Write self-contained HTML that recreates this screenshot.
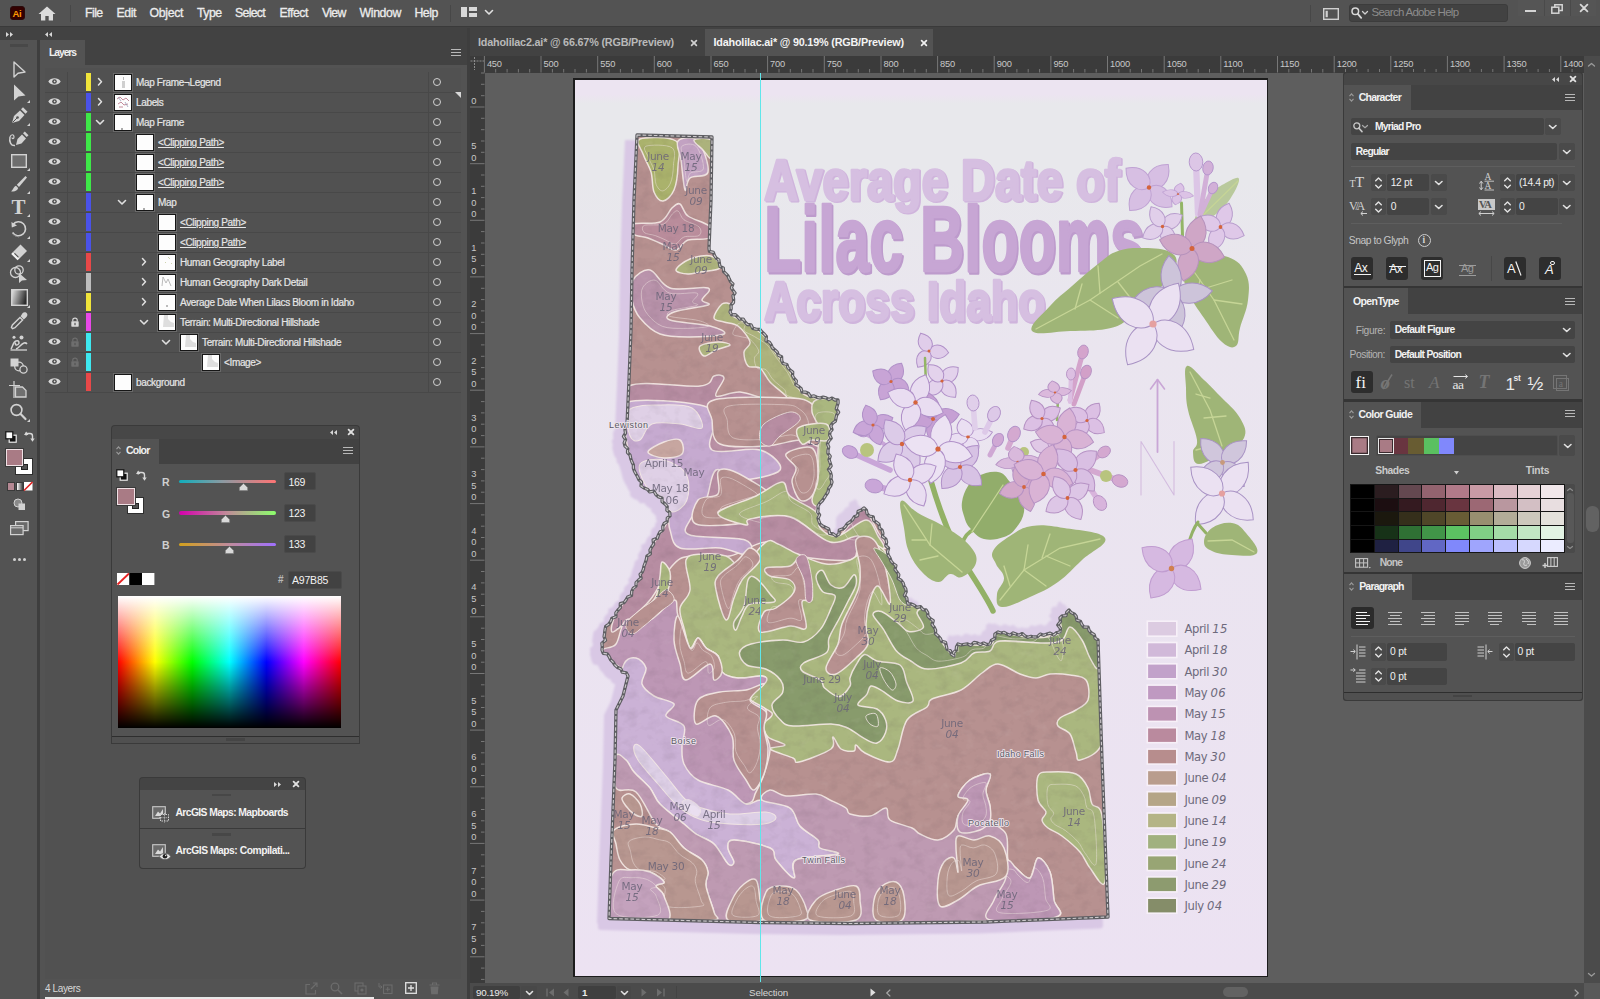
<!DOCTYPE html>
<html lang="en"><head><meta charset="utf-8"><title>Idaholilac.ai @ 90.19% (RGB/Preview) - Adobe Illustrator</title>
<style>
*{box-sizing:border-box;margin:0;padding:0}
html,body{width:1600px;height:999px;overflow:hidden;background:#535353;font-family:"Liberation Sans",sans-serif;color:#ddd;font-size:11px}
.a{position:absolute}
.t{position:absolute;white-space:nowrap;line-height:1;transform-origin:0 50%}
.fld{position:absolute;background:#424242;border-radius:2px}
.dk{position:absolute;background:#2b2b2b;border-radius:2px}
svg{position:absolute;overflow:visible}
.b{font-weight:bold}
</style></head>
<body>
<div class="a" style="left:0px;top:0px;width:1600px;height:26px;background:#535353;"></div>
<div class="a" style="left:0px;top:26px;width:1600px;height:14px;background:#424242;"></div>
<div class="a" style="left:0px;top:26px;width:1600px;height:1px;background:#3a3a3a;"></div>
<div class="a" style="left:10px;top:6px;width:15px;height:14px;background:#330000;border-radius:3px;border:1px solid #2a0a0a"></div>
<div class="t" style="left:12.5px;top:8.6px;font-size:9.5px;color:#ff9a00;font-weight:bold;letter-spacing:-0.3px;">Ai</div>
<svg style="left:38px;top:6px" width="18" height="15" viewBox="0 0 18 15"><path d="M9 0.5 L0.5 8 L3 8 L3 14.5 L7.3 14.5 L7.3 10 L10.7 10 L10.7 14.5 L15 14.5 L15 8 L17.5 8 Z" fill="#dcdcdc"/></svg>
<div class="a" style="left:70px;top:5px;width:1px;height:17px;background:#474747;"></div>
<div class="t" style="left:85px;top:6.8px;font-size:12.3px;color:#ececec;letter-spacing:-0.555px;-webkit-text-stroke:0.3px #ececec;">File</div>
<div class="t" style="left:116.6px;top:6.8px;font-size:12.3px;color:#ececec;letter-spacing:-0.449px;-webkit-text-stroke:0.3px #ececec;">Edit</div>
<div class="t" style="left:149.6px;top:6.8px;font-size:12.3px;color:#ececec;letter-spacing:-0.358px;-webkit-text-stroke:0.3px #ececec;">Object</div>
<div class="t" style="left:197px;top:6.8px;font-size:12.3px;color:#ececec;letter-spacing:-0.516px;-webkit-text-stroke:0.3px #ececec;">Type</div>
<div class="t" style="left:235px;top:6.8px;font-size:12.3px;color:#ececec;letter-spacing:-0.697px;-webkit-text-stroke:0.3px #ececec;">Select</div>
<div class="t" style="left:279.4px;top:6.8px;font-size:12.3px;color:#ececec;letter-spacing:-0.437px;-webkit-text-stroke:0.3px #ececec;">Effect</div>
<div class="t" style="left:322px;top:6.8px;font-size:12.3px;color:#ececec;letter-spacing:-0.709px;-webkit-text-stroke:0.3px #ececec;">View</div>
<div class="t" style="left:359.6px;top:6.8px;font-size:12.3px;color:#ececec;letter-spacing:-0.391px;-webkit-text-stroke:0.3px #ececec;">Window</div>
<div class="t" style="left:414.4px;top:6.8px;font-size:12.3px;color:#ececec;letter-spacing:-0.424px;-webkit-text-stroke:0.3px #ececec;">Help</div>
<div class="a" style="left:449.5px;top:5px;width:1px;height:17px;background:#474747;"></div>
<svg style="left:461px;top:7px" width="16" height="10" viewBox="0 0 16 10"><rect x="0" y="0" width="6" height="10" fill="#d8d8d8"/><rect x="8" y="0" width="8" height="4" fill="#d8d8d8"/><rect x="8" y="6" width="8" height="4" fill="#d8d8d8"/></svg>
<svg style="left:485.0px;top:10.25px" width="8" height="4.5" viewBox="0 0 8 4.5"><path d="M0.5 0.5 L4.0 4.0 L7.5 0.5" fill="none" stroke="#e0e0e0" stroke-width="1.6" stroke-linecap="round" stroke-linejoin="round"/></svg>
<div class="a" style="left:1310px;top:5px;width:1px;height:17px;background:#474747;"></div>
<svg style="left:1322.5px;top:8px" width="16" height="12" viewBox="0 0 16 12"><rect x="0.7" y="0.7" width="14.6" height="10.6" fill="none" stroke="#d0d0d0" stroke-width="1.4"/><rect x="2.6" y="2.8" width="2.2" height="6.4" fill="#d0d0d0"/></svg>
<div class="a" style="left:1348.5px;top:4px;width:159.5px;height:17.5px;background:#424242;border-radius:3px;border:1px solid #3c3c3c"></div>
<svg style="left:1351px;top:7px" width="11" height="12" viewBox="0 0 11 12"><circle cx="4.3" cy="4.3" r="3.3" fill="none" stroke="#d8d8d8" stroke-width="1.5"/><path d="M6.8 6.9 L10.2 10.8" stroke="#d8d8d8" stroke-width="1.8" stroke-linecap="round"/></svg>
<svg style="left:1362.0px;top:11.25px" width="6" height="3.5" viewBox="0 0 6 3.5"><path d="M0.5 0.5 L3.0 3.0 L5.5 0.5" fill="none" stroke="#d0d0d0" stroke-width="1.3" stroke-linecap="round" stroke-linejoin="round"/></svg>
<div class="t" style="left:1371.5px;top:7.2px;font-size:11.5px;color:#8c8c8c;letter-spacing:-0.723px;">Search Adobe Help</div>
<div class="a" style="left:1518px;top:0px;width:78px;height:16px;background:#585858;opacity:.5"></div>
<div class="a" style="left:1544px;top:0px;width:1px;height:16px;background:#4a4a4a;"></div>
<div class="a" style="left:1570px;top:0px;width:1px;height:16px;background:#4a4a4a;"></div>
<div class="a" style="left:1525px;top:9.5px;width:11px;height:2.4px;background:#d4d4d4;"></div>
<svg style="left:1551px;top:4px" width="12" height="10" viewBox="0 0 12 10"><rect x="0.8" y="3.2" width="7" height="6" fill="none" stroke="#d4d4d4" stroke-width="1.5"/><path d="M3.8 3 L3.8 0.8 L11.2 0.8 L11.2 6.6 L8.2 6.6" fill="none" stroke="#d4d4d4" stroke-width="1.5"/></svg>
<svg style="left:1579.5px;top:4.0px" width="8" height="8" viewBox="0 0 8 8"><path d="M0.6 0.6 L7.4 7.4 M7.4 0.6 L0.6 7.4" stroke="#d8d8d8" stroke-width="1.8" stroke-linecap="round"/></svg>
<svg style="left:5.5px;top:32.0px" width="7" height="5" viewBox="0 0 7 5"><path d="M0 0 L3 2.5 L0 5 Z M4 0 L7 2.5 L4 5 Z" fill="#d8d8d8"/></svg>
<svg style="left:45.0px;top:32.0px" width="7" height="5" viewBox="0 0 7 5"><path d="M3 0 L0 2.5 L3 5 Z M7 0 L4 2.5 L7 5 Z" fill="#d8d8d8"/></svg>
<div class="a" style="left:467px;top:28px;width:3px;height:971px;background:#3e3e3e;"></div>
<div class="a" style="left:470px;top:28px;width:1130px;height:28px;background:#424242;"></div>
<div class="a" style="left:705px;top:29px;width:228px;height:27px;background:#535353;"></div>
<div class="t" style="left:478px;top:36.6px;font-size:10.8px;color:#b9b9b9;font-weight:bold;letter-spacing:-0.19px;">Idaholilac2.ai* @ 66.67% (RGB/Preview)</div>
<svg style="left:691.0px;top:39.5px" width="6" height="6" viewBox="0 0 6 6"><path d="M0.6 0.6 L5.4 5.4 M5.4 0.6 L0.6 5.4" stroke="#cfcfcf" stroke-width="1.7" stroke-linecap="round"/></svg>
<div class="t" style="left:713.5px;top:36.6px;font-size:10.8px;color:#f4f4f4;font-weight:bold;letter-spacing:-0.184px;">Idaholilac.ai* @ 90.19% (RGB/Preview)</div>
<svg style="left:920.5px;top:39.5px" width="6" height="6" viewBox="0 0 6 6"><path d="M0.6 0.6 L5.4 5.4 M5.4 0.6 L0.6 5.4" stroke="#f0f0f0" stroke-width="1.7" stroke-linecap="round"/></svg>
<div class="a" style="left:470px;top:56px;width:1130px;height:943px;background:#5e5e5e;"></div>
<div class="a" style="left:573px;top:78px;width:695px;height:899px;background:#1c1c1c"></div>
<div class="a" id="ab" style="left:574.5px;top:79.5px;width:692px;height:896px;background:linear-gradient(180deg,#ece4f1 0%,#ece4f1 1.6%,#e8e8ec 2.6%,#e8e8ec 11%,#eae5ef 30%,#ece2f2 100%);overflow:hidden"><svg style="left:-574.5px;top:-79.5px" width="1600" height="999" viewBox="0 0 1600 999"><defs><clipPath id="nec"><rect x="845" y="470" width="260" height="220"/></clipPath><clipPath id="idc"><path d="M637.0 135.0L712.0 137.0L711.0 200.0L709.0 248.0L709.4 251.4L713.4 252.4L714.4 255.4L716.0 258.0L718.8 259.8L719.3 263.2L720.0 266.5L723.3 268.0L723.6 271.5L725.8 273.7L728.0 276.0L729.2 278.8L730.5 281.6L732.9 283.9L731.4 287.9L733.1 290.5L735.0 293.0L733.0 295.7L733.6 299.2L733.5 302.5L731.0 305.0L731.2 308.6L730.0 312.0L731.7 314.9L735.4 314.7L737.6 316.8L739.7 319.1L743.3 319.1L745.0 322.0L747.4 324.5L751.0 324.8L752.7 328.3L756.0 329.2L759.8 329.3L762.0 332.0L764.4 334.2L766.4 336.6L766.0 340.8L769.4 342.3L771.2 344.9L772.4 347.9L775.0 350.0L777.3 352.2L778.3 355.3L781.6 356.8L781.7 360.6L783.1 363.5L786.9 364.5L787.9 367.7L790.0 370.0L792.7 372.1L792.5 375.7L794.1 378.5L796.4 380.8L795.8 384.7L798.9 386.6L801.2 388.8L802.0 392.0L805.3 392.1L808.3 393.2L810.4 396.7L814.0 395.9L816.9 397.3L820.0 398.0L823.1 397.2L826.1 397.9L828.9 399.5L832.1 398.1L835.0 400.0L838.0 400.0L838.1 403.0L837.1 406.0L836.3 408.9L838.6 412.2L836.7 415.0L836.0 418.0L835.4 421.1L832.6 423.2L830.8 425.7L832.0 429.6L830.0 432.0L829.6 435.0L831.2 438.2L828.8 441.0L827.4 443.9L828.7 447.0L828.0 450.0L827.9 453.3L830.2 456.2L829.0 459.6L830.1 462.7L831.1 465.9L828.5 469.4L830.5 472.4L831.3 475.6L830.9 478.9L832.0 482.0L830.9 485.4L828.7 488.4L828.0 492.0L826.0 495.0L824.2 497.9L822.3 500.7L819.8 503.1L818.0 506.0L818.1 509.0L817.7 512.1L819.6 514.9L818.0 518.2L818.9 521.1L820.0 524.0L822.6 526.1L825.7 527.5L828.7 529.0L829.6 533.4L833.3 534.0L836.0 536.0L838.9 534.2L839.3 530.0L842.9 528.9L845.4 526.7L847.2 523.8L850.0 522.0L852.5 519.8L854.3 516.9L857.6 515.6L858.1 511.4L861.4 510.1L864.0 508.0L866.3 510.2L867.1 513.6L869.2 516.0L873.2 516.8L873.8 520.4L876.5 522.3L879.0 524.3L879.3 528.1L882.0 530.0L882.9 533.1L882.5 536.6L885.8 539.0L886.6 542.2L885.9 545.7L888.6 548.3L887.5 552.0L888.2 555.1L890.0 558.0L891.0 561.0L893.0 563.5L895.9 565.5L895.0 569.5L896.9 572.0L898.8 574.6L898.1 578.5L901.2 580.4L903.1 582.9L904.0 586.0L905.7 588.8L906.2 591.8L904.4 595.4L906.8 598.0L907.1 601.1L908.0 604.0L911.3 604.0L914.2 605.3L916.9 607.3L920.5 606.6L922.8 609.6L926.0 610.0L927.7 612.7L927.9 616.1L930.2 618.6L933.2 620.7L932.1 624.7L934.2 627.2L935.6 630.1L935.5 633.7L938.0 636.0L940.3 638.3L941.6 641.3L945.5 642.3L946.3 645.8L947.0 649.3L950.4 650.7L951.3 654.1L954.0 656.0L953.6 652.5L956.2 650.1L956.5 646.8L958.0 644.0L961.2 645.0L964.4 644.3L967.6 643.9L970.8 645.4L974.0 642.5L977.2 642.9L980.4 644.6L983.6 643.1L986.8 644.6L990.0 644.0L991.3 640.5L994.8 638.5L994.9 634.2L998.0 632.0L1000.9 633.0L1004.1 632.4L1006.9 634.0L1009.8 635.3L1013.2 632.9L1016.1 634.1L1019.0 635.2L1022.2 633.6L1025.0 635.9L1027.8 637.3L1031.0 636.3L1034.0 637.0L1037.3 636.9L1040.2 634.1L1043.8 635.3L1046.9 634.0L1050.1 633.2L1053.8 635.0L1056.7 632.6L1060.0 632.0L1060.5 628.5L1057.8 625.0L1060.5 621.5L1060.0 618.0L1062.1 615.8L1065.9 615.6L1066.8 612.1L1069.0 610.0L1071.0 612.5L1074.2 613.9L1076.2 616.4L1076.9 620.3L1080.4 621.3L1081.8 624.4L1083.7 627.0L1088.1 627.2L1089.2 630.7L1091.4 633.0L1094.2 634.7L1095.2 638.3L1098.0 640.0L1100.0 700.0L1102.0 760.0L1108.0 917.0L986.0 922.0L850.0 923.5L760.0 922.5L609.0 918.5L611.0 860.0L613.0 810.0L615.0 760.0L616.0 710.0L623.0 696.0L628.0 676.0L626.3 672.8L622.2 672.2L620.8 668.7L617.4 667.4L614.9 665.0L613.0 662.0L610.6 659.8L609.2 656.7L607.3 653.9L603.2 653.3L602.0 650.0L602.3 646.6L601.9 643.2L605.5 640.3L604.1 636.7L604.6 633.3L605.0 630.0L605.7 626.4L608.7 624.3L610.7 621.5L611.9 618.3L615.9 616.8L615.9 612.7L618.0 610.0L620.3 607.7L620.3 603.7L624.1 602.6L626.0 600.0L627.7 597.0L631.5 595.5L631.7 591.4L633.3 588.3L636.0 586.0L636.1 582.7L638.4 580.3L641.1 578.1L640.1 574.4L642.3 572.0L643.4 569.1L644.0 566.0L645.2 562.8L646.3 559.6L646.9 556.2L650.4 553.8L650.0 550.0L651.6 547.0L653.6 544.2L653.1 539.9L657.2 538.3L658.4 535.1L660.0 532.0L662.9 530.1L662.8 526.4L664.2 523.5L667.1 521.6L667.3 518.0L670.0 516.0L669.7 512.5L666.9 510.2L667.2 506.5L664.9 503.9L662.1 501.6L662.0 498.0L658.7 496.9L656.0 494.7L654.0 491.2L649.7 491.9L647.3 489.2L644.0 488.0L641.0 486.0L641.5 482.0L639.0 479.7L637.6 476.8L636.0 474.0L634.5 471.2L633.4 468.2L633.4 464.9L632.0 462.0L630.8 458.7L630.1 455.2L627.5 452.5L627.7 448.6L625.0 446.0L624.2 442.8L625.5 439.6L623.5 436.4L625.5 433.2L625.0 430.0L625.4 426.8L627.0 424.0L629.0 380.0L631.0 330.0L632.0 270.0L634.0 200.0Z"/></clipPath><filter id="sb" x="-5%" y="-5%" width="110%" height="110%"><feGaussianBlur stdDeviation="1.2"/></filter><filter id="hs" x="0" y="0" width="100%" height="100%" color-interpolation-filters="sRGB"><feTurbulence type="fractalNoise" baseFrequency="0.08 0.1" numOctaves="3" seed="11" result="n"/><feColorMatrix in="n" type="matrix" values="0 0 0 0 0.28 0 0 0 0 0.22 0 0 0 0 0.26 1.3 0 0 0 -0.6" result="d"/><feColorMatrix in="n" type="matrix" values="0 0 0 0 1 0 0 0 0 0.97 0 0 0 0 0.95 0 -1.2 0 0 0.5" result="l"/><feMerge><feMergeNode in="d"/><feMergeNode in="l"/></feMerge></filter></defs><g filter="url(#sb)"><path d="M637.0 135.0L712.0 137.0L711.0 200.0L709.0 248.0L709.4 251.4L713.4 252.4L714.4 255.4L716.0 258.0L718.8 259.8L719.3 263.2L720.0 266.5L723.3 268.0L723.6 271.5L725.8 273.7L728.0 276.0L729.2 278.8L730.5 281.6L732.9 283.9L731.4 287.9L733.1 290.5L735.0 293.0L733.0 295.7L733.6 299.2L733.5 302.5L731.0 305.0L731.2 308.6L730.0 312.0L731.7 314.9L735.4 314.7L737.6 316.8L739.7 319.1L743.3 319.1L745.0 322.0L747.4 324.5L751.0 324.8L752.7 328.3L756.0 329.2L759.8 329.3L762.0 332.0L764.4 334.2L766.4 336.6L766.0 340.8L769.4 342.3L771.2 344.9L772.4 347.9L775.0 350.0L777.3 352.2L778.3 355.3L781.6 356.8L781.7 360.6L783.1 363.5L786.9 364.5L787.9 367.7L790.0 370.0L792.7 372.1L792.5 375.7L794.1 378.5L796.4 380.8L795.8 384.7L798.9 386.6L801.2 388.8L802.0 392.0L805.3 392.1L808.3 393.2L810.4 396.7L814.0 395.9L816.9 397.3L820.0 398.0L823.1 397.2L826.1 397.9L828.9 399.5L832.1 398.1L835.0 400.0L838.0 400.0L838.1 403.0L837.1 406.0L836.3 408.9L838.6 412.2L836.7 415.0L836.0 418.0L835.4 421.1L832.6 423.2L830.8 425.7L832.0 429.6L830.0 432.0L829.6 435.0L831.2 438.2L828.8 441.0L827.4 443.9L828.7 447.0L828.0 450.0L827.9 453.3L830.2 456.2L829.0 459.6L830.1 462.7L831.1 465.9L828.5 469.4L830.5 472.4L831.3 475.6L830.9 478.9L832.0 482.0L830.9 485.4L828.7 488.4L828.0 492.0L826.0 495.0L824.2 497.9L822.3 500.7L819.8 503.1L818.0 506.0L818.1 509.0L817.7 512.1L819.6 514.9L818.0 518.2L818.9 521.1L820.0 524.0L822.6 526.1L825.7 527.5L828.7 529.0L829.6 533.4L833.3 534.0L836.0 536.0L838.9 534.2L839.3 530.0L842.9 528.9L845.4 526.7L847.2 523.8L850.0 522.0L852.5 519.8L854.3 516.9L857.6 515.6L858.1 511.4L861.4 510.1L864.0 508.0L866.3 510.2L867.1 513.6L869.2 516.0L873.2 516.8L873.8 520.4L876.5 522.3L879.0 524.3L879.3 528.1L882.0 530.0L882.9 533.1L882.5 536.6L885.8 539.0L886.6 542.2L885.9 545.7L888.6 548.3L887.5 552.0L888.2 555.1L890.0 558.0L891.0 561.0L893.0 563.5L895.9 565.5L895.0 569.5L896.9 572.0L898.8 574.6L898.1 578.5L901.2 580.4L903.1 582.9L904.0 586.0L905.7 588.8L906.2 591.8L904.4 595.4L906.8 598.0L907.1 601.1L908.0 604.0L911.3 604.0L914.2 605.3L916.9 607.3L920.5 606.6L922.8 609.6L926.0 610.0L927.7 612.7L927.9 616.1L930.2 618.6L933.2 620.7L932.1 624.7L934.2 627.2L935.6 630.1L935.5 633.7L938.0 636.0L940.3 638.3L941.6 641.3L945.5 642.3L946.3 645.8L947.0 649.3L950.4 650.7L951.3 654.1L954.0 656.0L953.6 652.5L956.2 650.1L956.5 646.8L958.0 644.0L961.2 645.0L964.4 644.3L967.6 643.9L970.8 645.4L974.0 642.5L977.2 642.9L980.4 644.6L983.6 643.1L986.8 644.6L990.0 644.0L991.3 640.5L994.8 638.5L994.9 634.2L998.0 632.0L1000.9 633.0L1004.1 632.4L1006.9 634.0L1009.8 635.3L1013.2 632.9L1016.1 634.1L1019.0 635.2L1022.2 633.6L1025.0 635.9L1027.8 637.3L1031.0 636.3L1034.0 637.0L1037.3 636.9L1040.2 634.1L1043.8 635.3L1046.9 634.0L1050.1 633.2L1053.8 635.0L1056.7 632.6L1060.0 632.0L1060.5 628.5L1057.8 625.0L1060.5 621.5L1060.0 618.0L1062.1 615.8L1065.9 615.6L1066.8 612.1L1069.0 610.0L1071.0 612.5L1074.2 613.9L1076.2 616.4L1076.9 620.3L1080.4 621.3L1081.8 624.4L1083.7 627.0L1088.1 627.2L1089.2 630.7L1091.4 633.0L1094.2 634.7L1095.2 638.3L1098.0 640.0L1100.0 700.0L1102.0 760.0L1108.0 917.0L986.0 922.0L850.0 923.5L760.0 922.5L609.0 918.5L611.0 860.0L613.0 810.0L615.0 760.0L616.0 710.0L623.0 696.0L628.0 676.0L626.3 672.8L622.2 672.2L620.8 668.7L617.4 667.4L614.9 665.0L613.0 662.0L610.6 659.8L609.2 656.7L607.3 653.9L603.2 653.3L602.0 650.0L602.3 646.6L601.9 643.2L605.5 640.3L604.1 636.7L604.6 633.3L605.0 630.0L605.7 626.4L608.7 624.3L610.7 621.5L611.9 618.3L615.9 616.8L615.9 612.7L618.0 610.0L620.3 607.7L620.3 603.7L624.1 602.6L626.0 600.0L627.7 597.0L631.5 595.5L631.7 591.4L633.3 588.3L636.0 586.0L636.1 582.7L638.4 580.3L641.1 578.1L640.1 574.4L642.3 572.0L643.4 569.1L644.0 566.0L645.2 562.8L646.3 559.6L646.9 556.2L650.4 553.8L650.0 550.0L651.6 547.0L653.6 544.2L653.1 539.9L657.2 538.3L658.4 535.1L660.0 532.0L662.9 530.1L662.8 526.4L664.2 523.5L667.1 521.6L667.3 518.0L670.0 516.0L669.7 512.5L666.9 510.2L667.2 506.5L664.9 503.9L662.1 501.6L662.0 498.0L658.7 496.9L656.0 494.7L654.0 491.2L649.7 491.9L647.3 489.2L644.0 488.0L641.0 486.0L641.5 482.0L639.0 479.7L637.6 476.8L636.0 474.0L634.5 471.2L633.4 468.2L633.4 464.9L632.0 462.0L630.8 458.7L630.1 455.2L627.5 452.5L627.7 448.6L625.0 446.0L624.2 442.8L625.5 439.6L623.5 436.4L625.5 433.2L625.0 430.0L625.4 426.8L627.0 424.0L629.0 380.0L631.0 330.0L632.0 270.0L634.0 200.0Z" fill="#d9c8e5" stroke="#d9c8e5" stroke-width="6" stroke-linejoin="round" transform="translate(-8 8.5)"/><path d="M637.0 135.0L712.0 137.0L711.0 200.0L709.0 248.0L709.4 251.4L713.4 252.4L714.4 255.4L716.0 258.0L718.8 259.8L719.3 263.2L720.0 266.5L723.3 268.0L723.6 271.5L725.8 273.7L728.0 276.0L729.2 278.8L730.5 281.6L732.9 283.9L731.4 287.9L733.1 290.5L735.0 293.0L733.0 295.7L733.6 299.2L733.5 302.5L731.0 305.0L731.2 308.6L730.0 312.0L731.7 314.9L735.4 314.7L737.6 316.8L739.7 319.1L743.3 319.1L745.0 322.0L747.4 324.5L751.0 324.8L752.7 328.3L756.0 329.2L759.8 329.3L762.0 332.0L764.4 334.2L766.4 336.6L766.0 340.8L769.4 342.3L771.2 344.9L772.4 347.9L775.0 350.0L777.3 352.2L778.3 355.3L781.6 356.8L781.7 360.6L783.1 363.5L786.9 364.5L787.9 367.7L790.0 370.0L792.7 372.1L792.5 375.7L794.1 378.5L796.4 380.8L795.8 384.7L798.9 386.6L801.2 388.8L802.0 392.0L805.3 392.1L808.3 393.2L810.4 396.7L814.0 395.9L816.9 397.3L820.0 398.0L823.1 397.2L826.1 397.9L828.9 399.5L832.1 398.1L835.0 400.0L838.0 400.0L838.1 403.0L837.1 406.0L836.3 408.9L838.6 412.2L836.7 415.0L836.0 418.0L835.4 421.1L832.6 423.2L830.8 425.7L832.0 429.6L830.0 432.0L829.6 435.0L831.2 438.2L828.8 441.0L827.4 443.9L828.7 447.0L828.0 450.0L827.9 453.3L830.2 456.2L829.0 459.6L830.1 462.7L831.1 465.9L828.5 469.4L830.5 472.4L831.3 475.6L830.9 478.9L832.0 482.0L830.9 485.4L828.7 488.4L828.0 492.0L826.0 495.0L824.2 497.9L822.3 500.7L819.8 503.1L818.0 506.0L818.1 509.0L817.7 512.1L819.6 514.9L818.0 518.2L818.9 521.1L820.0 524.0L822.6 526.1L825.7 527.5L828.7 529.0L829.6 533.4L833.3 534.0L836.0 536.0L838.9 534.2L839.3 530.0L842.9 528.9L845.4 526.7L847.2 523.8L850.0 522.0L852.5 519.8L854.3 516.9L857.6 515.6L858.1 511.4L861.4 510.1L864.0 508.0L866.3 510.2L867.1 513.6L869.2 516.0L873.2 516.8L873.8 520.4L876.5 522.3L879.0 524.3L879.3 528.1L882.0 530.0L882.9 533.1L882.5 536.6L885.8 539.0L886.6 542.2L885.9 545.7L888.6 548.3L887.5 552.0L888.2 555.1L890.0 558.0L891.0 561.0L893.0 563.5L895.9 565.5L895.0 569.5L896.9 572.0L898.8 574.6L898.1 578.5L901.2 580.4L903.1 582.9L904.0 586.0L905.7 588.8L906.2 591.8L904.4 595.4L906.8 598.0L907.1 601.1L908.0 604.0L911.3 604.0L914.2 605.3L916.9 607.3L920.5 606.6L922.8 609.6L926.0 610.0L927.7 612.7L927.9 616.1L930.2 618.6L933.2 620.7L932.1 624.7L934.2 627.2L935.6 630.1L935.5 633.7L938.0 636.0L940.3 638.3L941.6 641.3L945.5 642.3L946.3 645.8L947.0 649.3L950.4 650.7L951.3 654.1L954.0 656.0L953.6 652.5L956.2 650.1L956.5 646.8L958.0 644.0L961.2 645.0L964.4 644.3L967.6 643.9L970.8 645.4L974.0 642.5L977.2 642.9L980.4 644.6L983.6 643.1L986.8 644.6L990.0 644.0L991.3 640.5L994.8 638.5L994.9 634.2L998.0 632.0L1000.9 633.0L1004.1 632.4L1006.9 634.0L1009.8 635.3L1013.2 632.9L1016.1 634.1L1019.0 635.2L1022.2 633.6L1025.0 635.9L1027.8 637.3L1031.0 636.3L1034.0 637.0L1037.3 636.9L1040.2 634.1L1043.8 635.3L1046.9 634.0L1050.1 633.2L1053.8 635.0L1056.7 632.6L1060.0 632.0L1060.5 628.5L1057.8 625.0L1060.5 621.5L1060.0 618.0L1062.1 615.8L1065.9 615.6L1066.8 612.1L1069.0 610.0L1071.0 612.5L1074.2 613.9L1076.2 616.4L1076.9 620.3L1080.4 621.3L1081.8 624.4L1083.7 627.0L1088.1 627.2L1089.2 630.7L1091.4 633.0L1094.2 634.7L1095.2 638.3L1098.0 640.0L1100.0 700.0L1102.0 760.0L1108.0 917.0L986.0 922.0L850.0 923.5L760.0 922.5L609.0 918.5L611.0 860.0L613.0 810.0L615.0 760.0L616.0 710.0L623.0 696.0L628.0 676.0L626.3 672.8L622.2 672.2L620.8 668.7L617.4 667.4L614.9 665.0L613.0 662.0L610.6 659.8L609.2 656.7L607.3 653.9L603.2 653.3L602.0 650.0L602.3 646.6L601.9 643.2L605.5 640.3L604.1 636.7L604.6 633.3L605.0 630.0L605.7 626.4L608.7 624.3L610.7 621.5L611.9 618.3L615.9 616.8L615.9 612.7L618.0 610.0L620.3 607.7L620.3 603.7L624.1 602.6L626.0 600.0L627.7 597.0L631.5 595.5L631.7 591.4L633.3 588.3L636.0 586.0L636.1 582.7L638.4 580.3L641.1 578.1L640.1 574.4L642.3 572.0L643.4 569.1L644.0 566.0L645.2 562.8L646.3 559.6L646.9 556.2L650.4 553.8L650.0 550.0L651.6 547.0L653.6 544.2L653.1 539.9L657.2 538.3L658.4 535.1L660.0 532.0L662.9 530.1L662.8 526.4L664.2 523.5L667.1 521.6L667.3 518.0L670.0 516.0L669.7 512.5L666.9 510.2L667.2 506.5L664.9 503.9L662.1 501.6L662.0 498.0L658.7 496.9L656.0 494.7L654.0 491.2L649.7 491.9L647.3 489.2L644.0 488.0L641.0 486.0L641.5 482.0L639.0 479.7L637.6 476.8L636.0 474.0L634.5 471.2L633.4 468.2L633.4 464.9L632.0 462.0L630.8 458.7L630.1 455.2L627.5 452.5L627.7 448.6L625.0 446.0L624.2 442.8L625.5 439.6L623.5 436.4L625.5 433.2L625.0 430.0L625.4 426.8L627.0 424.0L629.0 380.0L631.0 330.0L632.0 270.0L634.0 200.0Z" fill="#d9c8e5" transform="translate(-12 5)"/><path d="M637.0 135.0L712.0 137.0L711.0 200.0L709.0 248.0L709.4 251.4L713.4 252.4L714.4 255.4L716.0 258.0L718.8 259.8L719.3 263.2L720.0 266.5L723.3 268.0L723.6 271.5L725.8 273.7L728.0 276.0L729.2 278.8L730.5 281.6L732.9 283.9L731.4 287.9L733.1 290.5L735.0 293.0L733.0 295.7L733.6 299.2L733.5 302.5L731.0 305.0L731.2 308.6L730.0 312.0L731.7 314.9L735.4 314.7L737.6 316.8L739.7 319.1L743.3 319.1L745.0 322.0L747.4 324.5L751.0 324.8L752.7 328.3L756.0 329.2L759.8 329.3L762.0 332.0L764.4 334.2L766.4 336.6L766.0 340.8L769.4 342.3L771.2 344.9L772.4 347.9L775.0 350.0L777.3 352.2L778.3 355.3L781.6 356.8L781.7 360.6L783.1 363.5L786.9 364.5L787.9 367.7L790.0 370.0L792.7 372.1L792.5 375.7L794.1 378.5L796.4 380.8L795.8 384.7L798.9 386.6L801.2 388.8L802.0 392.0L805.3 392.1L808.3 393.2L810.4 396.7L814.0 395.9L816.9 397.3L820.0 398.0L823.1 397.2L826.1 397.9L828.9 399.5L832.1 398.1L835.0 400.0L838.0 400.0L838.1 403.0L837.1 406.0L836.3 408.9L838.6 412.2L836.7 415.0L836.0 418.0L835.4 421.1L832.6 423.2L830.8 425.7L832.0 429.6L830.0 432.0L829.6 435.0L831.2 438.2L828.8 441.0L827.4 443.9L828.7 447.0L828.0 450.0L827.9 453.3L830.2 456.2L829.0 459.6L830.1 462.7L831.1 465.9L828.5 469.4L830.5 472.4L831.3 475.6L830.9 478.9L832.0 482.0L830.9 485.4L828.7 488.4L828.0 492.0L826.0 495.0L824.2 497.9L822.3 500.7L819.8 503.1L818.0 506.0L818.1 509.0L817.7 512.1L819.6 514.9L818.0 518.2L818.9 521.1L820.0 524.0L822.6 526.1L825.7 527.5L828.7 529.0L829.6 533.4L833.3 534.0L836.0 536.0L838.9 534.2L839.3 530.0L842.9 528.9L845.4 526.7L847.2 523.8L850.0 522.0L852.5 519.8L854.3 516.9L857.6 515.6L858.1 511.4L861.4 510.1L864.0 508.0L866.3 510.2L867.1 513.6L869.2 516.0L873.2 516.8L873.8 520.4L876.5 522.3L879.0 524.3L879.3 528.1L882.0 530.0L882.9 533.1L882.5 536.6L885.8 539.0L886.6 542.2L885.9 545.7L888.6 548.3L887.5 552.0L888.2 555.1L890.0 558.0L891.0 561.0L893.0 563.5L895.9 565.5L895.0 569.5L896.9 572.0L898.8 574.6L898.1 578.5L901.2 580.4L903.1 582.9L904.0 586.0L905.7 588.8L906.2 591.8L904.4 595.4L906.8 598.0L907.1 601.1L908.0 604.0L911.3 604.0L914.2 605.3L916.9 607.3L920.5 606.6L922.8 609.6L926.0 610.0L927.7 612.7L927.9 616.1L930.2 618.6L933.2 620.7L932.1 624.7L934.2 627.2L935.6 630.1L935.5 633.7L938.0 636.0L940.3 638.3L941.6 641.3L945.5 642.3L946.3 645.8L947.0 649.3L950.4 650.7L951.3 654.1L954.0 656.0L953.6 652.5L956.2 650.1L956.5 646.8L958.0 644.0L961.2 645.0L964.4 644.3L967.6 643.9L970.8 645.4L974.0 642.5L977.2 642.9L980.4 644.6L983.6 643.1L986.8 644.6L990.0 644.0L991.3 640.5L994.8 638.5L994.9 634.2L998.0 632.0L1000.9 633.0L1004.1 632.4L1006.9 634.0L1009.8 635.3L1013.2 632.9L1016.1 634.1L1019.0 635.2L1022.2 633.6L1025.0 635.9L1027.8 637.3L1031.0 636.3L1034.0 637.0L1037.3 636.9L1040.2 634.1L1043.8 635.3L1046.9 634.0L1050.1 633.2L1053.8 635.0L1056.7 632.6L1060.0 632.0L1060.5 628.5L1057.8 625.0L1060.5 621.5L1060.0 618.0L1062.1 615.8L1065.9 615.6L1066.8 612.1L1069.0 610.0L1071.0 612.5L1074.2 613.9L1076.2 616.4L1076.9 620.3L1080.4 621.3L1081.8 624.4L1083.7 627.0L1088.1 627.2L1089.2 630.7L1091.4 633.0L1094.2 634.7L1095.2 638.3L1098.0 640.0L1100.0 700.0L1102.0 760.0L1108.0 917.0L986.0 922.0L850.0 923.5L760.0 922.5L609.0 918.5L611.0 860.0L613.0 810.0L615.0 760.0L616.0 710.0L623.0 696.0L628.0 676.0L626.3 672.8L622.2 672.2L620.8 668.7L617.4 667.4L614.9 665.0L613.0 662.0L610.6 659.8L609.2 656.7L607.3 653.9L603.2 653.3L602.0 650.0L602.3 646.6L601.9 643.2L605.5 640.3L604.1 636.7L604.6 633.3L605.0 630.0L605.7 626.4L608.7 624.3L610.7 621.5L611.9 618.3L615.9 616.8L615.9 612.7L618.0 610.0L620.3 607.7L620.3 603.7L624.1 602.6L626.0 600.0L627.7 597.0L631.5 595.5L631.7 591.4L633.3 588.3L636.0 586.0L636.1 582.7L638.4 580.3L641.1 578.1L640.1 574.4L642.3 572.0L643.4 569.1L644.0 566.0L645.2 562.8L646.3 559.6L646.9 556.2L650.4 553.8L650.0 550.0L651.6 547.0L653.6 544.2L653.1 539.9L657.2 538.3L658.4 535.1L660.0 532.0L662.9 530.1L662.8 526.4L664.2 523.5L667.1 521.6L667.3 518.0L670.0 516.0L669.7 512.5L666.9 510.2L667.2 506.5L664.9 503.9L662.1 501.6L662.0 498.0L658.7 496.9L656.0 494.7L654.0 491.2L649.7 491.9L647.3 489.2L644.0 488.0L641.0 486.0L641.5 482.0L639.0 479.7L637.6 476.8L636.0 474.0L634.5 471.2L633.4 468.2L633.4 464.9L632.0 462.0L630.8 458.7L630.1 455.2L627.5 452.5L627.7 448.6L625.0 446.0L624.2 442.8L625.5 439.6L623.5 436.4L625.5 433.2L625.0 430.0L625.4 426.8L627.0 424.0L629.0 380.0L631.0 330.0L632.0 270.0L634.0 200.0Z" fill="#dccde7" transform="translate(-9 -9)" clip-path="url(#nec)"/></g><path d="M637.0 135.0L712.0 137.0L711.0 200.0L709.0 248.0L709.4 251.4L713.4 252.4L714.4 255.4L716.0 258.0L718.8 259.8L719.3 263.2L720.0 266.5L723.3 268.0L723.6 271.5L725.8 273.7L728.0 276.0L729.2 278.8L730.5 281.6L732.9 283.9L731.4 287.9L733.1 290.5L735.0 293.0L733.0 295.7L733.6 299.2L733.5 302.5L731.0 305.0L731.2 308.6L730.0 312.0L731.7 314.9L735.4 314.7L737.6 316.8L739.7 319.1L743.3 319.1L745.0 322.0L747.4 324.5L751.0 324.8L752.7 328.3L756.0 329.2L759.8 329.3L762.0 332.0L764.4 334.2L766.4 336.6L766.0 340.8L769.4 342.3L771.2 344.9L772.4 347.9L775.0 350.0L777.3 352.2L778.3 355.3L781.6 356.8L781.7 360.6L783.1 363.5L786.9 364.5L787.9 367.7L790.0 370.0L792.7 372.1L792.5 375.7L794.1 378.5L796.4 380.8L795.8 384.7L798.9 386.6L801.2 388.8L802.0 392.0L805.3 392.1L808.3 393.2L810.4 396.7L814.0 395.9L816.9 397.3L820.0 398.0L823.1 397.2L826.1 397.9L828.9 399.5L832.1 398.1L835.0 400.0L838.0 400.0L838.1 403.0L837.1 406.0L836.3 408.9L838.6 412.2L836.7 415.0L836.0 418.0L835.4 421.1L832.6 423.2L830.8 425.7L832.0 429.6L830.0 432.0L829.6 435.0L831.2 438.2L828.8 441.0L827.4 443.9L828.7 447.0L828.0 450.0L827.9 453.3L830.2 456.2L829.0 459.6L830.1 462.7L831.1 465.9L828.5 469.4L830.5 472.4L831.3 475.6L830.9 478.9L832.0 482.0L830.9 485.4L828.7 488.4L828.0 492.0L826.0 495.0L824.2 497.9L822.3 500.7L819.8 503.1L818.0 506.0L818.1 509.0L817.7 512.1L819.6 514.9L818.0 518.2L818.9 521.1L820.0 524.0L822.6 526.1L825.7 527.5L828.7 529.0L829.6 533.4L833.3 534.0L836.0 536.0L838.9 534.2L839.3 530.0L842.9 528.9L845.4 526.7L847.2 523.8L850.0 522.0L852.5 519.8L854.3 516.9L857.6 515.6L858.1 511.4L861.4 510.1L864.0 508.0L866.3 510.2L867.1 513.6L869.2 516.0L873.2 516.8L873.8 520.4L876.5 522.3L879.0 524.3L879.3 528.1L882.0 530.0L882.9 533.1L882.5 536.6L885.8 539.0L886.6 542.2L885.9 545.7L888.6 548.3L887.5 552.0L888.2 555.1L890.0 558.0L891.0 561.0L893.0 563.5L895.9 565.5L895.0 569.5L896.9 572.0L898.8 574.6L898.1 578.5L901.2 580.4L903.1 582.9L904.0 586.0L905.7 588.8L906.2 591.8L904.4 595.4L906.8 598.0L907.1 601.1L908.0 604.0L911.3 604.0L914.2 605.3L916.9 607.3L920.5 606.6L922.8 609.6L926.0 610.0L927.7 612.7L927.9 616.1L930.2 618.6L933.2 620.7L932.1 624.7L934.2 627.2L935.6 630.1L935.5 633.7L938.0 636.0L940.3 638.3L941.6 641.3L945.5 642.3L946.3 645.8L947.0 649.3L950.4 650.7L951.3 654.1L954.0 656.0L953.6 652.5L956.2 650.1L956.5 646.8L958.0 644.0L961.2 645.0L964.4 644.3L967.6 643.9L970.8 645.4L974.0 642.5L977.2 642.9L980.4 644.6L983.6 643.1L986.8 644.6L990.0 644.0L991.3 640.5L994.8 638.5L994.9 634.2L998.0 632.0L1000.9 633.0L1004.1 632.4L1006.9 634.0L1009.8 635.3L1013.2 632.9L1016.1 634.1L1019.0 635.2L1022.2 633.6L1025.0 635.9L1027.8 637.3L1031.0 636.3L1034.0 637.0L1037.3 636.9L1040.2 634.1L1043.8 635.3L1046.9 634.0L1050.1 633.2L1053.8 635.0L1056.7 632.6L1060.0 632.0L1060.5 628.5L1057.8 625.0L1060.5 621.5L1060.0 618.0L1062.1 615.8L1065.9 615.6L1066.8 612.1L1069.0 610.0L1071.0 612.5L1074.2 613.9L1076.2 616.4L1076.9 620.3L1080.4 621.3L1081.8 624.4L1083.7 627.0L1088.1 627.2L1089.2 630.7L1091.4 633.0L1094.2 634.7L1095.2 638.3L1098.0 640.0L1100.0 700.0L1102.0 760.0L1108.0 917.0L986.0 922.0L850.0 923.5L760.0 922.5L609.0 918.5L611.0 860.0L613.0 810.0L615.0 760.0L616.0 710.0L623.0 696.0L628.0 676.0L626.3 672.8L622.2 672.2L620.8 668.7L617.4 667.4L614.9 665.0L613.0 662.0L610.6 659.8L609.2 656.7L607.3 653.9L603.2 653.3L602.0 650.0L602.3 646.6L601.9 643.2L605.5 640.3L604.1 636.7L604.6 633.3L605.0 630.0L605.7 626.4L608.7 624.3L610.7 621.5L611.9 618.3L615.9 616.8L615.9 612.7L618.0 610.0L620.3 607.7L620.3 603.7L624.1 602.6L626.0 600.0L627.7 597.0L631.5 595.5L631.7 591.4L633.3 588.3L636.0 586.0L636.1 582.7L638.4 580.3L641.1 578.1L640.1 574.4L642.3 572.0L643.4 569.1L644.0 566.0L645.2 562.8L646.3 559.6L646.9 556.2L650.4 553.8L650.0 550.0L651.6 547.0L653.6 544.2L653.1 539.9L657.2 538.3L658.4 535.1L660.0 532.0L662.9 530.1L662.8 526.4L664.2 523.5L667.1 521.6L667.3 518.0L670.0 516.0L669.7 512.5L666.9 510.2L667.2 506.5L664.9 503.9L662.1 501.6L662.0 498.0L658.7 496.9L656.0 494.7L654.0 491.2L649.7 491.9L647.3 489.2L644.0 488.0L641.0 486.0L641.5 482.0L639.0 479.7L637.6 476.8L636.0 474.0L634.5 471.2L633.4 468.2L633.4 464.9L632.0 462.0L630.8 458.7L630.1 455.2L627.5 452.5L627.7 448.6L625.0 446.0L624.2 442.8L625.5 439.6L623.5 436.4L625.5 433.2L625.0 430.0L625.4 426.8L627.0 424.0L629.0 380.0L631.0 330.0L632.0 270.0L634.0 200.0Z" fill="#b79190"/><g clip-path="url(#idc)"><path d="M640.0 139.0C645.6 136.8 669.5 136.4 676.0 141.0C682.5 145.6 678.3 157.7 678.0 166.0C677.7 174.3 676.5 184.1 674.0 190.0C671.5 195.9 666.4 200.7 663.0 201.0C659.6 201.3 656.0 196.9 654.0 192.0C652.0 187.1 652.9 178.5 651.0 172.0C649.1 165.5 644.9 159.6 643.0 154.0C641.1 148.4 634.4 141.2 640.0 139.0Z" fill="#aab26c" stroke="#f3e8e4" stroke-width="1.49" stroke-opacity="0.92"/><path d="M646.0 146.2C650.1 144.7 667.3 144.4 672.0 147.7C676.6 151.0 673.7 159.7 673.4 165.7C673.2 171.7 672.4 178.7 670.5 183.0C668.7 187.3 665.1 190.6 662.6 190.9C660.2 191.1 657.6 188.0 656.1 184.4C654.7 180.9 655.3 174.7 654.0 170.0C652.6 165.4 649.6 161.1 648.2 157.0C646.9 153.0 642.0 147.8 646.0 146.2Z" fill="none" stroke="#f3e8e4" stroke-width="0.9" stroke-opacity="0.5"/><path d="M678.0 141.0C680.9 137.8 692.9 135.7 698.0 141.0C703.1 146.3 709.4 165.7 708.0 172.0C706.6 178.3 693.9 174.9 690.0 178.0C686.1 181.1 686.5 193.1 685.0 190.0C683.5 186.9 682.2 168.3 681.0 160.0C679.8 151.7 675.1 144.2 678.0 141.0Z" fill="#c2a2c2" stroke="#f3e8e4" stroke-width="1.49" stroke-opacity="0.92"/><path d="M681.8 146.4C683.9 144.1 692.5 142.6 696.2 146.4C699.9 150.2 704.4 164.2 703.4 168.7C702.4 173.2 693.3 170.8 690.4 173.0C687.6 175.2 687.9 183.9 686.8 181.7C685.7 179.5 684.8 166.1 684.0 160.1C683.1 154.1 679.7 148.7 681.8 146.4Z" fill="none" stroke="#f3e8e4" stroke-width="0.9" stroke-opacity="0.5"/><path d="M694.0 140.0C695.4 138.3 708.1 136.9 711.0 140.0C713.9 143.1 712.4 156.3 711.0 158.0C709.6 159.7 705.9 153.1 703.0 150.0C700.1 146.9 692.6 141.7 694.0 140.0Z" fill="#acb27c" stroke="#f3e8e4" stroke-width="1.49" stroke-opacity="0.92"/><path d="M633.0 224.0C637.6 222.0 653.4 224.7 660.0 222.0C666.6 219.3 668.6 211.1 672.0 208.0C675.4 204.9 677.3 202.6 680.0 204.0C682.7 205.4 683.1 212.3 688.0 216.0C692.9 219.7 705.4 222.3 709.0 226.0C712.6 229.7 712.6 235.6 709.0 238.0C705.4 240.4 693.6 238.0 688.0 240.0C682.4 242.0 680.4 249.3 676.0 250.0C671.6 250.7 666.8 246.0 662.0 244.0C657.2 242.0 652.9 239.7 648.0 238.0C643.1 236.3 635.5 236.4 633.0 234.0C630.5 231.6 628.4 226.0 633.0 224.0Z" fill="#b98c9b" stroke="#f3e8e4" stroke-width="1.49" stroke-opacity="0.92"/><path d="M644.3 225.4C647.6 224.0 659.0 225.9 663.7 224.0C668.5 222.0 669.9 216.1 672.4 213.9C674.8 211.7 676.2 210.1 678.1 211.0C680.1 212.0 680.4 217.0 683.9 219.7C687.5 222.4 696.5 224.2 699.0 226.9C701.6 229.6 701.6 233.8 699.0 235.5C696.5 237.2 687.9 235.5 683.9 237.0C679.9 238.4 678.4 243.7 675.3 244.2C672.1 244.6 668.6 241.3 665.2 239.8C661.8 238.4 658.7 236.7 655.1 235.5C651.6 234.3 646.1 234.3 644.3 232.6C642.5 230.9 641.0 226.9 644.3 225.4Z" fill="none" stroke="#f3e8e4" stroke-width="0.9" stroke-opacity="0.5"/><path d="M676.0 270.0C676.3 267.4 684.0 261.4 690.0 259.0C696.0 256.6 705.9 254.5 711.0 256.0C716.1 257.5 721.9 265.3 720.0 268.0C718.1 270.7 705.4 271.0 700.0 272.0C694.6 273.0 692.1 274.3 688.0 274.0C683.9 273.7 675.7 272.6 676.0 270.0Z" fill="#acb27c" stroke="#f3e8e4" stroke-width="1.49" stroke-opacity="0.92"/><path d="M633.0 280.0C636.1 274.9 643.7 268.6 650.0 270.0C656.3 271.4 660.1 284.9 670.0 288.0C679.9 291.1 702.6 286.0 708.0 288.0C713.4 290.0 702.0 297.1 702.0 300.0C702.0 302.9 712.8 303.0 708.0 305.0C703.2 307.0 680.5 309.4 674.0 312.0C667.5 314.6 663.9 317.6 670.0 320.0C676.1 322.4 700.8 323.6 710.0 326.0C719.2 328.4 727.4 332.1 724.0 334.0C720.6 335.9 700.9 337.0 690.0 337.0C679.1 337.0 668.5 337.2 660.0 334.0C651.5 330.8 644.8 323.8 640.0 318.0C635.2 312.2 633.2 306.5 632.0 300.0C630.8 293.5 629.9 285.1 633.0 280.0Z" fill="#b993ab" stroke="#f3e8e4" stroke-width="1.49" stroke-opacity="0.92"/><path d="M642.8 287.4C645.0 283.7 650.5 279.2 655.1 280.2C659.6 281.2 662.4 290.9 669.5 293.1C676.6 295.3 692.9 291.7 696.8 293.1C700.7 294.6 692.5 299.7 692.5 301.8C692.5 303.9 700.2 303.9 696.8 305.4C693.4 306.8 677.0 308.6 672.3 310.4C667.7 312.2 665.1 314.5 669.5 316.2C673.9 317.9 691.6 318.8 698.3 320.5C704.9 322.2 710.8 324.9 708.3 326.3C705.9 327.6 691.7 328.4 683.9 328.4C676.0 328.4 668.4 328.6 662.3 326.3C656.1 323.9 651.3 318.9 647.9 314.7C644.4 310.6 643.0 306.4 642.1 301.8C641.2 297.1 640.6 291.0 642.8 287.4Z" fill="none" stroke="#f3e8e4" stroke-width="0.9" stroke-opacity="0.5"/><path d="M714.0 318.0C713.7 314.9 719.1 306.2 722.0 304.0C724.9 301.8 729.6 303.3 731.0 305.0C732.4 306.7 727.8 311.1 730.0 314.0C732.2 316.9 738.6 318.6 744.0 322.0C749.4 325.4 756.7 328.9 762.0 334.0C767.3 339.1 770.2 345.5 775.0 352.0C779.8 358.5 785.4 365.0 790.0 372.0C794.6 379.0 796.9 388.4 802.0 393.0C807.1 397.6 813.9 397.6 820.0 399.0C826.1 400.4 835.3 397.8 838.0 401.0C840.7 404.2 837.4 412.7 836.0 418.0C834.6 423.3 831.2 427.2 830.0 432.0C828.8 436.8 830.7 446.3 829.0 446.0C827.3 445.7 822.9 435.8 820.0 430.0C817.1 424.2 817.1 416.4 812.0 412.0C806.9 407.6 794.4 406.7 790.0 404.0C785.6 401.3 789.4 399.7 786.0 396.0C782.6 392.3 774.4 386.8 770.0 382.0C765.6 377.2 763.7 370.7 760.0 368.0C756.3 365.3 750.7 368.7 748.0 366.0C745.3 363.3 743.7 356.1 744.0 352.0C744.3 347.9 751.0 346.4 750.0 342.0C749.0 337.6 742.4 329.4 738.0 326.0C733.6 322.6 728.1 323.4 724.0 322.0C719.9 320.6 714.3 321.1 714.0 318.0Z" fill="#acb27c" stroke="#f3e8e4" stroke-width="1.49" stroke-opacity="0.92"/><path d="M732.8 333.6C732.5 331.4 736.4 325.2 738.5 323.6C740.6 322.0 744.0 323.1 745.0 324.3C746.0 325.5 742.7 328.7 744.3 330.8C745.9 332.9 750.4 334.1 754.4 336.5C758.3 339.0 763.5 341.5 767.3 345.2C771.1 348.8 773.3 353.5 776.7 358.1C780.1 362.8 784.2 367.5 787.5 372.5C790.8 377.5 792.5 384.3 796.1 387.6C799.8 391.0 804.7 391.0 809.1 392.0C813.5 392.9 820.1 391.1 822.0 393.4C824.0 395.7 821.6 401.9 820.6 405.6C819.6 409.4 817.1 412.3 816.3 415.7C815.4 419.2 816.8 426.1 815.6 425.8C814.3 425.6 811.2 418.5 809.1 414.3C807.0 410.1 807.0 404.5 803.3 401.3C799.7 398.1 790.7 397.5 787.5 395.6C784.3 393.6 787.1 392.5 784.6 389.8C782.2 387.1 776.3 383.2 773.1 379.7C769.9 376.3 768.6 371.6 765.9 369.6C763.2 367.7 759.2 370.2 757.2 368.2C755.3 366.3 754.1 361.1 754.4 358.1C754.6 355.2 759.4 354.1 758.7 350.9C757.9 347.7 753.2 341.9 750.0 339.4C746.9 337.0 742.9 337.5 740.0 336.5C737.0 335.6 733.0 335.9 732.8 333.6Z" fill="none" stroke="#f3e8e4" stroke-width="0.9" stroke-opacity="0.5"/><path d="M700.0 346.0C702.4 343.6 712.9 342.2 718.0 342.0C723.1 341.8 730.3 343.6 730.0 345.0C729.7 346.4 720.4 348.1 716.0 350.0C711.6 351.9 706.7 356.7 704.0 356.0C701.3 355.3 697.6 348.4 700.0 346.0Z" fill="#acb27c" stroke="#f3e8e4" stroke-width="1.49" stroke-opacity="0.92"/><path d="M629.0 386.0C641.4 379.5 685.5 387.7 700.0 386.0C714.5 384.3 709.9 377.4 714.0 376.0C718.1 374.6 723.7 374.6 724.0 378.0C724.3 381.4 713.3 393.6 716.0 396.0C718.7 398.4 730.8 391.3 740.0 392.0C749.2 392.7 761.5 399.0 770.0 400.0C778.5 401.0 782.9 397.3 790.0 398.0C797.1 398.7 806.2 400.3 812.0 404.0C817.8 407.7 821.6 408.8 824.0 420.0C826.4 431.2 826.3 458.1 826.0 470.0C825.7 481.9 823.7 482.9 822.0 490.0C820.3 497.1 816.3 505.5 816.0 512.0C815.7 518.5 816.6 523.6 820.0 528.0C823.4 532.4 830.9 538.7 836.0 538.0C841.1 537.3 845.2 528.8 850.0 524.0C854.8 519.2 859.2 508.6 864.0 510.0C868.8 511.4 874.3 525.5 878.0 532.0C881.7 538.5 889.1 545.6 886.0 548.0C882.9 550.4 866.1 544.0 860.0 546.0C853.9 548.0 860.2 558.3 850.0 560.0C839.8 561.7 814.3 559.1 800.0 556.0C785.7 552.9 777.9 542.0 766.0 542.0C754.1 542.0 742.9 553.6 730.0 556.0C717.1 558.4 699.9 554.3 690.0 556.0C680.1 557.7 678.8 558.5 672.0 566.0C665.2 573.5 657.8 590.5 650.0 600.0C642.2 609.5 632.5 616.6 626.0 622.0C619.5 627.4 613.7 633.4 612.0 632.0C610.3 630.6 611.9 621.8 616.0 614.0C620.1 606.2 630.2 596.9 636.0 586.0C641.8 575.1 644.2 561.9 650.0 550.0C655.8 538.1 668.0 524.8 670.0 516.0C672.0 507.2 666.4 502.8 662.0 498.0C657.6 493.2 649.1 494.1 644.0 488.0C638.9 481.9 635.2 469.1 632.0 462.0C628.8 454.9 625.9 452.5 625.0 446.0C624.1 439.5 626.3 434.2 627.0 424.0C627.7 413.8 616.6 392.5 629.0 386.0Z" fill="#b78da2" stroke="#f3e8e4" stroke-width="1.49" stroke-opacity="0.92"/><path d="M628.0 402.0C640.8 397.8 685.2 401.9 700.0 405.0C714.8 408.1 713.0 412.4 715.0 420.0C717.0 427.6 704.4 444.9 712.0 450.0C719.6 455.1 748.4 446.6 760.0 450.0C771.6 453.4 783.4 464.9 780.0 470.0C776.6 475.1 750.9 480.0 740.0 480.0C729.1 480.0 721.8 466.6 716.0 470.0C710.2 473.4 710.4 491.5 706.0 500.0C701.6 508.5 692.7 514.0 690.0 520.0C687.3 526.0 680.6 531.6 690.0 535.0C699.4 538.4 735.1 536.6 745.0 540.0C754.9 543.4 752.2 553.6 748.0 555.0C743.8 556.4 731.6 549.2 720.0 548.0C708.4 546.8 688.5 551.1 680.0 548.0C671.5 544.9 672.0 535.4 670.0 530.0C668.0 524.6 669.4 521.4 668.0 516.0C666.6 510.6 666.1 502.8 662.0 498.0C657.9 493.2 649.1 494.1 644.0 488.0C638.9 481.9 635.2 471.9 632.0 462.0C628.8 452.1 625.7 440.2 625.0 430.0C624.3 419.8 615.2 406.2 628.0 402.0Z" fill="#c6aad0" stroke="#f3e8e4" stroke-width="1.49" stroke-opacity="0.92"/><path d="M629.0 410.0C634.1 404.7 649.3 405.3 660.0 405.0C670.7 404.7 684.9 404.1 692.0 408.0C699.1 411.9 704.0 425.3 702.0 428.0C700.0 430.7 688.5 424.7 680.0 424.0C671.5 423.3 658.8 421.3 652.0 424.0C645.2 426.7 643.7 438.0 640.0 440.0C636.3 442.0 631.9 441.1 630.0 436.0C628.1 430.9 623.9 415.3 629.0 410.0Z" fill="#dfd0e6" stroke="#f3e8e4" stroke-width="1.03" stroke-opacity="0.92"/><path d="M640.0 464.0C643.1 459.6 656.2 458.3 664.0 460.0C671.8 461.7 682.1 467.2 686.0 474.0C689.9 480.8 689.4 493.5 687.0 500.0C684.6 506.5 676.6 512.7 672.0 512.0C667.4 511.3 664.4 500.4 660.0 496.0C655.6 491.6 649.4 491.4 646.0 486.0C642.6 480.6 636.9 468.4 640.0 464.0Z" fill="#dfd0e6" stroke="#f3e8e4" stroke-width="1.03" stroke-opacity="0.92"/><path d="M648.0 452.0C648.0 449.3 658.6 444.0 664.0 442.0C669.4 440.0 676.9 438.0 680.0 440.0C683.1 442.0 684.7 450.9 682.0 454.0C679.3 457.1 669.8 458.3 664.0 458.0C658.2 457.7 648.0 454.7 648.0 452.0Z" fill="#c7a6a0" stroke="#f3e8e4" stroke-width="1.49" stroke-opacity="0.92"/><path d="M714.0 400.0C727.3 396.3 773.3 397.3 790.0 398.0C806.7 398.7 806.2 400.3 812.0 404.0C817.8 407.7 822.3 412.9 824.0 420.0C825.7 427.1 826.1 442.6 822.0 446.0C817.9 449.4 809.5 440.0 800.0 440.0C790.5 440.0 779.6 445.3 766.0 446.0C752.4 446.7 729.2 448.4 720.0 444.0C710.8 439.6 713.0 427.5 712.0 420.0C711.0 412.5 700.7 403.7 714.0 400.0Z" fill="#b79190" stroke="#f3e8e4" stroke-width="1.49" stroke-opacity="0.92"/><path d="M728.8 406.1C738.3 403.4 771.5 404.2 783.5 404.7C795.5 405.2 795.1 406.3 799.3 409.0C803.5 411.7 806.7 415.4 808.0 420.5C809.2 425.7 809.4 436.8 806.5 439.2C803.6 441.7 797.5 434.9 790.7 434.9C783.8 434.9 776.0 438.8 766.2 439.2C756.4 439.7 739.7 441.0 733.1 437.8C726.5 434.6 728.0 425.9 727.3 420.5C726.6 415.1 719.2 408.8 728.8 406.1Z" fill="none" stroke="#f3e8e4" stroke-width="0.9" stroke-opacity="0.5"/><path d="M764.0 424.0C769.1 419.2 783.9 412.7 790.0 412.0C796.1 411.3 801.7 415.9 800.0 420.0C798.3 424.1 785.1 431.6 780.0 436.0C774.9 440.4 773.4 445.3 770.0 446.0C766.6 446.7 761.0 443.7 760.0 440.0C759.0 436.3 758.9 428.8 764.0 424.0Z" fill="#b78da2" stroke="#f3e8e4" stroke-width="0.92" stroke-opacity="0.92"/><path d="M718.0 472.0C720.0 467.9 724.6 468.6 730.0 470.0C735.4 471.4 743.2 475.9 750.0 480.0C756.8 484.1 769.0 490.9 770.0 494.0C771.0 497.1 764.8 494.9 756.0 498.0C747.2 501.1 719.7 507.9 718.0 512.0C716.3 516.1 749.7 520.0 746.0 522.0C742.3 524.0 704.2 527.7 696.0 524.0C687.8 520.3 694.3 505.1 698.0 500.0C701.7 494.9 714.6 498.8 718.0 494.0C721.4 489.2 716.0 476.1 718.0 472.0Z" fill="#b79190" stroke="#f3e8e4" stroke-width="1.49" stroke-opacity="0.92"/><path d="M720.6 479.3C722.1 476.4 725.4 476.9 729.3 477.9C733.2 478.9 738.8 482.2 743.7 485.1C748.6 488.0 757.3 493.0 758.1 495.2C758.8 497.4 754.4 495.8 748.0 498.0C741.6 500.3 721.9 505.2 720.6 508.1C719.4 511.1 743.5 513.9 740.8 515.3C738.1 516.8 710.7 519.5 704.8 516.8C698.9 514.1 703.5 503.2 706.2 499.5C708.9 495.8 718.2 498.6 720.6 495.2C723.1 491.7 719.2 482.3 720.6 479.3Z" fill="none" stroke="#f3e8e4" stroke-width="0.9" stroke-opacity="0.5"/><path d="M786.0 454.0C788.7 450.6 806.6 444.6 812.0 448.0C817.4 451.4 818.0 465.8 818.0 474.0C818.0 482.2 815.1 491.6 812.0 496.0C808.9 500.4 803.4 502.4 800.0 500.0C796.6 497.6 792.7 487.4 792.0 482.0C791.3 476.6 797.0 472.8 796.0 468.0C795.0 463.2 783.3 457.4 786.0 454.0Z" fill="#b79190" stroke="#f3e8e4" stroke-width="1.49" stroke-opacity="0.92"/><path d="M791.1 459.2C793.0 456.7 805.9 452.4 809.8 454.9C813.7 457.3 814.1 467.7 814.1 473.6C814.1 479.5 812.0 486.3 809.8 489.4C807.6 492.6 803.6 494.0 801.2 492.3C798.7 490.6 795.9 483.3 795.4 479.4C794.9 475.4 799.0 472.7 798.3 469.3C797.6 465.8 789.1 461.6 791.1 459.2Z" fill="none" stroke="#f3e8e4" stroke-width="0.9" stroke-opacity="0.5"/><path d="M718.0 513.0C719.7 508.1 745.1 501.3 756.0 496.0C766.9 490.7 776.2 482.0 782.0 482.0C787.8 482.0 784.2 490.9 790.0 496.0C795.8 501.1 810.9 506.6 816.0 512.0C821.1 517.4 816.3 523.9 820.0 528.0C823.7 532.1 830.2 537.4 838.0 536.0C845.8 534.6 859.2 520.0 866.0 520.0C872.8 520.0 874.9 531.2 878.0 536.0C881.1 540.8 885.4 546.0 884.0 548.0C882.6 550.0 874.4 550.0 870.0 548.0C865.6 546.0 864.8 537.0 858.0 536.0C851.2 535.0 841.6 545.2 830.0 542.0C818.4 538.8 803.6 520.9 790.0 517.0C776.4 513.1 757.5 517.6 750.0 519.0C742.5 520.4 751.4 526.0 746.0 525.0C740.6 524.0 716.3 517.9 718.0 513.0Z" fill="#aab77f" stroke="#f3e8e4" stroke-width="1.49" stroke-opacity="0.92"/><path d="M739.4 513.7C740.7 510.1 759.0 505.2 766.8 501.4C774.6 497.6 781.3 491.4 785.5 491.4C789.7 491.4 787.1 497.8 791.3 501.4C795.4 505.1 806.3 509.0 810.0 513.0C813.7 516.9 810.2 521.5 812.9 524.5C815.6 527.4 820.2 531.2 825.8 530.2C831.5 529.3 841.1 518.7 846.0 518.7C850.9 518.7 852.4 526.8 854.6 530.2C856.8 533.7 859.9 537.4 858.9 538.9C858.0 540.3 852.1 540.3 848.9 538.9C845.7 537.4 845.1 531.0 840.2 530.2C835.3 529.5 828.4 536.9 820.1 534.6C811.7 532.2 801.1 519.4 791.3 516.6C781.5 513.7 767.9 517.0 762.5 518.0C757.1 519.0 763.5 523.0 759.6 522.3C755.7 521.6 738.2 517.2 739.4 513.7Z" fill="none" stroke="#f3e8e4" stroke-width="0.9" stroke-opacity="0.5"/><path d="M816.0 400.0C820.4 398.1 834.6 397.9 838.0 401.0C841.4 404.1 837.4 412.7 836.0 418.0C834.6 423.3 831.4 426.6 830.0 432.0C828.6 437.4 827.7 441.5 828.0 450.0C828.3 458.5 832.3 474.4 832.0 482.0C831.7 489.6 828.4 490.9 826.0 495.0C823.6 499.1 820.4 505.1 818.0 506.0C815.6 506.9 812.0 504.4 812.0 500.0C812.0 495.6 817.0 488.5 818.0 480.0C819.0 471.5 817.7 458.5 818.0 450.0C818.3 441.5 821.0 436.5 820.0 430.0C819.0 423.5 812.7 417.1 812.0 412.0C811.3 406.9 811.6 401.9 816.0 400.0Z" fill="#aab77f" stroke="#f3e8e4" stroke-width="1.49" stroke-opacity="0.92"/><path d="M818.2 412.8C821.4 411.5 831.6 411.3 834.1 413.5C836.5 415.7 833.6 422.0 832.6 425.8C831.7 429.6 829.3 431.9 828.3 435.8C827.3 439.8 826.6 442.7 826.9 448.8C827.1 454.9 830.0 466.3 829.8 471.8C829.5 477.3 827.2 478.3 825.4 481.2C823.7 484.1 821.4 488.5 819.7 489.1C818.0 489.7 815.4 488.0 815.4 484.8C815.4 481.6 818.9 476.5 819.7 470.4C820.4 464.3 819.4 454.9 819.7 448.8C819.9 442.7 821.9 439.1 821.1 434.4C820.4 429.7 815.8 425.1 815.4 421.4C814.9 417.8 815.1 414.1 818.2 412.8Z" fill="none" stroke="#f3e8e4" stroke-width="0.9" stroke-opacity="0.5"/><path d="M798.0 428.0C802.1 424.6 820.9 422.0 826.0 424.0C831.1 426.0 830.4 437.3 828.0 440.0C825.6 442.7 816.4 439.3 812.0 440.0C807.6 440.7 804.4 446.0 802.0 444.0C799.6 442.0 793.9 431.4 798.0 428.0Z" fill="#aab77f" stroke="#f3e8e4" stroke-width="1.49" stroke-opacity="0.92"/><path d="M686.0 560.0C688.0 553.9 695.2 554.7 702.0 554.0C708.8 553.3 719.2 554.0 726.0 556.0C732.8 558.0 735.2 568.4 742.0 566.0C748.8 563.6 759.9 545.7 766.0 542.0C772.1 538.3 772.6 542.0 778.0 544.0C783.4 546.0 789.8 550.6 798.0 554.0C806.2 557.4 817.2 563.0 826.0 564.0C834.8 565.0 841.8 563.2 850.0 560.0C858.2 556.8 867.2 545.3 874.0 545.0C880.8 544.7 884.9 551.0 890.0 558.0C895.1 565.0 900.9 578.2 904.0 586.0C907.1 593.8 904.3 599.9 908.0 604.0C911.7 608.1 920.9 604.6 926.0 610.0C931.1 615.4 933.2 628.2 938.0 636.0C942.8 643.8 950.6 654.6 954.0 656.0C957.4 657.4 951.9 646.0 958.0 644.0C964.1 642.0 983.2 646.0 990.0 644.0C996.8 642.0 990.5 633.2 998.0 632.0C1005.5 630.8 1023.5 637.0 1034.0 637.0C1044.5 637.0 1055.6 635.2 1060.0 632.0C1064.4 628.8 1058.5 621.7 1060.0 618.0C1061.5 614.3 1062.5 606.3 1069.0 610.0C1075.5 613.7 1092.7 624.7 1098.0 640.0C1103.3 655.3 1099.5 682.1 1100.0 700.0C1100.5 717.9 1104.4 734.8 1101.0 745.0C1097.6 755.2 1084.2 758.8 1080.0 760.0C1075.8 761.2 1077.7 756.4 1076.0 752.0C1074.3 747.6 1073.1 738.4 1070.0 734.0C1066.9 729.6 1059.7 728.7 1058.0 726.0C1056.3 723.3 1056.9 720.7 1060.0 718.0C1063.1 715.3 1071.2 713.1 1076.0 710.0C1080.8 706.9 1086.3 705.1 1088.0 700.0C1089.7 694.9 1089.1 684.2 1086.0 680.0C1082.9 675.8 1076.1 676.0 1070.0 675.0C1063.9 674.0 1055.8 673.5 1050.0 674.0C1044.2 674.5 1041.1 678.0 1036.0 678.0C1030.9 678.0 1026.5 676.4 1020.0 674.0C1013.5 671.6 1004.5 664.2 998.0 664.0C991.5 663.8 988.3 668.6 982.0 673.0C975.7 677.4 969.5 685.6 961.0 690.0C952.5 694.4 937.8 696.1 932.0 699.0C926.2 701.9 931.2 703.4 927.0 707.0C922.8 710.6 911.9 712.9 907.0 720.0C902.1 727.1 900.9 741.9 898.0 749.0C895.1 756.1 895.6 761.3 890.0 762.0C884.4 762.7 870.8 755.9 865.0 753.0C859.2 750.1 857.9 745.3 856.0 745.0C854.1 744.7 856.5 750.3 854.0 751.0C851.5 751.7 844.6 751.4 841.0 749.0C837.4 746.6 834.7 737.0 833.0 737.0C831.3 737.0 836.8 744.8 831.0 749.0C825.2 753.2 805.5 760.5 799.0 762.0C792.5 763.5 797.9 760.2 793.0 758.0C788.1 755.8 771.4 751.2 770.0 749.0C768.6 746.8 785.3 747.0 785.0 745.0C784.7 743.0 771.6 740.6 768.0 737.0C764.4 733.4 763.3 728.1 764.0 724.0C764.7 719.9 774.5 717.2 772.0 713.0C769.5 708.8 750.7 703.9 749.0 699.0C747.3 694.1 759.1 687.2 762.0 684.0C764.9 680.8 766.0 681.4 766.0 680.0C766.0 678.6 766.8 676.3 762.0 676.0C757.2 675.7 744.8 678.7 738.0 678.0C731.2 677.3 725.4 675.7 722.0 672.0C718.6 668.3 720.7 660.1 718.0 656.0C715.3 651.9 709.4 651.1 706.0 648.0C702.6 644.9 700.7 638.0 698.0 638.0C695.3 638.0 692.4 649.7 690.0 648.0C687.6 646.3 685.7 634.8 684.0 628.0C682.3 621.2 679.0 614.5 680.0 608.0C681.0 601.5 689.0 598.2 690.0 590.0C691.0 581.8 684.0 566.1 686.0 560.0Z" fill="#aab77f" stroke="#f3e8e4" stroke-width="1.49" stroke-opacity="0.92"/><path d="M718.0 576.0C721.7 570.9 732.6 564.8 738.0 560.0C743.4 555.2 746.3 548.0 750.0 548.0C753.7 548.0 761.4 554.6 760.0 560.0C758.6 565.4 746.4 573.5 742.0 580.0C737.6 586.5 736.7 591.2 734.0 598.0C731.3 604.8 729.1 621.4 726.0 620.0C722.9 618.6 717.4 597.5 716.0 590.0C714.6 582.5 714.3 581.1 718.0 576.0Z" fill="#b79190" stroke="#f3e8e4" stroke-width="1.49" stroke-opacity="0.92"/><path d="M722.6 577.0C725.3 573.3 733.1 568.9 737.0 565.5C740.9 562.0 742.9 556.8 745.6 556.8C748.3 556.8 753.8 561.5 752.8 565.5C751.8 569.4 743.0 575.2 739.8 579.9C736.7 584.5 736.0 587.9 734.1 592.8C732.1 597.7 730.5 609.6 728.3 608.7C726.1 607.7 722.1 592.4 721.1 587.1C720.1 581.7 719.9 580.7 722.6 577.0Z" fill="none" stroke="#f3e8e4" stroke-width="0.9" stroke-opacity="0.5"/><path d="M766.0 568.0C769.4 566.3 783.9 568.0 790.0 566.0C796.1 564.0 798.6 553.6 802.0 556.0C805.4 558.4 808.3 572.5 810.0 580.0C811.7 587.5 813.4 596.3 812.0 600.0C810.6 603.7 803.0 597.2 802.0 602.0C801.0 606.8 808.0 623.9 806.0 628.0C804.0 632.1 797.8 625.3 790.0 626.0C782.2 626.7 764.4 634.4 760.0 632.0C755.6 629.6 761.3 616.1 764.0 612.0C766.7 607.9 770.9 611.4 776.0 608.0C781.1 604.6 791.6 596.8 794.0 592.0C796.4 587.2 794.1 582.7 790.0 580.0C785.9 577.3 774.1 578.0 770.0 576.0C765.9 574.0 762.6 569.7 766.0 568.0Z" fill="#b79190" stroke="#f3e8e4" stroke-width="1.49" stroke-opacity="0.92"/><path d="M772.6 576.4C775.1 575.2 785.5 576.5 789.9 575.0C794.3 573.5 796.1 566.1 798.6 567.8C801.0 569.5 803.1 579.7 804.3 585.1C805.5 590.5 806.7 596.8 805.8 599.5C804.8 602.2 799.3 597.5 798.6 600.9C797.8 604.3 802.9 616.7 801.4 619.6C800.0 622.6 795.6 617.7 789.9 618.2C784.3 618.7 771.5 624.2 768.3 622.5C765.1 620.8 769.2 611.0 771.2 608.1C773.2 605.2 776.2 607.7 779.8 605.2C783.5 602.8 791.1 597.1 792.8 593.7C794.5 590.3 792.9 587.0 789.9 585.1C787.0 583.1 778.5 583.7 775.5 582.2C772.6 580.7 770.2 577.7 772.6 576.4Z" fill="none" stroke="#f3e8e4" stroke-width="0.9" stroke-opacity="0.5"/><path d="M796.0 560.0C796.3 555.9 803.3 552.6 806.0 556.0C808.7 559.4 811.0 572.5 812.0 580.0C813.0 587.5 813.0 596.6 812.0 600.0C811.0 603.4 807.4 603.4 806.0 600.0C804.6 596.6 805.7 586.8 804.0 580.0C802.3 573.2 795.7 564.1 796.0 560.0Z" fill="#b78da2" stroke="#f3e8e4" stroke-width="0.92" stroke-opacity="0.92"/><path d="M856.0 540.0C858.4 535.2 868.9 534.9 874.0 540.0C879.1 545.1 883.3 559.1 886.0 570.0C888.7 580.9 891.4 601.3 890.0 604.0C888.6 606.7 881.4 586.7 878.0 586.0C874.6 585.3 872.0 593.5 870.0 600.0C868.0 606.5 866.3 616.5 866.0 624.0C865.7 631.5 869.7 638.2 868.0 644.0C866.3 649.8 861.4 652.9 856.0 658.0C850.6 663.1 841.1 672.3 836.0 674.0C830.9 675.7 825.7 673.1 826.0 668.0C826.3 662.9 835.3 651.5 838.0 644.0C840.7 636.5 838.6 633.2 842.0 624.0C845.4 614.8 854.9 599.5 858.0 590.0C861.1 580.5 860.3 576.5 860.0 568.0C859.7 559.5 853.6 544.8 856.0 540.0Z" fill="#b79190" stroke="#f3e8e4" stroke-width="1.49" stroke-opacity="0.92"/><path d="M857.2 558.6C858.9 555.2 866.5 554.9 870.1 558.6C873.8 562.3 876.8 572.4 878.8 580.2C880.7 588.0 882.6 602.7 881.7 604.7C880.7 606.7 875.5 592.2 873.0 591.7C870.6 591.2 868.7 597.2 867.3 601.8C865.8 606.5 864.6 613.7 864.4 619.1C864.1 624.5 867.0 629.3 865.8 633.5C864.6 637.7 861.1 639.9 857.2 643.6C853.3 647.2 846.4 653.9 842.8 655.1C839.1 656.3 835.3 654.4 835.6 650.8C835.8 647.1 842.3 638.9 844.2 633.5C846.2 628.1 844.6 625.7 847.1 619.1C849.5 612.5 856.4 601.5 858.6 594.6C860.8 587.8 860.3 584.9 860.1 578.8C859.8 572.7 855.5 562.0 857.2 558.6Z" fill="none" stroke="#f3e8e4" stroke-width="0.9" stroke-opacity="0.5"/><path d="M748.0 580.0C750.0 575.2 752.3 575.6 756.0 578.0C759.7 580.4 766.9 589.9 770.0 594.0C773.1 598.1 777.4 600.3 774.0 602.0C770.6 603.7 755.4 601.6 750.0 604.0C744.6 606.4 744.4 611.6 742.0 616.0C739.6 620.4 737.4 629.0 736.0 630.0C734.6 631.0 732.6 626.1 734.0 622.0C735.4 617.9 741.6 613.1 744.0 606.0C746.4 598.9 746.0 584.8 748.0 580.0Z" fill="#94a672" stroke="#f3e8e4" stroke-width="1.49" stroke-opacity="0.92"/><path d="M739.5 652.5C740.2 648.9 743.7 646.1 751.0 644.0C758.3 641.9 773.7 640.3 782.6 640.0C791.5 639.7 797.2 643.8 803.6 642.0C810.0 640.2 815.7 635.1 820.4 629.4C825.1 623.7 828.5 614.1 831.0 608.4C833.5 602.7 836.4 598.6 835.0 595.7C833.6 592.8 825.7 594.7 822.5 591.5C819.3 588.3 816.0 580.6 816.0 577.0C816.0 573.4 820.0 569.1 822.5 570.5C825.0 571.9 827.4 582.1 831.0 585.0C834.6 587.9 839.6 589.1 843.5 587.3C847.4 585.5 851.9 575.1 854.0 574.7C856.1 574.3 857.1 580.4 856.0 585.0C854.9 589.6 850.6 596.2 847.7 602.0C844.8 607.8 842.2 612.9 839.0 619.0C835.8 625.1 831.1 632.3 829.0 638.0C826.9 643.7 831.0 648.2 826.7 652.5C822.4 656.8 807.7 659.8 803.6 663.0C799.5 666.2 799.6 668.5 802.5 671.4C805.4 674.3 816.6 677.2 820.4 680.0C824.2 682.8 821.4 685.2 824.6 688.0C827.8 690.8 834.7 697.0 839.0 696.7C843.3 696.4 848.1 689.2 850.0 686.0C851.9 682.8 849.0 681.3 850.0 677.7C851.0 674.1 853.5 668.9 856.0 665.0C858.5 661.1 861.0 655.3 864.6 654.6C868.2 653.9 871.0 659.2 877.0 661.0C883.0 662.8 895.0 661.4 900.0 665.0C905.0 668.6 904.4 675.9 906.6 682.0C908.8 688.1 914.5 697.8 913.0 701.0C911.5 704.2 903.4 702.8 898.0 701.0C892.6 699.2 886.0 692.9 881.4 690.4C876.8 687.9 873.5 685.3 871.0 686.0C868.5 686.7 868.9 691.4 866.7 694.6C864.5 697.8 856.2 702.6 858.0 705.0C859.8 707.4 872.3 706.5 877.0 709.0C881.7 711.5 884.1 716.0 885.6 720.0C887.1 724.0 887.1 728.5 885.6 732.4C884.1 736.3 880.6 741.9 877.0 743.0C873.4 744.1 869.6 741.2 864.6 738.7C859.6 736.2 853.4 730.5 847.7 728.0C842.0 725.5 840.3 724.3 831.0 724.0C821.7 723.7 801.6 726.7 793.0 726.0C784.4 725.3 784.1 723.6 780.5 720.0C776.9 716.4 771.6 709.7 772.0 705.0C772.4 700.3 781.2 696.8 782.6 692.5C784.0 688.2 783.4 684.0 780.5 680.0C777.6 676.0 771.4 671.5 765.7 669.0C760.0 666.5 751.3 667.8 746.8 665.0C742.3 662.2 738.8 656.1 739.5 652.5Z" fill="#889b6c" stroke="#f3e8e4" stroke-width="1.49" stroke-opacity="0.92"/><path d="M873.0 614.7C872.6 611.7 877.1 610.1 881.4 611.5C885.6 612.9 893.4 619.6 898.0 623.0C902.6 626.4 904.4 630.8 908.7 631.5C913.0 632.2 922.0 630.5 923.4 627.3C924.8 624.1 916.6 615.5 917.0 612.6C917.4 609.7 922.4 606.0 926.0 610.0C929.6 614.0 933.2 628.2 938.0 636.0C942.8 643.8 950.6 654.5 954.0 656.0C957.4 657.5 951.9 646.9 958.0 645.0C964.1 643.1 983.2 647.0 990.0 645.0C996.8 643.0 990.5 634.2 998.0 633.0C1005.5 631.8 1023.5 638.0 1034.0 638.0C1044.5 638.0 1055.6 636.4 1060.0 633.0C1064.4 629.6 1058.5 621.9 1060.0 618.0C1061.5 614.1 1062.5 606.3 1069.0 610.0C1075.5 613.7 1093.1 630.1 1098.0 640.0C1102.9 649.9 1099.4 664.9 1098.0 668.0C1096.6 671.1 1092.7 662.8 1090.0 658.0C1087.3 653.2 1085.4 645.3 1082.0 640.0C1078.6 634.7 1073.4 627.0 1070.0 627.0C1066.6 627.0 1066.4 637.3 1062.0 640.0C1057.6 642.7 1054.5 642.8 1044.0 643.0C1033.5 643.2 1009.2 639.6 1000.0 641.0C990.8 642.4 994.4 649.0 990.0 651.0C985.6 653.0 978.9 651.0 974.0 653.0C969.1 655.0 968.9 660.3 961.0 663.0C953.1 665.7 936.1 669.3 927.6 669.0C919.1 668.7 916.2 664.2 910.8 661.0C905.4 657.8 900.6 655.8 896.0 650.4C891.4 645.0 887.4 635.5 883.5 629.4C879.6 623.3 873.4 617.7 873.0 614.7Z" fill="#889b6c" stroke="#f3e8e4" stroke-width="1.49" stroke-opacity="0.92"/><path d="M899.5 622.1C899.3 619.9 902.5 618.8 905.6 619.8C908.6 620.8 914.2 625.6 917.5 628.1C920.9 630.5 922.1 633.7 925.2 634.2C928.3 634.7 934.8 633.5 935.8 631.2C936.8 628.9 930.9 622.7 931.2 620.6C931.5 618.5 935.1 615.8 937.7 618.7C940.3 621.6 942.9 631.8 946.3 637.4C949.8 643.1 955.4 650.7 957.9 651.8C960.3 652.9 956.3 645.3 960.7 643.9C965.1 642.6 978.9 645.4 983.8 643.9C988.7 642.4 984.2 636.1 989.5 635.3C994.9 634.4 1007.9 638.9 1015.5 638.9C1023.0 638.9 1031.0 637.7 1034.2 635.3C1037.4 632.8 1033.1 627.3 1034.2 624.5C1035.3 621.7 1036.0 616.0 1040.7 618.7C1045.3 621.4 1058.0 633.2 1061.5 640.3C1065.1 647.4 1062.5 658.3 1061.5 660.5C1060.6 662.7 1057.7 656.7 1055.8 653.3C1053.8 649.8 1052.5 644.1 1050.0 640.3C1047.6 636.5 1043.8 631.0 1041.4 631.0C1038.9 631.0 1038.8 638.4 1035.6 640.3C1032.4 642.3 1030.2 642.3 1022.7 642.5C1015.1 642.6 997.6 640.1 991.0 641.0C984.4 642.0 987.0 646.8 983.8 648.2C980.6 649.7 975.8 648.2 972.3 649.7C968.7 651.1 968.6 654.9 962.9 656.9C957.2 658.8 945.0 661.4 938.8 661.2C932.7 660.9 930.6 657.7 926.8 655.4C922.9 653.2 919.4 651.7 916.1 647.8C912.8 643.9 909.9 637.0 907.1 632.7C904.3 628.3 899.8 624.3 899.5 622.1Z" fill="none" stroke="#f3e8e4" stroke-width="0.9" stroke-opacity="0.5"/><path d="M874.0 548.0C875.4 547.3 884.9 551.5 890.0 558.0C895.1 564.5 900.9 578.2 904.0 586.0C907.1 593.8 908.7 601.6 908.0 604.0C907.3 606.4 902.7 604.1 900.0 600.0C897.3 595.9 895.1 586.5 892.0 580.0C888.9 573.5 885.1 567.4 882.0 562.0C878.9 556.6 872.6 548.7 874.0 548.0Z" fill="#889b6c" stroke="#f3e8e4" stroke-width="0.92" stroke-opacity="0.92"/><path d="M880.0 668.0C881.0 666.6 887.3 669.3 890.0 672.0C892.7 674.7 895.7 680.9 896.0 684.0C896.3 687.1 894.0 690.7 892.0 690.0C890.0 689.3 886.0 683.7 884.0 680.0C882.0 676.3 879.0 669.4 880.0 668.0Z" fill="#7d9166" stroke="#f3e8e4" stroke-width="0.92" stroke-opacity="0.92"/><path d="M866.0 716.0C867.0 714.3 874.0 712.3 876.0 714.0C878.0 715.7 879.0 724.3 878.0 726.0C877.0 727.7 872.0 725.7 870.0 724.0C868.0 722.3 865.0 717.7 866.0 716.0Z" fill="#7d9166" stroke="#f3e8e4" stroke-width="0.92" stroke-opacity="0.92"/><path d="M662.0 562.0C663.7 561.3 669.0 567.2 670.0 572.0C671.0 576.8 670.0 584.2 668.0 590.0C666.0 595.8 662.1 601.4 658.0 606.0C653.9 610.6 646.5 616.0 644.0 617.0C641.5 618.0 641.0 615.6 643.0 612.0C645.0 608.4 653.1 602.1 656.0 596.0C658.9 589.9 659.0 581.8 660.0 576.0C661.0 570.2 660.3 562.7 662.0 562.0Z" fill="#aab77f" stroke="#f3e8e4" stroke-width="1.49" stroke-opacity="0.92"/><path d="M603.0 650.0C603.5 646.9 612.1 649.1 616.0 644.0C619.9 638.9 620.2 624.1 626.0 620.0C631.8 615.9 641.8 623.4 650.0 620.0C658.2 616.6 669.2 600.7 674.0 600.0C678.8 599.3 675.3 607.8 678.0 616.0C680.7 624.2 686.6 644.3 690.0 648.0C693.4 651.7 695.3 638.0 698.0 638.0C700.7 638.0 702.6 644.9 706.0 648.0C709.4 651.1 715.3 651.9 718.0 656.0C720.7 660.1 718.6 668.3 722.0 672.0C725.4 675.7 731.2 677.3 738.0 678.0C744.8 678.7 757.2 675.3 762.0 676.0C766.8 676.7 768.0 678.3 766.0 682.0C764.0 685.7 750.0 693.2 750.0 698.0C750.0 702.8 763.6 704.9 766.0 710.0C768.4 715.1 763.3 721.4 764.0 728.0C764.7 734.6 770.0 741.2 770.0 749.0C770.0 756.8 766.4 766.7 764.0 774.0C761.6 781.3 759.1 786.9 756.0 792.0C752.9 797.1 755.5 802.6 746.0 804.0C736.5 805.4 714.6 804.1 700.0 800.0C685.4 795.9 670.2 790.2 660.0 780.0C649.8 769.8 646.1 753.6 640.0 740.0C633.9 726.4 626.0 710.9 624.0 700.0C622.0 689.1 629.9 682.5 628.0 676.0C626.1 669.5 617.2 666.4 613.0 662.0C608.8 657.6 602.5 653.1 603.0 650.0Z" fill="#bd97b5" stroke="#f3e8e4" stroke-width="1.49" stroke-opacity="0.92"/><path d="M678.0 616.0C680.7 617.4 686.6 644.3 690.0 648.0C693.4 651.7 695.3 638.0 698.0 638.0C700.7 638.0 702.6 644.9 706.0 648.0C709.4 651.1 715.3 651.9 718.0 656.0C720.7 660.1 722.7 667.9 722.0 672.0C721.3 676.1 716.0 681.4 714.0 680.0C712.0 678.6 714.8 664.0 710.0 664.0C705.2 664.0 691.1 680.0 686.0 680.0C680.9 680.0 682.0 670.8 680.0 664.0C678.0 657.2 674.3 648.2 674.0 640.0C673.7 631.8 675.3 614.6 678.0 616.0Z" fill="#b79190" stroke="#f3e8e4" stroke-width="1.49" stroke-opacity="0.92"/><path d="M682.6 627.0C684.6 628.0 688.8 647.4 691.3 650.1C693.7 652.8 695.1 642.9 697.0 642.9C699.0 642.9 700.3 647.9 702.8 650.1C705.2 652.3 709.5 652.9 711.4 655.8C713.4 658.8 714.8 664.4 714.3 667.3C713.8 670.3 710.0 674.1 708.6 673.1C707.1 672.1 709.1 661.6 705.7 661.6C702.2 661.6 692.1 673.1 688.4 673.1C684.7 673.1 685.5 666.5 684.1 661.6C682.6 656.7 680.0 650.2 679.8 644.3C679.5 638.4 680.7 626.0 682.6 627.0Z" fill="none" stroke="#f3e8e4" stroke-width="0.9" stroke-opacity="0.5"/><path d="M698.0 700.0C702.1 694.6 711.8 693.7 720.0 692.0C728.2 690.3 738.5 691.4 746.0 690.0C753.5 688.6 763.3 682.3 764.0 684.0C764.7 685.7 749.7 695.2 750.0 700.0C750.3 704.8 763.6 707.2 766.0 712.0C768.4 716.8 763.7 721.5 764.0 728.0C764.3 734.5 768.0 742.2 768.0 750.0C768.0 757.8 766.4 767.2 764.0 774.0C761.6 780.8 757.1 789.0 754.0 790.0C750.9 791.0 749.4 785.1 746.0 780.0C742.6 774.9 736.4 767.5 734.0 760.0C731.6 752.5 735.1 743.5 732.0 736.0C728.9 728.5 722.1 718.0 716.0 716.0C709.9 714.0 699.1 726.7 696.0 724.0C692.9 721.3 693.9 705.4 698.0 700.0Z" fill="#b79190" stroke="#f3e8e4" stroke-width="1.49" stroke-opacity="0.92"/><path d="M709.9 708.0C712.8 704.1 719.9 703.5 725.7 702.3C731.6 701.1 739.1 701.8 744.5 700.8C749.8 699.9 756.9 695.3 757.4 696.5C757.9 697.8 747.1 704.6 747.3 708.0C747.6 711.5 757.1 713.3 758.9 716.7C760.6 720.1 757.2 723.6 757.4 728.2C757.7 732.9 760.3 738.4 760.3 744.0C760.3 749.7 759.1 756.4 757.4 761.3C755.7 766.2 752.4 772.1 750.2 772.8C748.0 773.6 746.9 769.3 744.5 765.6C742.0 762.0 737.5 756.6 735.8 751.2C734.1 745.9 736.6 739.4 734.4 734.0C732.2 728.6 727.3 721.0 722.9 719.6C718.4 718.1 710.7 727.3 708.5 725.3C706.2 723.4 707.0 712.0 709.9 708.0Z" fill="none" stroke="#f3e8e4" stroke-width="0.9" stroke-opacity="0.5"/><path d="M626.0 624.0C627.4 619.9 635.2 614.1 640.0 610.0C644.8 605.9 649.6 603.4 654.0 600.0C658.4 596.6 662.6 590.0 666.0 590.0C669.4 590.0 675.0 596.3 674.0 600.0C673.0 603.7 665.1 607.6 660.0 612.0C654.9 616.4 648.8 622.3 644.0 626.0C639.2 629.7 635.1 634.3 632.0 634.0C628.9 633.7 624.6 628.1 626.0 624.0Z" fill="#b79190" stroke="#f3e8e4" stroke-width="0.92" stroke-opacity="0.92"/><path d="M616.0 700.0C617.4 684.4 620.6 671.1 624.0 664.0C627.4 656.9 632.3 657.3 636.0 658.0C639.7 658.7 645.0 663.6 646.0 668.0C647.0 672.4 640.6 679.2 642.0 684.0C643.4 688.8 648.6 692.6 654.0 696.0C659.4 699.4 672.0 700.6 674.0 704.0C676.0 707.4 664.3 712.3 666.0 716.0C667.7 719.7 681.3 720.9 684.0 726.0C686.7 731.1 682.0 739.5 682.0 746.0C682.0 752.5 681.3 758.2 684.0 764.0C686.7 769.8 690.5 775.6 698.0 780.0C705.5 784.4 719.8 785.9 728.0 790.0C736.2 794.1 740.2 802.3 746.0 804.0C751.8 805.7 754.5 799.3 762.0 800.0C769.5 800.7 783.5 803.6 790.0 808.0C796.5 812.4 795.2 820.6 800.0 826.0C804.8 831.4 814.6 836.3 818.0 840.0C821.4 843.7 816.6 845.6 820.0 848.0C823.4 850.4 842.1 852.0 838.0 854.0C833.9 856.0 803.5 855.9 796.0 860.0C788.5 864.1 797.4 878.0 794.0 878.0C790.6 878.0 780.1 865.1 776.0 860.0C771.9 854.9 777.1 851.4 770.0 848.0C762.9 844.6 741.1 840.0 734.0 840.0C726.9 840.0 728.0 844.3 728.0 848.0C728.0 851.7 734.0 859.3 734.0 862.0C734.0 864.7 731.4 867.1 728.0 864.0C724.6 860.9 719.4 849.1 714.0 844.0C708.6 838.9 701.1 837.4 696.0 834.0C690.9 830.6 690.1 829.1 684.0 824.0C677.9 818.9 665.8 810.1 660.0 804.0C654.2 797.9 654.4 793.4 650.0 788.0C645.6 782.6 638.1 776.8 634.0 772.0C629.9 767.2 629.1 762.7 626.0 760.0C622.9 757.3 617.7 766.2 616.0 756.0C614.3 745.8 614.6 715.6 616.0 700.0Z" fill="#cbb2d6" stroke="#f3e8e4" stroke-width="1.49" stroke-opacity="0.92"/><path d="M634.0 746.0C634.7 744.0 636.6 742.9 642.0 748.0C647.4 753.1 658.5 767.2 666.0 776.0C673.5 784.8 679.9 794.6 686.0 800.0C692.1 805.4 694.5 805.6 702.0 808.0C709.5 810.4 719.1 813.3 730.0 814.0C740.9 814.7 758.2 811.3 766.0 812.0C773.8 812.7 776.3 816.0 776.0 818.0C775.7 820.0 771.8 823.0 764.0 824.0C756.2 825.0 740.5 824.7 730.0 824.0C719.5 823.3 710.5 822.7 702.0 820.0C693.5 817.3 687.5 814.1 680.0 808.0C672.5 801.9 665.1 792.2 658.0 784.0C650.9 775.8 642.1 766.5 638.0 760.0C633.9 753.5 633.3 748.0 634.0 746.0Z" fill="#ddcfe6" stroke="#f3e8e4" stroke-width="1.03" stroke-opacity="0.92"/><path d="M682.0 802.0C682.3 800.0 686.9 799.0 690.0 800.0C693.1 801.0 698.6 805.3 700.0 808.0C701.4 810.7 700.0 815.3 698.0 816.0C696.0 816.7 690.7 814.4 688.0 812.0C685.3 809.6 681.7 804.0 682.0 802.0Z" fill="#eadff0" stroke="#f3e8e4" stroke-width="0.69" stroke-opacity="0.92"/><path d="M616.0 756.0C617.7 751.2 622.9 757.3 626.0 760.0C629.1 762.7 629.9 767.2 634.0 772.0C638.1 776.8 645.6 782.6 650.0 788.0C654.4 793.4 654.2 797.9 660.0 804.0C665.8 810.1 677.9 818.9 684.0 824.0C690.1 829.1 690.9 830.6 696.0 834.0C701.1 837.4 708.6 838.9 714.0 844.0C719.4 849.1 724.6 860.9 728.0 864.0C731.4 867.1 734.0 864.7 734.0 862.0C734.0 859.3 728.0 851.7 728.0 848.0C728.0 844.3 726.9 840.0 734.0 840.0C741.1 840.0 762.9 844.6 770.0 848.0C777.1 851.4 771.9 854.9 776.0 860.0C780.1 865.1 790.6 878.0 794.0 878.0C797.4 878.0 788.5 864.1 796.0 860.0C803.5 855.9 833.9 856.0 838.0 854.0C842.1 852.0 823.4 850.4 820.0 848.0C816.6 845.6 821.4 843.7 818.0 840.0C814.6 836.3 804.8 831.4 800.0 826.0C795.2 820.6 796.5 812.4 790.0 808.0C783.5 803.6 765.4 803.1 762.0 800.0C758.6 796.9 765.9 790.7 770.0 790.0C774.1 789.3 778.2 795.3 786.0 796.0C793.8 796.7 808.5 793.3 816.0 794.0C823.5 794.7 824.9 797.6 830.0 800.0C835.1 802.4 842.6 805.6 846.0 808.0C849.4 810.4 845.9 812.6 850.0 814.0C854.1 815.4 863.9 817.0 870.0 816.0C876.1 815.0 882.6 807.3 886.0 808.0C889.4 808.7 885.6 816.6 890.0 820.0C894.4 823.4 906.9 825.6 912.0 828.0C917.1 830.4 915.6 832.0 920.0 834.0C924.4 836.0 932.2 840.7 938.0 840.0C943.8 839.3 950.6 834.1 954.0 830.0C957.4 825.9 955.3 821.4 958.0 816.0C960.7 810.6 970.0 801.4 970.0 798.0C970.0 794.6 958.0 799.1 958.0 796.0C958.0 792.9 964.6 783.7 970.0 780.0C975.4 776.3 987.3 772.3 990.0 774.0C992.7 775.7 986.0 784.6 986.0 790.0C986.0 795.4 989.3 800.9 990.0 806.0C990.7 811.1 987.3 815.2 990.0 820.0C992.7 824.8 1002.9 827.2 1006.0 834.0C1009.1 840.8 1006.3 854.2 1008.0 860.0C1009.7 865.8 1012.3 864.9 1016.0 868.0C1019.7 871.1 1026.3 879.7 1030.0 878.0C1033.7 876.3 1034.6 859.0 1038.0 858.0C1041.4 857.0 1047.3 864.9 1050.0 872.0C1052.7 879.1 1053.0 892.4 1054.0 900.0C1055.0 907.6 1067.6 913.4 1056.0 917.0C1044.4 920.6 1021.0 920.1 986.0 921.0C951.0 921.9 888.4 922.5 850.0 922.5C811.6 922.5 783.1 921.4 760.0 921.0C736.9 920.6 721.8 921.5 714.0 920.0C706.2 918.5 715.4 917.8 714.0 912.0C712.6 906.2 707.0 892.8 706.0 886.0C705.0 879.2 708.7 876.4 708.0 872.0C707.3 867.6 706.1 864.1 702.0 860.0C697.9 855.9 689.4 852.8 684.0 848.0C678.6 843.2 674.8 836.1 670.0 832.0C665.2 827.9 661.8 830.8 656.0 824.0C650.2 817.2 642.8 798.1 636.0 792.0C629.2 785.9 619.4 794.1 616.0 788.0C612.6 781.9 614.3 760.8 616.0 756.0Z" fill="#be9ab2" stroke="#f3e8e4" stroke-width="1.49" stroke-opacity="0.92"/><path d="M958.0 796.0C958.3 792.6 964.6 783.7 970.0 780.0C975.4 776.3 987.3 772.3 990.0 774.0C992.7 775.7 986.0 784.6 986.0 790.0C986.0 795.4 989.3 800.9 990.0 806.0C990.7 811.1 991.7 815.9 990.0 820.0C988.3 824.1 985.1 828.0 980.0 830.0C974.9 832.0 963.7 834.4 960.0 832.0C956.3 829.6 956.6 821.4 958.0 816.0C959.4 810.6 968.0 803.4 968.0 800.0C968.0 796.6 957.7 799.4 958.0 796.0Z" fill="#bd97b5" stroke="#f3e8e4" stroke-width="1.49" stroke-opacity="0.92"/><path d="M962.8 798.6C963.0 796.2 967.5 789.8 971.4 787.1C975.3 784.4 983.9 781.6 985.8 782.8C987.8 784.0 982.9 790.4 982.9 794.3C982.9 798.2 985.3 802.2 985.8 805.8C986.3 809.5 987.0 813.0 985.8 815.9C984.6 818.8 982.3 821.6 978.6 823.1C974.9 824.6 966.9 826.3 964.2 824.5C961.5 822.8 961.8 816.9 962.8 813.0C963.8 809.1 970.0 804.0 970.0 801.5C970.0 799.1 962.5 801.1 962.8 798.6Z" fill="none" stroke="#f3e8e4" stroke-width="0.9" stroke-opacity="0.5"/><path d="M990.0 862.0C990.3 859.3 1003.6 859.0 1008.0 860.0C1012.4 861.0 1012.3 864.9 1016.0 868.0C1019.7 871.1 1026.3 879.7 1030.0 878.0C1033.7 876.3 1034.6 859.0 1038.0 858.0C1041.4 857.0 1047.3 864.9 1050.0 872.0C1052.7 879.1 1053.0 892.4 1054.0 900.0C1055.0 907.6 1066.9 913.6 1056.0 917.0C1045.1 920.4 1000.5 922.9 990.0 920.0C979.5 917.1 991.3 907.5 994.0 900.0C996.7 892.5 1006.7 882.5 1006.0 876.0C1005.3 869.5 989.7 864.7 990.0 862.0Z" fill="#bd97b5" stroke="#f3e8e4" stroke-width="1.49" stroke-opacity="0.92"/><path d="M999.5 870.8C999.7 868.9 1009.2 868.7 1012.4 869.4C1015.6 870.1 1015.5 873.0 1018.2 875.2C1020.9 877.4 1025.6 883.6 1028.3 882.4C1031.0 881.1 1031.6 868.7 1034.0 868.0C1036.5 867.2 1040.7 872.9 1042.7 878.0C1044.6 883.2 1044.8 892.7 1045.5 898.2C1046.3 903.7 1054.8 908.0 1047.0 910.4C1039.1 912.9 1007.0 914.7 999.5 912.6C991.9 910.5 1000.4 903.6 1002.3 898.2C1004.3 892.8 1011.5 885.6 1011.0 880.9C1010.5 876.3 999.2 872.8 999.5 870.8Z" fill="none" stroke="#f3e8e4" stroke-width="0.9" stroke-opacity="0.5"/><path d="M614.0 830.0C617.4 826.6 628.9 824.3 636.0 824.0C643.1 823.7 650.2 826.6 656.0 828.0C661.8 829.4 665.2 828.6 670.0 832.0C674.8 835.4 678.6 843.2 684.0 848.0C689.4 852.8 697.9 855.9 702.0 860.0C706.1 864.1 707.3 867.6 708.0 872.0C708.7 876.4 705.0 879.2 706.0 886.0C707.0 892.8 712.6 906.2 714.0 912.0C715.4 917.8 722.2 918.6 714.0 920.0C705.8 921.4 674.5 924.1 666.0 920.0C657.5 915.9 665.7 901.8 664.0 896.0C662.3 890.2 656.0 888.4 656.0 886.0C656.0 883.6 665.0 884.4 664.0 882.0C663.0 879.6 655.8 874.0 650.0 872.0C644.2 870.0 635.1 872.0 630.0 870.0C624.9 868.0 622.4 864.4 620.0 860.0C617.6 855.6 617.0 849.1 616.0 844.0C615.0 838.9 610.6 833.4 614.0 830.0Z" fill="#b89790" stroke="#f3e8e4" stroke-width="1.49" stroke-opacity="0.92"/><path d="M629.1 841.3C631.5 838.8 639.8 837.2 644.9 837.0C650.1 836.7 655.2 838.9 659.3 839.8C663.5 840.8 666.0 840.3 669.4 842.7C672.8 845.2 675.6 850.8 679.5 854.2C683.4 857.7 689.5 859.9 692.4 862.9C695.4 865.8 696.3 868.3 696.8 871.5C697.3 874.7 694.6 876.7 695.3 881.6C696.1 886.5 700.1 896.2 701.1 900.3C702.1 904.5 707.0 905.1 701.1 906.1C695.2 907.1 672.6 909.0 666.5 906.1C660.4 903.1 666.3 893.0 665.1 888.8C663.9 884.6 659.3 883.3 659.3 881.6C659.3 879.9 665.8 880.4 665.1 878.7C664.4 877.0 659.2 873.0 655.0 871.5C650.8 870.0 644.3 871.5 640.6 870.1C636.9 868.6 635.1 866.1 633.4 862.9C631.7 859.7 631.3 855.0 630.5 851.4C629.8 847.7 626.6 843.7 629.1 841.3Z" fill="none" stroke="#f3e8e4" stroke-width="0.9" stroke-opacity="0.5"/><path d="M622.0 798.0C622.7 796.0 626.9 793.0 630.0 794.0C633.1 795.0 638.0 800.3 640.0 804.0C642.0 807.7 643.0 814.3 642.0 816.0C641.0 817.7 636.7 815.7 634.0 814.0C631.3 812.3 628.0 808.7 626.0 806.0C624.0 803.3 621.3 800.0 622.0 798.0Z" fill="#b89790" stroke="#f3e8e4" stroke-width="1.49" stroke-opacity="0.92"/><path d="M612.0 875.0C615.7 866.5 623.5 870.5 630.0 870.0C636.5 869.5 644.2 870.0 650.0 872.0C655.8 874.0 663.0 879.6 664.0 882.0C665.0 884.4 656.0 883.6 656.0 886.0C656.0 888.4 662.3 889.9 664.0 896.0C665.7 902.1 675.5 917.9 666.0 922.0C656.5 926.1 617.2 928.0 608.0 920.0C598.8 912.0 608.3 883.5 612.0 875.0Z" fill="#c4a2bd" stroke="#f3e8e4" stroke-width="1.49" stroke-opacity="0.92"/><path d="M618.9 881.3C621.5 875.2 627.2 878.1 631.8 877.7C636.5 877.4 642.0 877.7 646.2 879.2C650.4 880.6 655.6 884.7 656.3 886.4C657.0 888.1 650.5 887.5 650.5 889.3C650.5 891.0 655.1 892.1 656.3 896.5C657.5 900.9 664.6 912.2 657.7 915.2C650.9 918.1 622.6 919.5 616.0 913.7C609.4 908.0 616.2 887.5 618.9 881.3Z" fill="none" stroke="#f3e8e4" stroke-width="0.9" stroke-opacity="0.5"/><path d="M728.0 920.0C722.9 916.6 729.3 906.1 732.0 900.0C734.7 893.9 739.9 887.4 744.0 884.0C748.1 880.6 753.3 877.3 756.0 880.0C758.7 882.7 759.0 893.2 760.0 900.0C761.0 906.8 767.4 916.6 762.0 920.0C756.6 923.4 733.1 923.4 728.0 920.0Z" fill="#b89790" stroke="#f3e8e4" stroke-width="1.49" stroke-opacity="0.92"/><path d="M733.2 915.5C729.5 913.0 734.1 905.5 736.1 901.1C738.0 896.7 741.8 892.0 744.7 889.5C747.6 887.1 751.4 884.7 753.3 886.7C755.3 888.6 755.5 896.2 756.2 901.1C756.9 906.0 761.6 913.0 757.7 915.5C753.7 917.9 736.8 917.9 733.2 915.5Z" fill="none" stroke="#f3e8e4" stroke-width="0.9" stroke-opacity="0.5"/><path d="M764.0 920.0C757.5 915.2 763.3 897.8 766.0 892.0C768.7 886.2 774.9 886.3 780.0 886.0C785.1 885.7 791.6 886.3 796.0 890.0C800.4 893.7 804.6 902.9 806.0 908.0C807.4 913.1 811.1 918.0 804.0 920.0C796.9 922.0 770.5 924.8 764.0 920.0Z" fill="#b89790" stroke="#f3e8e4" stroke-width="1.49" stroke-opacity="0.92"/><path d="M769.6 915.8C764.9 912.4 769.1 899.8 771.0 895.7C773.0 891.5 777.4 891.6 781.1 891.3C784.8 891.1 789.4 891.5 792.6 894.2C795.8 896.9 798.8 903.5 799.8 907.2C800.8 910.9 803.5 914.3 798.4 915.8C793.2 917.3 774.2 919.2 769.6 915.8Z" fill="none" stroke="#f3e8e4" stroke-width="0.9" stroke-opacity="0.5"/><path d="M810.0 920.0C803.2 916.6 811.6 905.1 816.0 900.0C820.4 894.9 829.2 892.4 836.0 890.0C842.8 887.6 851.9 884.3 856.0 886.0C860.1 887.7 860.0 894.2 860.0 900.0C860.0 905.8 864.5 916.6 856.0 920.0C847.5 923.4 816.8 923.4 810.0 920.0Z" fill="#b89790" stroke="#f3e8e4" stroke-width="1.49" stroke-opacity="0.92"/><path d="M817.7 916.0C812.8 913.5 818.9 905.3 822.0 901.6C825.2 897.9 831.5 896.1 836.4 894.4C841.3 892.7 847.9 890.3 850.8 891.5C853.8 892.7 853.7 897.4 853.7 901.6C853.7 905.7 857.0 913.5 850.8 916.0C844.7 918.4 822.6 918.4 817.7 916.0Z" fill="none" stroke="#f3e8e4" stroke-width="0.9" stroke-opacity="0.5"/><path d="M876.0 920.0C871.2 916.6 873.0 905.8 874.0 900.0C875.0 894.2 878.3 889.1 882.0 886.0C885.7 882.9 892.3 880.3 896.0 882.0C899.7 883.7 903.0 889.5 904.0 896.0C905.0 902.5 906.8 915.9 902.0 920.0C897.2 924.1 880.8 923.4 876.0 920.0Z" fill="#b89790" stroke="#f3e8e4" stroke-width="1.49" stroke-opacity="0.92"/><path d="M879.7 915.3C876.3 912.8 877.6 905.0 878.3 900.9C879.0 896.7 881.4 893.0 884.1 890.8C886.8 888.6 891.5 886.7 894.1 887.9C896.8 889.1 899.2 893.3 899.9 898.0C900.6 902.6 901.9 912.3 898.5 915.3C895.0 918.2 883.2 917.7 879.7 915.3Z" fill="none" stroke="#f3e8e4" stroke-width="0.9" stroke-opacity="0.5"/><path d="M958.0 836.0C961.1 834.6 968.6 840.0 974.0 840.0C979.4 840.0 984.9 834.6 990.0 836.0C995.1 837.4 1001.3 841.2 1004.0 848.0C1006.7 854.8 1010.4 869.5 1006.0 876.0C1001.6 882.5 986.2 881.9 978.0 886.0C969.8 890.1 964.5 896.6 958.0 900.0C951.5 903.4 943.4 909.4 940.0 906.0C936.6 902.6 937.3 887.5 938.0 880.0C938.7 872.5 941.3 865.7 944.0 862.0C946.7 858.3 951.6 856.3 954.0 858.0C956.4 859.7 957.7 873.7 958.0 872.0C958.3 870.3 956.0 854.1 956.0 848.0C956.0 841.9 954.9 837.4 958.0 836.0Z" fill="#b89790" stroke="#f3e8e4" stroke-width="1.49" stroke-opacity="0.92"/><path d="M961.7 845.0C963.9 844.0 969.3 847.9 973.2 847.9C977.1 847.9 981.0 844.0 984.7 845.0C988.4 846.0 992.8 848.7 994.8 853.6C996.7 858.5 999.4 869.1 996.2 873.8C993.0 878.4 981.9 878.0 976.1 881.0C970.2 883.9 966.3 888.6 961.7 891.1C957.0 893.5 951.1 897.8 948.7 895.4C946.2 892.9 946.8 882.0 947.3 876.7C947.7 871.3 949.6 866.4 951.6 863.7C953.5 861.0 957.1 859.6 958.8 860.8C960.5 862.0 961.4 872.1 961.7 870.9C961.9 869.7 960.2 858.0 960.2 853.6C960.2 849.2 959.4 846.0 961.7 845.0Z" fill="none" stroke="#f3e8e4" stroke-width="0.9" stroke-opacity="0.5"/><path d="M1038.0 776.0C1040.0 771.2 1043.5 772.3 1050.0 772.0C1056.5 771.7 1069.5 771.3 1076.0 774.0C1082.5 776.7 1085.3 782.9 1088.0 788.0C1090.7 793.1 1089.6 799.2 1092.0 804.0C1094.4 808.8 1099.8 802.7 1102.0 816.0C1104.2 829.3 1107.0 873.2 1105.0 882.0C1103.0 890.8 1094.2 873.1 1090.0 868.0C1085.8 862.9 1084.8 857.4 1080.0 852.0C1075.2 846.6 1067.4 840.1 1062.0 836.0C1056.6 831.9 1051.4 830.7 1048.0 828.0C1044.6 825.3 1042.3 822.7 1042.0 820.0C1041.7 817.3 1046.7 815.4 1046.0 812.0C1045.3 808.6 1039.4 806.1 1038.0 800.0C1036.6 793.9 1036.0 780.8 1038.0 776.0Z" fill="#aab77f" stroke="#f3e8e4" stroke-width="1.49" stroke-opacity="0.92"/><path d="M1047.9 787.2C1049.4 783.8 1051.9 784.6 1056.5 784.3C1061.2 784.1 1070.6 783.8 1075.3 785.8C1079.9 787.7 1081.9 792.2 1083.9 795.9C1085.9 799.5 1085.1 804.0 1086.8 807.4C1088.5 810.8 1092.4 806.5 1094.0 816.0C1095.6 825.6 1097.6 857.2 1096.1 863.5C1094.7 869.9 1088.4 857.1 1085.3 853.5C1082.3 849.8 1081.6 845.9 1078.1 841.9C1074.7 838.0 1069.1 833.4 1065.2 830.4C1061.3 827.5 1057.5 826.6 1055.1 824.7C1052.7 822.7 1051.0 820.9 1050.8 818.9C1050.5 816.9 1054.2 815.6 1053.7 813.1C1053.2 810.7 1048.9 808.9 1047.9 804.5C1046.9 800.1 1046.4 790.7 1047.9 787.2Z" fill="none" stroke="#f3e8e4" stroke-width="0.9" stroke-opacity="0.5"/><rect x="595" y="130" width="520" height="800" filter="url(#hs)" opacity="0.16"/></g><path d="M637.0 135.0L712.0 137.0L711.0 200.0L709.0 248.0L709.4 251.4L713.4 252.4L714.4 255.4L716.0 258.0L718.8 259.8L719.3 263.2L720.0 266.5L723.3 268.0L723.6 271.5L725.8 273.7L728.0 276.0L729.2 278.8L730.5 281.6L732.9 283.9L731.4 287.9L733.1 290.5L735.0 293.0L733.0 295.7L733.6 299.2L733.5 302.5L731.0 305.0L731.2 308.6L730.0 312.0L731.7 314.9L735.4 314.7L737.6 316.8L739.7 319.1L743.3 319.1L745.0 322.0L747.4 324.5L751.0 324.8L752.7 328.3L756.0 329.2L759.8 329.3L762.0 332.0L764.4 334.2L766.4 336.6L766.0 340.8L769.4 342.3L771.2 344.9L772.4 347.9L775.0 350.0L777.3 352.2L778.3 355.3L781.6 356.8L781.7 360.6L783.1 363.5L786.9 364.5L787.9 367.7L790.0 370.0L792.7 372.1L792.5 375.7L794.1 378.5L796.4 380.8L795.8 384.7L798.9 386.6L801.2 388.8L802.0 392.0L805.3 392.1L808.3 393.2L810.4 396.7L814.0 395.9L816.9 397.3L820.0 398.0L823.1 397.2L826.1 397.9L828.9 399.5L832.1 398.1L835.0 400.0L838.0 400.0L838.1 403.0L837.1 406.0L836.3 408.9L838.6 412.2L836.7 415.0L836.0 418.0L835.4 421.1L832.6 423.2L830.8 425.7L832.0 429.6L830.0 432.0L829.6 435.0L831.2 438.2L828.8 441.0L827.4 443.9L828.7 447.0L828.0 450.0L827.9 453.3L830.2 456.2L829.0 459.6L830.1 462.7L831.1 465.9L828.5 469.4L830.5 472.4L831.3 475.6L830.9 478.9L832.0 482.0L830.9 485.4L828.7 488.4L828.0 492.0L826.0 495.0L824.2 497.9L822.3 500.7L819.8 503.1L818.0 506.0L818.1 509.0L817.7 512.1L819.6 514.9L818.0 518.2L818.9 521.1L820.0 524.0L822.6 526.1L825.7 527.5L828.7 529.0L829.6 533.4L833.3 534.0L836.0 536.0L838.9 534.2L839.3 530.0L842.9 528.9L845.4 526.7L847.2 523.8L850.0 522.0L852.5 519.8L854.3 516.9L857.6 515.6L858.1 511.4L861.4 510.1L864.0 508.0L866.3 510.2L867.1 513.6L869.2 516.0L873.2 516.8L873.8 520.4L876.5 522.3L879.0 524.3L879.3 528.1L882.0 530.0L882.9 533.1L882.5 536.6L885.8 539.0L886.6 542.2L885.9 545.7L888.6 548.3L887.5 552.0L888.2 555.1L890.0 558.0L891.0 561.0L893.0 563.5L895.9 565.5L895.0 569.5L896.9 572.0L898.8 574.6L898.1 578.5L901.2 580.4L903.1 582.9L904.0 586.0L905.7 588.8L906.2 591.8L904.4 595.4L906.8 598.0L907.1 601.1L908.0 604.0L911.3 604.0L914.2 605.3L916.9 607.3L920.5 606.6L922.8 609.6L926.0 610.0L927.7 612.7L927.9 616.1L930.2 618.6L933.2 620.7L932.1 624.7L934.2 627.2L935.6 630.1L935.5 633.7L938.0 636.0L940.3 638.3L941.6 641.3L945.5 642.3L946.3 645.8L947.0 649.3L950.4 650.7L951.3 654.1L954.0 656.0L953.6 652.5L956.2 650.1L956.5 646.8L958.0 644.0L961.2 645.0L964.4 644.3L967.6 643.9L970.8 645.4L974.0 642.5L977.2 642.9L980.4 644.6L983.6 643.1L986.8 644.6L990.0 644.0L991.3 640.5L994.8 638.5L994.9 634.2L998.0 632.0L1000.9 633.0L1004.1 632.4L1006.9 634.0L1009.8 635.3L1013.2 632.9L1016.1 634.1L1019.0 635.2L1022.2 633.6L1025.0 635.9L1027.8 637.3L1031.0 636.3L1034.0 637.0L1037.3 636.9L1040.2 634.1L1043.8 635.3L1046.9 634.0L1050.1 633.2L1053.8 635.0L1056.7 632.6L1060.0 632.0L1060.5 628.5L1057.8 625.0L1060.5 621.5L1060.0 618.0L1062.1 615.8L1065.9 615.6L1066.8 612.1L1069.0 610.0L1071.0 612.5L1074.2 613.9L1076.2 616.4L1076.9 620.3L1080.4 621.3L1081.8 624.4L1083.7 627.0L1088.1 627.2L1089.2 630.7L1091.4 633.0L1094.2 634.7L1095.2 638.3L1098.0 640.0L1100.0 700.0L1102.0 760.0L1108.0 917.0L986.0 922.0L850.0 923.5L760.0 922.5L609.0 918.5L611.0 860.0L613.0 810.0L615.0 760.0L616.0 710.0L623.0 696.0L628.0 676.0L626.3 672.8L622.2 672.2L620.8 668.7L617.4 667.4L614.9 665.0L613.0 662.0L610.6 659.8L609.2 656.7L607.3 653.9L603.2 653.3L602.0 650.0L602.3 646.6L601.9 643.2L605.5 640.3L604.1 636.7L604.6 633.3L605.0 630.0L605.7 626.4L608.7 624.3L610.7 621.5L611.9 618.3L615.9 616.8L615.9 612.7L618.0 610.0L620.3 607.7L620.3 603.7L624.1 602.6L626.0 600.0L627.7 597.0L631.5 595.5L631.7 591.4L633.3 588.3L636.0 586.0L636.1 582.7L638.4 580.3L641.1 578.1L640.1 574.4L642.3 572.0L643.4 569.1L644.0 566.0L645.2 562.8L646.3 559.6L646.9 556.2L650.4 553.8L650.0 550.0L651.6 547.0L653.6 544.2L653.1 539.9L657.2 538.3L658.4 535.1L660.0 532.0L662.9 530.1L662.8 526.4L664.2 523.5L667.1 521.6L667.3 518.0L670.0 516.0L669.7 512.5L666.9 510.2L667.2 506.5L664.9 503.9L662.1 501.6L662.0 498.0L658.7 496.9L656.0 494.7L654.0 491.2L649.7 491.9L647.3 489.2L644.0 488.0L641.0 486.0L641.5 482.0L639.0 479.7L637.6 476.8L636.0 474.0L634.5 471.2L633.4 468.2L633.4 464.9L632.0 462.0L630.8 458.7L630.1 455.2L627.5 452.5L627.7 448.6L625.0 446.0L624.2 442.8L625.5 439.6L623.5 436.4L625.5 433.2L625.0 430.0L625.4 426.8L627.0 424.0L629.0 380.0L631.0 330.0L632.0 270.0L634.0 200.0Z" fill="none" stroke="#5e5e62" stroke-width="3.3" stroke-linejoin="round"/><path d="M637.0 135.0L712.0 137.0L711.0 200.0L709.0 248.0L709.4 251.4L713.4 252.4L714.4 255.4L716.0 258.0L718.8 259.8L719.3 263.2L720.0 266.5L723.3 268.0L723.6 271.5L725.8 273.7L728.0 276.0L729.2 278.8L730.5 281.6L732.9 283.9L731.4 287.9L733.1 290.5L735.0 293.0L733.0 295.7L733.6 299.2L733.5 302.5L731.0 305.0L731.2 308.6L730.0 312.0L731.7 314.9L735.4 314.7L737.6 316.8L739.7 319.1L743.3 319.1L745.0 322.0L747.4 324.5L751.0 324.8L752.7 328.3L756.0 329.2L759.8 329.3L762.0 332.0L764.4 334.2L766.4 336.6L766.0 340.8L769.4 342.3L771.2 344.9L772.4 347.9L775.0 350.0L777.3 352.2L778.3 355.3L781.6 356.8L781.7 360.6L783.1 363.5L786.9 364.5L787.9 367.7L790.0 370.0L792.7 372.1L792.5 375.7L794.1 378.5L796.4 380.8L795.8 384.7L798.9 386.6L801.2 388.8L802.0 392.0L805.3 392.1L808.3 393.2L810.4 396.7L814.0 395.9L816.9 397.3L820.0 398.0L823.1 397.2L826.1 397.9L828.9 399.5L832.1 398.1L835.0 400.0L838.0 400.0L838.1 403.0L837.1 406.0L836.3 408.9L838.6 412.2L836.7 415.0L836.0 418.0L835.4 421.1L832.6 423.2L830.8 425.7L832.0 429.6L830.0 432.0L829.6 435.0L831.2 438.2L828.8 441.0L827.4 443.9L828.7 447.0L828.0 450.0L827.9 453.3L830.2 456.2L829.0 459.6L830.1 462.7L831.1 465.9L828.5 469.4L830.5 472.4L831.3 475.6L830.9 478.9L832.0 482.0L830.9 485.4L828.7 488.4L828.0 492.0L826.0 495.0L824.2 497.9L822.3 500.7L819.8 503.1L818.0 506.0L818.1 509.0L817.7 512.1L819.6 514.9L818.0 518.2L818.9 521.1L820.0 524.0L822.6 526.1L825.7 527.5L828.7 529.0L829.6 533.4L833.3 534.0L836.0 536.0L838.9 534.2L839.3 530.0L842.9 528.9L845.4 526.7L847.2 523.8L850.0 522.0L852.5 519.8L854.3 516.9L857.6 515.6L858.1 511.4L861.4 510.1L864.0 508.0L866.3 510.2L867.1 513.6L869.2 516.0L873.2 516.8L873.8 520.4L876.5 522.3L879.0 524.3L879.3 528.1L882.0 530.0L882.9 533.1L882.5 536.6L885.8 539.0L886.6 542.2L885.9 545.7L888.6 548.3L887.5 552.0L888.2 555.1L890.0 558.0L891.0 561.0L893.0 563.5L895.9 565.5L895.0 569.5L896.9 572.0L898.8 574.6L898.1 578.5L901.2 580.4L903.1 582.9L904.0 586.0L905.7 588.8L906.2 591.8L904.4 595.4L906.8 598.0L907.1 601.1L908.0 604.0L911.3 604.0L914.2 605.3L916.9 607.3L920.5 606.6L922.8 609.6L926.0 610.0L927.7 612.7L927.9 616.1L930.2 618.6L933.2 620.7L932.1 624.7L934.2 627.2L935.6 630.1L935.5 633.7L938.0 636.0L940.3 638.3L941.6 641.3L945.5 642.3L946.3 645.8L947.0 649.3L950.4 650.7L951.3 654.1L954.0 656.0L953.6 652.5L956.2 650.1L956.5 646.8L958.0 644.0L961.2 645.0L964.4 644.3L967.6 643.9L970.8 645.4L974.0 642.5L977.2 642.9L980.4 644.6L983.6 643.1L986.8 644.6L990.0 644.0L991.3 640.5L994.8 638.5L994.9 634.2L998.0 632.0L1000.9 633.0L1004.1 632.4L1006.9 634.0L1009.8 635.3L1013.2 632.9L1016.1 634.1L1019.0 635.2L1022.2 633.6L1025.0 635.9L1027.8 637.3L1031.0 636.3L1034.0 637.0L1037.3 636.9L1040.2 634.1L1043.8 635.3L1046.9 634.0L1050.1 633.2L1053.8 635.0L1056.7 632.6L1060.0 632.0L1060.5 628.5L1057.8 625.0L1060.5 621.5L1060.0 618.0L1062.1 615.8L1065.9 615.6L1066.8 612.1L1069.0 610.0L1071.0 612.5L1074.2 613.9L1076.2 616.4L1076.9 620.3L1080.4 621.3L1081.8 624.4L1083.7 627.0L1088.1 627.2L1089.2 630.7L1091.4 633.0L1094.2 634.7L1095.2 638.3L1098.0 640.0L1100.0 700.0L1102.0 760.0L1108.0 917.0L986.0 922.0L850.0 923.5L760.0 922.5L609.0 918.5L611.0 860.0L613.0 810.0L615.0 760.0L616.0 710.0L623.0 696.0L628.0 676.0L626.3 672.8L622.2 672.2L620.8 668.7L617.4 667.4L614.9 665.0L613.0 662.0L610.6 659.8L609.2 656.7L607.3 653.9L603.2 653.3L602.0 650.0L602.3 646.6L601.9 643.2L605.5 640.3L604.1 636.7L604.6 633.3L605.0 630.0L605.7 626.4L608.7 624.3L610.7 621.5L611.9 618.3L615.9 616.8L615.9 612.7L618.0 610.0L620.3 607.7L620.3 603.7L624.1 602.6L626.0 600.0L627.7 597.0L631.5 595.5L631.7 591.4L633.3 588.3L636.0 586.0L636.1 582.7L638.4 580.3L641.1 578.1L640.1 574.4L642.3 572.0L643.4 569.1L644.0 566.0L645.2 562.8L646.3 559.6L646.9 556.2L650.4 553.8L650.0 550.0L651.6 547.0L653.6 544.2L653.1 539.9L657.2 538.3L658.4 535.1L660.0 532.0L662.9 530.1L662.8 526.4L664.2 523.5L667.1 521.6L667.3 518.0L670.0 516.0L669.7 512.5L666.9 510.2L667.2 506.5L664.9 503.9L662.1 501.6L662.0 498.0L658.7 496.9L656.0 494.7L654.0 491.2L649.7 491.9L647.3 489.2L644.0 488.0L641.0 486.0L641.5 482.0L639.0 479.7L637.6 476.8L636.0 474.0L634.5 471.2L633.4 468.2L633.4 464.9L632.0 462.0L630.8 458.7L630.1 455.2L627.5 452.5L627.7 448.6L625.0 446.0L624.2 442.8L625.5 439.6L623.5 436.4L625.5 433.2L625.0 430.0L625.4 426.8L627.0 424.0L629.0 380.0L631.0 330.0L632.0 270.0L634.0 200.0Z" fill="none" stroke="#cdc9cc" stroke-width="1.1" stroke-dasharray="3.6 2" stroke-linejoin="round"/><g style="font-family:'DejaVu Sans','Liberation Sans',sans-serif" font-size="10.5" fill="#6a6478" text-anchor="middle" letter-spacing="-0.3" opacity="0.85"><text x="658" y="159.5">June</text><text x="658" y="171" font-style="italic">14</text><text x="691" y="159.5">May</text><text x="691" y="171" font-style="italic">15</text><text x="696" y="193.5">June</text><text x="696" y="205" font-style="italic">09</text><text x="676" y="231.5">May 18</text><text x="673" y="249.5">May</text><text x="673" y="261" font-style="italic">15</text><text x="701" y="262.5">June</text><text x="701" y="274" font-style="italic">09</text><text x="666" y="299.5">May</text><text x="666" y="311" font-style="italic">15</text><text x="712" y="340.5">June</text><text x="712" y="352" font-style="italic">19</text><text x="814" y="433.5">June</text><text x="814" y="445" font-style="italic">19</text><text x="664" y="466.5">April 15</text><text x="694" y="475.5">May</text><text x="670" y="491.5">May 18</text><text x="672" y="503.5">06</text><text x="710" y="559.5">June</text><text x="710" y="571" font-style="italic">19</text><text x="662" y="585.5">June</text><text x="662" y="597" font-style="italic">14</text><text x="755" y="603.5">June</text><text x="755" y="615" font-style="italic">24</text><text x="628" y="625.5">June</text><text x="628" y="637" font-style="italic">04</text><text x="868" y="633.5">May</text><text x="868" y="645" font-style="italic">30</text><text x="900" y="610.5">June</text><text x="900" y="622" font-style="italic">29</text><text x="822" y="682.5">June 29</text><text x="872" y="667.5">July</text><text x="872" y="679" font-style="italic">04</text><text x="843" y="700.5">July</text><text x="843" y="712" font-style="italic">04</text><text x="1060" y="643.5">June</text><text x="1060" y="655" font-style="italic">24</text><text x="952" y="726.5">June</text><text x="952" y="738" font-style="italic">04</text><text x="1074" y="814.5">June</text><text x="1074" y="826" font-style="italic">14</text><text x="973" y="865.5">May</text><text x="973" y="877" font-style="italic">30</text><text x="1007" y="897.5">May</text><text x="1007" y="909" font-style="italic">15</text><text x="680" y="809.5">May</text><text x="680" y="821" font-style="italic">06</text><text x="714" y="817.5">April</text><text x="714" y="829" font-style="italic">15</text><text x="624" y="817.5">May</text><text x="624" y="829" font-style="italic">15</text><text x="652" y="823.5">May</text><text x="652" y="835" font-style="italic">18</text><text x="666" y="869.5">May 30</text><text x="632" y="889.5">May</text><text x="632" y="901" font-style="italic">15</text><text x="783" y="893.5">May</text><text x="783" y="905" font-style="italic">18</text><text x="845" y="897.5">June</text><text x="845" y="909" font-style="italic">04</text><text x="890" y="893.5">May</text><text x="890" y="905" font-style="italic">18</text></g><g style="font-family:'Liberation Sans',sans-serif" font-size="9" fill="#5a5864" stroke="#efe6ee" stroke-width="1.6" paint-order="stroke" letter-spacing="0.1"><text x="609" y="428" textLength="39" lengthAdjust="spacing">Lewiston</text><text x="671" y="744" textLength="25" lengthAdjust="spacing">Boise</text><text x="997" y="757" textLength="47" lengthAdjust="spacing">Idaho Falls</text><text x="968" y="826" textLength="41" lengthAdjust="spacing">Pocatello</text><text x="802" y="863" textLength="43" lengthAdjust="spacing">Twin Falls</text></g><g style="font-family:'Liberation Sans','DejaVu Sans',sans-serif;font-weight:bold"><text x="765.5" y="201.0" font-size="58" fill="#cfb4dc" stroke="#cfb4dc" stroke-width="3" stroke-linejoin="round" textLength="356" lengthAdjust="spacingAndGlyphs">Average Date of</text><text x="764" y="199.5" font-size="58" fill="#d6bfe1" stroke="#d6bfe1" stroke-width="2.6" stroke-linejoin="round" textLength="356" lengthAdjust="spacingAndGlyphs">Average Date of</text><text x="765.5" y="272.5" font-size="92" fill="#bd9bcc" stroke="#bd9bcc" stroke-width="3" stroke-linejoin="round" textLength="380" lengthAdjust="spacingAndGlyphs">Lilac Blooms</text><text x="764" y="271" font-size="92" fill="#c7a6d4" stroke="#c7a6d4" stroke-width="2.6" stroke-linejoin="round" textLength="380" lengthAdjust="spacingAndGlyphs">Lilac Blooms</text><text x="765.5" y="321.5" font-size="56" fill="#cfb4dc" stroke="#cfb4dc" stroke-width="3" stroke-linejoin="round" textLength="281" lengthAdjust="spacingAndGlyphs">Across Idaho</text><text x="764" y="320" font-size="56" fill="#d6bfe1" stroke="#d6bfe1" stroke-width="2.6" stroke-linejoin="round" textLength="281" lengthAdjust="spacingAndGlyphs">Across Idaho</text></g><path d="M1239.0 179.0C1238.2 175.4 1229.8 181.0 1224.0 184.0C1218.2 187.0 1214.8 189.2 1210.0 194.0C1205.2 198.8 1203.0 202.4 1200.0 208.0C1197.0 213.6 1193.0 220.0 1195.0 222.0C1197.0 224.0 1203.4 222.0 1210.0 218.0C1216.6 214.0 1222.2 209.8 1228.0 202.0C1233.8 194.2 1239.8 182.6 1239.0 179.0Z" fill="#b9c99c"/><path d="M1198.0 220.0L1238.0 181.0" fill="none" stroke="#c6d596" stroke-width="1.3" stroke-linecap="round"/><path d="M1032.0 331.0C1028.0 326.0 1042.0 315.0 1050.0 306.0C1058.0 297.0 1062.4 294.4 1072.0 286.0C1081.6 277.6 1088.8 271.0 1098.0 264.0C1107.2 257.0 1108.8 254.2 1118.0 251.0C1127.2 247.8 1133.6 247.8 1144.0 248.0C1154.4 248.2 1163.6 248.4 1170.0 252.0C1176.4 255.6 1177.6 259.2 1176.0 266.0C1174.4 272.8 1168.8 278.0 1162.0 286.0C1155.2 294.0 1149.2 299.0 1142.0 306.0C1134.8 313.0 1133.2 316.4 1126.0 321.0C1118.8 325.6 1117.2 327.0 1106.0 329.0C1094.8 331.0 1084.8 330.6 1070.0 331.0C1055.2 331.4 1036.0 336.0 1032.0 331.0Z" fill="#9fb577"/><path d="M1036.0 329.0L1090.0 300.0L1140.0 266.0L1162.0 254.0" fill="none" stroke="#c6d596" stroke-width="1.3" stroke-linecap="round"/><path d="M1075.0 309.0L1082.0 284.0" fill="none" stroke="#c6d596" stroke-width="1.3" stroke-linecap="round"/><path d="M1100.0 293.0L1098.0 266.0" fill="none" stroke="#c6d596" stroke-width="1.3" stroke-linecap="round"/><path d="M1090.0 300.0L1118.0 318.0" fill="none" stroke="#c6d596" stroke-width="1.3" stroke-linecap="round"/><path d="M1118.0 282.0L1132.0 300.0" fill="none" stroke="#c6d596" stroke-width="1.3" stroke-linecap="round"/><path d="M1184.0 262.0C1186.6 258.0 1187.2 257.0 1196.0 256.0C1204.8 255.0 1218.0 253.4 1228.0 257.0C1238.0 260.6 1242.0 265.4 1246.0 274.0C1250.0 282.6 1249.2 289.2 1248.0 300.0C1246.8 310.8 1242.4 318.8 1240.0 328.0C1237.6 337.2 1239.6 343.2 1236.0 346.0C1232.4 348.8 1228.4 347.6 1222.0 342.0C1215.6 336.4 1210.4 327.2 1204.0 318.0C1197.6 308.8 1194.2 304.4 1190.0 296.0C1185.8 287.6 1184.2 282.8 1183.0 276.0C1181.8 269.2 1181.4 266.0 1184.0 262.0Z" fill="#9fb577"/><path d="M1190.0 266.0L1214.0 300.0L1234.0 340.0" fill="none" stroke="#c6d596" stroke-width="1.3" stroke-linecap="round"/><path d="M1206.0 288.0L1232.0 280.0" fill="none" stroke="#c6d596" stroke-width="1.3" stroke-linecap="round"/><path d="M1214.0 300.0L1242.0 304.0" fill="none" stroke="#c6d596" stroke-width="1.3" stroke-linecap="round"/><path d="M1200.0 280.0L1196.0 300.0" fill="none" stroke="#c6d596" stroke-width="1.3" stroke-linecap="round"/><path d="M1181.5 203L1182.5 236" stroke="#93b566" stroke-width="3" stroke-linecap="round"/><path d="M1198 214L1196 162" stroke="#dcc6e6" stroke-width="6.3" stroke-linecap="round"/><ellipse cx="1196" cy="162" rx="6.8" ry="9.0" fill="#dcc6e6" stroke="#b394cc" stroke-width="0.9" transform="rotate(-2 1196 162)"/><path d="M1200 214L1208 168" stroke="#d2b0d8" stroke-width="4.9" stroke-linecap="round"/><ellipse cx="1208" cy="168" rx="5.2" ry="7.0" fill="#d2b0d8" stroke="#b394cc" stroke-width="0.9" transform="rotate(10 1208 168)"/><path d="M1200 216L1213 188" stroke="#d2b0d8" stroke-width="4.2" stroke-linecap="round"/><ellipse cx="1213" cy="188" rx="4.5" ry="6.0" fill="#d2b0d8" stroke="#b394cc" stroke-width="0.9" transform="rotate(25 1213 188)"/><g transform="translate(1149.0 187.5) scale(1 1.0)" fill="#d7bfe3" stroke="#bfa2d3" stroke-width="1.0"><path transform="rotate(40)" d="M0 0C11.0 -3.6 14.1 -18.6 0 -30.0C-14.1 -18.6 -11.0 -3.6 0 0Z"/><path transform="rotate(130)" d="M0 0C11.0 -3.6 14.1 -18.6 0 -30.0C-14.1 -18.6 -11.0 -3.6 0 0Z"/><path transform="rotate(220)" d="M0 0C11.0 -3.6 14.1 -18.6 0 -30.0C-14.1 -18.6 -11.0 -3.6 0 0Z"/><path transform="rotate(310)" d="M0 0C11.0 -3.6 14.1 -18.6 0 -30.0C-14.1 -18.6 -11.0 -3.6 0 0Z"/><circle r="2.2" fill="#d4643c" stroke="none"/></g><g transform="translate(1178.0 194.0) scale(1 0.7)" fill="#dcc3e6" stroke="#bfa2d3" stroke-width="1.0"><path transform="rotate(10)" d="M0 0C5.6 -1.9 7.1 -9.7 0 -15.6C-7.1 -9.7 -5.6 -1.9 0 0Z"/><path transform="rotate(100)" d="M0 0C5.6 -1.9 7.1 -9.7 0 -15.6C-7.1 -9.7 -5.6 -1.9 0 0Z"/><path transform="rotate(190)" d="M0 0C5.6 -1.9 7.1 -9.7 0 -15.6C-7.1 -9.7 -5.6 -1.9 0 0Z"/><path transform="rotate(280)" d="M0 0C5.6 -1.9 7.1 -9.7 0 -15.6C-7.1 -9.7 -5.6 -1.9 0 0Z"/><circle r="1.2" fill="#d4643c" stroke="none"/></g><g transform="translate(1162.5 226.5) scale(1 1.0)" fill="#e1cfea" stroke="#b79ccc" stroke-width="1.0"><path transform="rotate(60)" d="M0 0C8.1 -2.7 10.4 -14.1 0 -22.8C-10.4 -14.1 -8.1 -2.7 0 0Z"/><path transform="rotate(150)" d="M0 0C8.1 -2.7 10.4 -14.1 0 -22.8C-10.4 -14.1 -8.1 -2.7 0 0Z"/><path transform="rotate(240)" d="M0 0C8.1 -2.7 10.4 -14.1 0 -22.8C-10.4 -14.1 -8.1 -2.7 0 0Z"/><path transform="rotate(330)" d="M0 0C8.1 -2.7 10.4 -14.1 0 -22.8C-10.4 -14.1 -8.1 -2.7 0 0Z"/><circle r="1.7" fill="#d4643c" stroke="none"/></g><g transform="translate(1220.5 227.0) scale(1 1.0)" fill="#dfc8e8" stroke="#b79ccc" stroke-width="1.0"><path transform="rotate(20)" d="M0 0C9.0 -3.0 11.5 -15.6 0 -25.2C-11.5 -15.6 -9.0 -3.0 0 0Z"/><path transform="rotate(110)" d="M0 0C9.0 -3.0 11.5 -15.6 0 -25.2C-11.5 -15.6 -9.0 -3.0 0 0Z"/><path transform="rotate(200)" d="M0 0C9.0 -3.0 11.5 -15.6 0 -25.2C-11.5 -15.6 -9.0 -3.0 0 0Z"/><path transform="rotate(290)" d="M0 0C9.0 -3.0 11.5 -15.6 0 -25.2C-11.5 -15.6 -9.0 -3.0 0 0Z"/><circle r="1.9" fill="#d4643c" stroke="none"/></g><g transform="translate(1192.0 248.5) scale(1 1.0)" fill="#cfa6c6" stroke="#b692bc" stroke-width="1.0"><path transform="rotate(15)" d="M0 0C11.6 -4.0 14.8 -20.8 0 -33.6C-14.8 -20.8 -11.6 -4.0 0 0Z"/><path transform="rotate(105)" d="M0 0C11.6 -4.0 14.8 -20.8 0 -33.6C-14.8 -20.8 -11.6 -4.0 0 0Z"/><path transform="rotate(195)" d="M0 0C11.6 -4.0 14.8 -20.8 0 -33.6C-14.8 -20.8 -11.6 -4.0 0 0Z"/><path transform="rotate(285)" d="M0 0C11.6 -4.0 14.8 -20.8 0 -33.6C-14.8 -20.8 -11.6 -4.0 0 0Z"/><circle r="2.5" fill="#d4643c" stroke="none"/></g><g transform="translate(1173.0 295.0) scale(1 1.0)" fill="#cdc4da" stroke="#a892c4" stroke-width="1.0"><path transform="rotate(-6)" d="M0 0C11.8 -4.8 15.0 -24.6 0 -39.6C-15.0 -24.6 -11.8 -4.8 0 0Z"/><path transform="rotate(84)" d="M0 0C11.8 -4.8 15.0 -24.6 0 -39.6C-15.0 -24.6 -11.8 -4.8 0 0Z"/><path transform="rotate(174)" d="M0 0C11.8 -4.8 15.0 -24.6 0 -39.6C-15.0 -24.6 -11.8 -4.8 0 0Z"/><path transform="rotate(264)" d="M0 0C11.8 -4.8 15.0 -24.6 0 -39.6C-15.0 -24.6 -11.8 -4.8 0 0Z"/><circle r="3.0" fill="#c79a7c" stroke="none"/></g><g transform="translate(1153.0 324.0) scale(1 1.0)" fill="#ebe1f2" stroke="#a892c4" stroke-width="1.0"><path transform="rotate(32)" d="M0 0C15.7 -5.8 20.0 -29.8 0 -48.0C-20.0 -29.8 -15.7 -5.8 0 0Z"/><path transform="rotate(122)" d="M0 0C15.7 -5.8 20.0 -29.8 0 -48.0C-20.0 -29.8 -15.7 -5.8 0 0Z"/><path transform="rotate(212)" d="M0 0C15.7 -5.8 20.0 -29.8 0 -48.0C-20.0 -29.8 -15.7 -5.8 0 0Z"/><path transform="rotate(302)" d="M0 0C15.7 -5.8 20.0 -29.8 0 -48.0C-20.0 -29.8 -15.7 -5.8 0 0Z"/><circle r="3.6" fill="#e5a0a0" stroke="none"/></g><path d="M931 481C938 505 952 545 970 572C980 588 988 600 993 611" fill="none" stroke="#93b166" stroke-width="5.5" stroke-linecap="round"/><path d="M962 545C964 536 968 532 975 529" fill="none" stroke="#93b166" stroke-width="4" stroke-linecap="round"/><path d="M901.0 501.0C898.2 504.0 902.4 517.8 904.0 528.0C905.6 538.2 905.4 543.2 909.0 552.0C912.6 560.8 916.2 566.0 922.0 572.0C927.8 578.0 932.4 581.6 938.0 582.0C943.6 582.4 945.2 575.0 950.0 574.0C954.8 573.0 956.8 579.2 962.0 577.0C967.2 574.8 974.4 569.2 976.0 563.0C977.6 556.8 975.8 553.0 970.0 546.0C964.2 539.0 957.4 534.6 947.0 528.0C936.6 521.4 927.2 518.4 918.0 513.0C908.8 507.6 903.8 498.0 901.0 501.0Z" fill="#9fb577"/><path d="M904.0 505.0L930.0 545.0L962.0 572.0" fill="none" stroke="#c6d596" stroke-width="1.3" stroke-linecap="round"/><path d="M912.0 540.0L926.0 540.0" fill="none" stroke="#c6d596" stroke-width="1.3" stroke-linecap="round"/><path d="M920.0 560.0L938.0 556.0" fill="none" stroke="#c6d596" stroke-width="1.3" stroke-linecap="round"/><path d="M930.0 545.0L932.0 524.0" fill="none" stroke="#c6d596" stroke-width="1.3" stroke-linecap="round"/><path d="M962.0 502.0C962.8 496.0 964.8 491.2 968.0 486.0C971.2 480.8 972.0 478.8 978.0 476.0C984.0 473.2 991.6 470.8 998.0 472.0C1004.4 473.2 1005.6 476.8 1010.0 482.0C1014.4 487.2 1017.2 492.0 1020.0 498.0C1022.8 504.0 1024.8 506.0 1024.0 512.0C1023.2 518.0 1020.0 523.0 1016.0 528.0C1012.0 533.0 1010.4 534.8 1004.0 537.0C997.6 539.2 990.8 540.8 984.0 539.0C977.2 537.2 974.0 532.6 970.0 528.0C966.0 523.4 965.6 521.2 964.0 516.0C962.4 510.8 961.2 508.0 962.0 502.0Z" fill="#92ad6b"/><path d="M972.0 532.0L988.0 508.0L1003.0 485.0" fill="none" stroke="#c6d596" stroke-width="1.3" stroke-linecap="round"/><path d="M993.0 551.0C995.8 545.4 1002.2 541.0 1010.0 536.0C1017.8 531.0 1021.2 527.6 1032.0 526.0C1042.8 524.4 1049.4 525.6 1064.0 528.0C1078.6 530.4 1101.4 531.6 1105.0 538.0C1108.6 544.4 1091.4 551.2 1082.0 560.0C1072.6 568.8 1068.4 574.6 1058.0 582.0C1047.6 589.4 1041.2 592.0 1030.0 597.0C1018.8 602.0 1008.6 607.6 1002.0 607.0C995.4 606.4 996.6 599.8 997.0 594.0C997.4 588.2 1004.2 584.0 1004.0 578.0C1003.8 572.0 998.2 569.4 996.0 564.0C993.8 558.6 990.2 556.6 993.0 551.0Z" fill="#9fb577"/><path d="M1000.0 600.0L1024.0 570.0L1060.0 548.0L1100.0 539.0" fill="none" stroke="#c6d596" stroke-width="1.3" stroke-linecap="round"/><path d="M1024.0 570.0L1028.0 545.0" fill="none" stroke="#c6d596" stroke-width="1.3" stroke-linecap="round"/><path d="M1042.0 558.0L1050.0 534.0" fill="none" stroke="#c6d596" stroke-width="1.3" stroke-linecap="round"/><path d="M1024.0 570.0L1046.0 586.0" fill="none" stroke="#c6d596" stroke-width="1.3" stroke-linecap="round"/><path d="M1046.0 556.0L1070.0 566.0" fill="none" stroke="#c6d596" stroke-width="1.3" stroke-linecap="round"/><path d="M1010.0 586.0L1004.0 566.0" fill="none" stroke="#c6d596" stroke-width="1.3" stroke-linecap="round"/><path d="M890 470L850 452" stroke="#c9a6d8" stroke-width="5.6" stroke-linecap="round"/><ellipse cx="850" cy="452" rx="6.0" ry="8.0" fill="#c9a6d8" stroke="#b090c8" stroke-width="0.9" transform="rotate(-66 850 452)"/><path d="M884 444L862 432" stroke="#c9a6d8" stroke-width="4.2" stroke-linecap="round"/><ellipse cx="862" cy="432" rx="4.5" ry="6.0" fill="#c9a6d8" stroke="#b090c8" stroke-width="0.9" transform="rotate(-61 862 432)"/><path d="M900 492L874 486" stroke="#c9a6d8" stroke-width="6.3" stroke-linecap="round"/><ellipse cx="874" cy="486" rx="6.8" ry="9.0" fill="#c9a6d8" stroke="#b090c8" stroke-width="0.9" transform="rotate(-77 874 486)"/><g transform="translate(873.0 425.0) scale(1 1.0)" fill="#c9a6d8" stroke="#b090c8" stroke-width="1.0"><path transform="rotate(70)" d="M0 0C8.4 -2.5 10.7 -13.1 0 -21.1C-10.7 -13.1 -8.4 -2.5 0 0Z"/><path transform="rotate(160)" d="M0 0C8.4 -2.5 10.7 -13.1 0 -21.1C-10.7 -13.1 -8.4 -2.5 0 0Z"/><path transform="rotate(250)" d="M0 0C8.4 -2.5 10.7 -13.1 0 -21.1C-10.7 -13.1 -8.4 -2.5 0 0Z"/><path transform="rotate(340)" d="M0 0C8.4 -2.5 10.7 -13.1 0 -21.1C-10.7 -13.1 -8.4 -2.5 0 0Z"/><circle r="1.6" fill="#d4643c" stroke="none"/></g><g transform="translate(891.0 381.5) scale(1 1.0)" fill="#c8a4d6" stroke="#b090c8" stroke-width="1.0"><path transform="rotate(30)" d="M0 0C8.7 -2.5 11.1 -13.1 0 -21.1C-11.1 -13.1 -8.7 -2.5 0 0Z"/><path transform="rotate(120)" d="M0 0C8.7 -2.5 11.1 -13.1 0 -21.1C-11.1 -13.1 -8.7 -2.5 0 0Z"/><path transform="rotate(210)" d="M0 0C8.7 -2.5 11.1 -13.1 0 -21.1C-11.1 -13.1 -8.7 -2.5 0 0Z"/><path transform="rotate(300)" d="M0 0C8.7 -2.5 11.1 -13.1 0 -21.1C-11.1 -13.1 -8.7 -2.5 0 0Z"/><circle r="1.6" fill="#d4643c" stroke="none"/></g><circle cx="867" cy="450" r="7" fill="#b8c47e"/><circle cx="1024" cy="452" r="5" fill="#b8c47e"/><g transform="translate(929.0 351.0) scale(1 1.0)" fill="#e0cdea" stroke="#b090c8" stroke-width="1.0"><path transform="rotate(95)" d="M0 0C7.8 -2.4 10.0 -12.2 0 -19.7C-10.0 -12.2 -7.8 -2.4 0 0Z"/><path transform="rotate(215)" d="M0 0C7.8 -2.4 10.0 -12.2 0 -19.7C-10.0 -12.2 -7.8 -2.4 0 0Z"/><path transform="rotate(335)" d="M0 0C7.8 -2.4 10.0 -12.2 0 -19.7C-10.0 -12.2 -7.8 -2.4 0 0Z"/><circle r="1.5" fill="#d4643c" stroke="none"/></g><path d="M925 358L926 386" stroke="#93b566" stroke-width="2.5" stroke-linecap="round"/><g transform="translate(942.0 381.0) scale(1 1.0)" fill="#e3d2ec" stroke="#b090c8" stroke-width="1.0"><path transform="rotate(50)" d="M0 0C8.1 -2.5 10.4 -13.1 0 -21.1C-10.4 -13.1 -8.1 -2.5 0 0Z"/><path transform="rotate(140)" d="M0 0C8.1 -2.5 10.4 -13.1 0 -21.1C-10.4 -13.1 -8.1 -2.5 0 0Z"/><path transform="rotate(230)" d="M0 0C8.1 -2.5 10.4 -13.1 0 -21.1C-10.4 -13.1 -8.1 -2.5 0 0Z"/><path transform="rotate(320)" d="M0 0C8.1 -2.5 10.4 -13.1 0 -21.1C-10.4 -13.1 -8.1 -2.5 0 0Z"/><circle r="1.6" fill="#d4643c" stroke="none"/></g><g transform="translate(933.0 419.0) scale(1 1.0)" fill="#c6a0d4" stroke="#b090c8" stroke-width="1.0"><path transform="rotate(80)" d="M0 0C9.8 -3.2 12.5 -16.5 0 -26.7C-12.5 -16.5 -9.8 -3.2 0 0Z"/><path transform="rotate(170)" d="M0 0C9.8 -3.2 12.5 -16.5 0 -26.7C-12.5 -16.5 -9.8 -3.2 0 0Z"/><path transform="rotate(260)" d="M0 0C9.8 -3.2 12.5 -16.5 0 -26.7C-12.5 -16.5 -9.8 -3.2 0 0Z"/><path transform="rotate(350)" d="M0 0C9.8 -3.2 12.5 -16.5 0 -26.7C-12.5 -16.5 -9.8 -3.2 0 0Z"/><circle r="2.0" fill="#d4643c" stroke="none"/></g><g transform="translate(915.5 402.5) scale(1 1.0)" fill="#e9ddf1" stroke="#b090c8" stroke-width="1.0"><path transform="rotate(20)" d="M0 0C10.8 -3.5 13.8 -18.3 0 -29.5C-13.8 -18.3 -10.8 -3.5 0 0Z"/><path transform="rotate(110)" d="M0 0C10.8 -3.5 13.8 -18.3 0 -29.5C-13.8 -18.3 -10.8 -3.5 0 0Z"/><path transform="rotate(200)" d="M0 0C10.8 -3.5 13.8 -18.3 0 -29.5C-13.8 -18.3 -10.8 -3.5 0 0Z"/><path transform="rotate(290)" d="M0 0C10.8 -3.5 13.8 -18.3 0 -29.5C-13.8 -18.3 -10.8 -3.5 0 0Z"/><circle r="2.2" fill="#d4643c" stroke="none"/></g><g transform="translate(902.0 444.0) scale(1 1.0)" fill="#dccbe8" stroke="#b090c8" stroke-width="1.0"><path transform="rotate(55)" d="M0 0C10.8 -3.5 13.8 -18.3 0 -29.5C-13.8 -18.3 -10.8 -3.5 0 0Z"/><path transform="rotate(145)" d="M0 0C10.8 -3.5 13.8 -18.3 0 -29.5C-13.8 -18.3 -10.8 -3.5 0 0Z"/><path transform="rotate(235)" d="M0 0C10.8 -3.5 13.8 -18.3 0 -29.5C-13.8 -18.3 -10.8 -3.5 0 0Z"/><path transform="rotate(325)" d="M0 0C10.8 -3.5 13.8 -18.3 0 -29.5C-13.8 -18.3 -10.8 -3.5 0 0Z"/><circle r="2.2" fill="#d4643c" stroke="none"/></g><g transform="translate(968.0 437.0) scale(1 0.75)" fill="#eadff2" stroke="#b090c8" stroke-width="1.0"><path transform="rotate(75)" d="M0 0C9.2 -3.0 11.8 -15.7 0 -25.3C-11.8 -15.7 -9.2 -3.0 0 0Z"/><path transform="rotate(165)" d="M0 0C9.2 -3.0 11.8 -15.7 0 -25.3C-11.8 -15.7 -9.2 -3.0 0 0Z"/><path transform="rotate(255)" d="M0 0C9.2 -3.0 11.8 -15.7 0 -25.3C-11.8 -15.7 -9.2 -3.0 0 0Z"/><path transform="rotate(345)" d="M0 0C9.2 -3.0 11.8 -15.7 0 -25.3C-11.8 -15.7 -9.2 -3.0 0 0Z"/><circle r="1.9" fill="#d4643c" stroke="none"/></g><g transform="translate(960.0 467.0) scale(1 1.0)" fill="#d7c2e4" stroke="#b090c8" stroke-width="1.0"><path transform="rotate(40)" d="M0 0C10.3 -3.4 13.1 -17.4 0 -28.1C-13.1 -17.4 -10.3 -3.4 0 0Z"/><path transform="rotate(130)" d="M0 0C10.3 -3.4 13.1 -17.4 0 -28.1C-13.1 -17.4 -10.3 -3.4 0 0Z"/><path transform="rotate(220)" d="M0 0C10.3 -3.4 13.1 -17.4 0 -28.1C-13.1 -17.4 -10.3 -3.4 0 0Z"/><path transform="rotate(310)" d="M0 0C10.3 -3.4 13.1 -17.4 0 -28.1C-13.1 -17.4 -10.3 -3.4 0 0Z"/><circle r="2.1" fill="#d4643c" stroke="none"/></g><g transform="translate(938.0 449.0) scale(1 1.0)" fill="#ece2f3" stroke="#b090c8" stroke-width="1.0"><path transform="rotate(12)" d="M0 0C12.1 -4.2 15.5 -21.8 0 -35.1C-15.5 -21.8 -12.1 -4.2 0 0Z"/><path transform="rotate(102)" d="M0 0C12.1 -4.2 15.5 -21.8 0 -35.1C-15.5 -21.8 -12.1 -4.2 0 0Z"/><path transform="rotate(192)" d="M0 0C12.1 -4.2 15.5 -21.8 0 -35.1C-15.5 -21.8 -12.1 -4.2 0 0Z"/><path transform="rotate(282)" d="M0 0C12.1 -4.2 15.5 -21.8 0 -35.1C-15.5 -21.8 -12.1 -4.2 0 0Z"/><circle r="2.6" fill="#d4643c" stroke="none"/></g><g transform="translate(910.0 480.0) scale(1 1.0)" fill="#e9ddf1" stroke="#b090c8" stroke-width="1.0"><path transform="rotate(62)" d="M0 0C10.8 -3.5 13.8 -18.3 0 -29.5C-13.8 -18.3 -10.8 -3.5 0 0Z"/><path transform="rotate(152)" d="M0 0C10.8 -3.5 13.8 -18.3 0 -29.5C-13.8 -18.3 -10.8 -3.5 0 0Z"/><path transform="rotate(242)" d="M0 0C10.8 -3.5 13.8 -18.3 0 -29.5C-13.8 -18.3 -10.8 -3.5 0 0Z"/><path transform="rotate(332)" d="M0 0C10.8 -3.5 13.8 -18.3 0 -29.5C-13.8 -18.3 -10.8 -3.5 0 0Z"/><circle r="2.2" fill="#d4643c" stroke="none"/></g><path d="M975 428L973 403" stroke="#e0cfea" stroke-width="5.6" stroke-linecap="round"/><ellipse cx="973" cy="403" rx="6.0" ry="8.0" fill="#e0cfea" stroke="#b090c8" stroke-width="0.9" transform="rotate(-5 973 403)"/><path d="M985 432L994 414" stroke="#ddc9e8" stroke-width="5.6" stroke-linecap="round"/><ellipse cx="994" cy="414" rx="6.0" ry="8.0" fill="#ddc9e8" stroke="#b090c8" stroke-width="0.9" transform="rotate(27 994 414)"/><path d="M990 455L998 440" stroke="#cfa8d4" stroke-width="4.9" stroke-linecap="round"/><ellipse cx="998" cy="440" rx="5.2" ry="7.0" fill="#cfa8d4" stroke="#b090c8" stroke-width="0.9" transform="rotate(28 998 440)"/><path d="M1008 448L1014 434" stroke="#d4a9d0" stroke-width="5.6" stroke-linecap="round"/><ellipse cx="1014" cy="434" rx="6.0" ry="8.0" fill="#d4a9d0" stroke="#b090c8" stroke-width="0.9" transform="rotate(23 1014 434)"/><path d="M1070 400L1083 352" stroke="#d4a4cc" stroke-width="4.9" stroke-linecap="round"/><ellipse cx="1083" cy="352" rx="5.2" ry="7.0" fill="#d4a4cc" stroke="#b692c4" stroke-width="0.9" transform="rotate(15 1083 352)"/><path d="M1070 402L1071 374" stroke="#dcbfe2" stroke-width="4.2" stroke-linecap="round"/><ellipse cx="1071" cy="374" rx="4.5" ry="6.0" fill="#dcbfe2" stroke="#b692c4" stroke-width="0.9" transform="rotate(2 1071 374)"/><path d="M1074 404L1086 372" stroke="#d2a0c8" stroke-width="4.9" stroke-linecap="round"/><ellipse cx="1086" cy="372" rx="5.2" ry="7.0" fill="#d2a0c8" stroke="#b692c4" stroke-width="0.9" transform="rotate(21 1086 372)"/><path d="M1058 398L1057 420" stroke="#93b566" stroke-width="2.5" stroke-linecap="round"/><path d="M1090 470L1120 481" stroke="#d4a8d0" stroke-width="5.6" stroke-linecap="round"/><ellipse cx="1120" cy="481" rx="6.0" ry="8.0" fill="#d4a8d0" stroke="#b692c4" stroke-width="0.9" transform="rotate(110 1120 481)"/><path d="M1090 462L1104 452" stroke="#d4a8d0" stroke-width="4.9" stroke-linecap="round"/><ellipse cx="1104" cy="452" rx="5.2" ry="7.0" fill="#d4a8d0" stroke="#b692c4" stroke-width="0.9" transform="rotate(54 1104 452)"/><path d="M1090 488L1100 503" stroke="#d8b4dc" stroke-width="5.6" stroke-linecap="round"/><ellipse cx="1100" cy="503" rx="6.0" ry="8.0" fill="#d8b4dc" stroke="#b692c4" stroke-width="0.9" transform="rotate(146 1100 503)"/><circle cx="1106" cy="476" r="6" fill="#b8c47e"/><g transform="translate(1055.0 392.5) scale(1 0.7)" fill="#dbb9dc" stroke="#b692c4" stroke-width="1.0"><path transform="rotate(80)" d="M0 0C6.7 -2.0 8.6 -10.4 0 -16.8C-8.6 -10.4 -6.7 -2.0 0 0Z"/><path transform="rotate(170)" d="M0 0C6.7 -2.0 8.6 -10.4 0 -16.8C-8.6 -10.4 -6.7 -2.0 0 0Z"/><path transform="rotate(260)" d="M0 0C6.7 -2.0 8.6 -10.4 0 -16.8C-8.6 -10.4 -6.7 -2.0 0 0Z"/><path transform="rotate(350)" d="M0 0C6.7 -2.0 8.6 -10.4 0 -16.8C-8.6 -10.4 -6.7 -2.0 0 0Z"/><circle r="1.3" fill="#d4643c" stroke="none"/></g><g transform="translate(1042.0 418.5) scale(1 1.0)" fill="#dcc0e4" stroke="#b692c4" stroke-width="1.0"><path transform="rotate(60)" d="M0 0C8.1 -2.5 10.4 -13.1 0 -21.1C-10.4 -13.1 -8.1 -2.5 0 0Z"/><path transform="rotate(150)" d="M0 0C8.1 -2.5 10.4 -13.1 0 -21.1C-10.4 -13.1 -8.1 -2.5 0 0Z"/><path transform="rotate(240)" d="M0 0C8.1 -2.5 10.4 -13.1 0 -21.1C-10.4 -13.1 -8.1 -2.5 0 0Z"/><path transform="rotate(330)" d="M0 0C8.1 -2.5 10.4 -13.1 0 -21.1C-10.4 -13.1 -8.1 -2.5 0 0Z"/><circle r="1.6" fill="#d4643c" stroke="none"/></g><g transform="translate(1087.0 420.5) scale(1 1.0)" fill="#dcc0e4" stroke="#b692c4" stroke-width="1.0"><path transform="rotate(35)" d="M0 0C8.1 -2.5 10.4 -13.1 0 -21.1C-10.4 -13.1 -8.1 -2.5 0 0Z"/><path transform="rotate(125)" d="M0 0C8.1 -2.5 10.4 -13.1 0 -21.1C-10.4 -13.1 -8.1 -2.5 0 0Z"/><path transform="rotate(215)" d="M0 0C8.1 -2.5 10.4 -13.1 0 -21.1C-10.4 -13.1 -8.1 -2.5 0 0Z"/><path transform="rotate(305)" d="M0 0C8.1 -2.5 10.4 -13.1 0 -21.1C-10.4 -13.1 -8.1 -2.5 0 0Z"/><circle r="1.6" fill="#d4643c" stroke="none"/></g><g transform="translate(1018.0 462.0) scale(1 0.7)" fill="#d9b9dc" stroke="#b692c4" stroke-width="1.0"><path transform="rotate(80)" d="M0 0C9.0 -2.7 11.5 -13.9 0 -22.5C-11.5 -13.9 -9.0 -2.7 0 0Z"/><path transform="rotate(170)" d="M0 0C9.0 -2.7 11.5 -13.9 0 -22.5C-11.5 -13.9 -9.0 -2.7 0 0Z"/><path transform="rotate(260)" d="M0 0C9.0 -2.7 11.5 -13.9 0 -22.5C-11.5 -13.9 -9.0 -2.7 0 0Z"/><path transform="rotate(350)" d="M0 0C9.0 -2.7 11.5 -13.9 0 -22.5C-11.5 -13.9 -9.0 -2.7 0 0Z"/><circle r="1.7" fill="#d4643c" stroke="none"/></g><g transform="translate(1049.0 449.0) scale(1 1.0)" fill="#e0c8e6" stroke="#b692c4" stroke-width="1.0"><path transform="rotate(20)" d="M0 0C7.6 -2.4 9.7 -12.2 0 -19.7C-9.7 -12.2 -7.6 -2.4 0 0Z"/><path transform="rotate(110)" d="M0 0C7.6 -2.4 9.7 -12.2 0 -19.7C-9.7 -12.2 -7.6 -2.4 0 0Z"/><path transform="rotate(200)" d="M0 0C7.6 -2.4 9.7 -12.2 0 -19.7C-9.7 -12.2 -7.6 -2.4 0 0Z"/><path transform="rotate(290)" d="M0 0C7.6 -2.4 9.7 -12.2 0 -19.7C-9.7 -12.2 -7.6 -2.4 0 0Z"/><circle r="1.5" fill="#d4643c" stroke="none"/></g><g transform="translate(1064.5 437.0) scale(1 1.0)" fill="#d9b3d5" stroke="#b692c4" stroke-width="1.0"><path transform="rotate(10)" d="M0 0C11.0 -3.5 14.0 -18.3 0 -29.5C-14.0 -18.3 -11.0 -3.5 0 0Z"/><path transform="rotate(100)" d="M0 0C11.0 -3.5 14.0 -18.3 0 -29.5C-14.0 -18.3 -11.0 -3.5 0 0Z"/><path transform="rotate(190)" d="M0 0C11.0 -3.5 14.0 -18.3 0 -29.5C-14.0 -18.3 -11.0 -3.5 0 0Z"/><path transform="rotate(280)" d="M0 0C11.0 -3.5 14.0 -18.3 0 -29.5C-14.0 -18.3 -11.0 -3.5 0 0Z"/><circle r="2.2" fill="#d4643c" stroke="none"/></g><g transform="translate(1075.5 470.0) scale(1 1.0)" fill="#d9bfe3" stroke="#b692c4" stroke-width="1.0"><path transform="rotate(48)" d="M0 0C10.5 -3.4 13.4 -17.4 0 -28.1C-13.4 -17.4 -10.5 -3.4 0 0Z"/><path transform="rotate(138)" d="M0 0C10.5 -3.4 13.4 -17.4 0 -28.1C-13.4 -17.4 -10.5 -3.4 0 0Z"/><path transform="rotate(228)" d="M0 0C10.5 -3.4 13.4 -17.4 0 -28.1C-13.4 -17.4 -10.5 -3.4 0 0Z"/><path transform="rotate(318)" d="M0 0C10.5 -3.4 13.4 -17.4 0 -28.1C-13.4 -17.4 -10.5 -3.4 0 0Z"/><circle r="2.1" fill="#d4643c" stroke="none"/></g><g transform="translate(1024.0 487.0) scale(1 1.0)" fill="#d3a9ca" stroke="#b692c4" stroke-width="1.0"><path transform="rotate(75)" d="M0 0C9.4 -3.0 12.0 -15.7 0 -25.3C-12.0 -15.7 -9.4 -3.0 0 0Z"/><path transform="rotate(165)" d="M0 0C9.4 -3.0 12.0 -15.7 0 -25.3C-12.0 -15.7 -9.4 -3.0 0 0Z"/><path transform="rotate(255)" d="M0 0C9.4 -3.0 12.0 -15.7 0 -25.3C-12.0 -15.7 -9.4 -3.0 0 0Z"/><path transform="rotate(345)" d="M0 0C9.4 -3.0 12.0 -15.7 0 -25.3C-12.0 -15.7 -9.4 -3.0 0 0Z"/><circle r="1.9" fill="#d4643c" stroke="none"/></g><g transform="translate(1043.5 474.0) scale(1 1.0)" fill="#d9b3d5" stroke="#b692c4" stroke-width="1.0"><path transform="rotate(18)" d="M0 0C11.5 -3.7 14.7 -19.2 0 -30.9C-14.7 -19.2 -11.5 -3.7 0 0Z"/><path transform="rotate(108)" d="M0 0C11.5 -3.7 14.7 -19.2 0 -30.9C-14.7 -19.2 -11.5 -3.7 0 0Z"/><path transform="rotate(198)" d="M0 0C11.5 -3.7 14.7 -19.2 0 -30.9C-14.7 -19.2 -11.5 -3.7 0 0Z"/><path transform="rotate(288)" d="M0 0C11.5 -3.7 14.7 -19.2 0 -30.9C-14.7 -19.2 -11.5 -3.7 0 0Z"/><circle r="2.3" fill="#d4643c" stroke="none"/></g><g transform="translate(1067.5 498.0) scale(1 1.0)" fill="#ddc6e6" stroke="#b692c4" stroke-width="1.0"><path transform="rotate(58)" d="M0 0C9.4 -3.0 12.0 -15.7 0 -25.3C-12.0 -15.7 -9.4 -3.0 0 0Z"/><path transform="rotate(148)" d="M0 0C9.4 -3.0 12.0 -15.7 0 -25.3C-12.0 -15.7 -9.4 -3.0 0 0Z"/><path transform="rotate(238)" d="M0 0C9.4 -3.0 12.0 -15.7 0 -25.3C-12.0 -15.7 -9.4 -3.0 0 0Z"/><path transform="rotate(328)" d="M0 0C9.4 -3.0 12.0 -15.7 0 -25.3C-12.0 -15.7 -9.4 -3.0 0 0Z"/><circle r="1.9" fill="#d4643c" stroke="none"/></g><path d="M1187.0 366.0C1190.6 364.4 1197.4 374.0 1204.0 380.0C1210.6 386.0 1212.8 388.4 1220.0 396.0C1227.2 403.6 1235.2 409.6 1240.0 418.0C1244.8 426.4 1247.2 431.2 1244.0 438.0C1240.8 444.8 1233.0 446.8 1224.0 452.0C1215.0 457.2 1205.2 464.0 1199.0 464.0C1192.8 464.0 1193.4 456.8 1193.0 452.0C1192.6 447.2 1198.0 448.4 1197.0 440.0C1196.0 431.6 1190.2 420.4 1188.0 410.0C1185.8 399.6 1186.2 396.8 1186.0 388.0C1185.8 379.2 1183.4 367.6 1187.0 366.0Z" fill="#9fb577"/><path d="M1190.0 372.0L1210.0 410.0L1222.0 446.0" fill="none" stroke="#c6d596" stroke-width="1.3" stroke-linecap="round"/><path d="M1196.0 394.0L1210.0 398.0" fill="none" stroke="#c6d596" stroke-width="1.3" stroke-linecap="round"/><path d="M1204.0 418.0L1226.0 416.0" fill="none" stroke="#c6d596" stroke-width="1.3" stroke-linecap="round"/><path d="M1196.0 450.0L1212.0 446.0" fill="none" stroke="#c6d596" stroke-width="1.3" stroke-linecap="round"/><g transform="translate(1222.5 462.5) scale(1 1.0)" fill="#d0c6dc" stroke="#a892c4" stroke-width="1.0"><path transform="rotate(-42)" d="M0 0C10.6 -3.9 13.5 -20.1 0 -32.4C-13.5 -20.1 -10.6 -3.9 0 0Z"/><path transform="rotate(48)" d="M0 0C10.6 -3.9 13.5 -20.1 0 -32.4C-13.5 -20.1 -10.6 -3.9 0 0Z"/><path transform="rotate(138)" d="M0 0C10.6 -3.9 13.5 -20.1 0 -32.4C-13.5 -20.1 -10.6 -3.9 0 0Z"/><path transform="rotate(228)" d="M0 0C10.6 -3.9 13.5 -20.1 0 -32.4C-13.5 -20.1 -10.6 -3.9 0 0Z"/><circle r="2.4" fill="#c79a7c" stroke="none"/></g><g transform="translate(1222.0 493.5) scale(1 1.0)" fill="#ebe1f2" stroke="#a892c4" stroke-width="1.0"><path transform="rotate(40)" d="M0 0C13.3 -4.9 17.0 -25.3 0 -40.8C-17.0 -25.3 -13.3 -4.9 0 0Z"/><path transform="rotate(130)" d="M0 0C13.3 -4.9 17.0 -25.3 0 -40.8C-17.0 -25.3 -13.3 -4.9 0 0Z"/><path transform="rotate(220)" d="M0 0C13.3 -4.9 17.0 -25.3 0 -40.8C-17.0 -25.3 -13.3 -4.9 0 0Z"/><path transform="rotate(310)" d="M0 0C13.3 -4.9 17.0 -25.3 0 -40.8C-17.0 -25.3 -13.3 -4.9 0 0Z"/><circle r="3.1" fill="#e5a0a0" stroke="none"/></g><path d="M1198 522C1192 530 1190 538 1188 546M1198 524L1206 533" fill="none" stroke="#93b166" stroke-width="3" stroke-linecap="round"/><path d="M1204.0 542.0C1204.0 537.4 1206.4 531.8 1212.0 528.0C1217.6 524.2 1225.2 522.0 1232.0 523.0C1238.8 524.0 1241.0 527.0 1246.0 533.0C1251.0 539.0 1259.8 548.6 1257.0 553.0C1254.2 557.4 1241.0 555.4 1232.0 555.0C1223.0 554.6 1217.6 553.6 1212.0 551.0C1206.4 548.4 1204.0 546.6 1204.0 542.0Z" fill="#9fb577"/><path d="M1208.0 541.0L1232.0 540.0L1254.0 552.0" fill="none" stroke="#c6d596" stroke-width="1.3" stroke-linecap="round"/><g transform="translate(1171.5 568.5) scale(1 1.0)" fill="#d6b9e1" stroke="#c09cd0" stroke-width="1.0"><path transform="rotate(35)" d="M0 0C12.8 -4.3 16.4 -22.3 0 -36.0C-16.4 -22.3 -12.8 -4.3 0 0Z"/><path transform="rotate(125)" d="M0 0C12.8 -4.3 16.4 -22.3 0 -36.0C-16.4 -22.3 -12.8 -4.3 0 0Z"/><path transform="rotate(215)" d="M0 0C12.8 -4.3 16.4 -22.3 0 -36.0C-16.4 -22.3 -12.8 -4.3 0 0Z"/><path transform="rotate(305)" d="M0 0C12.8 -4.3 16.4 -22.3 0 -36.0C-16.4 -22.3 -12.8 -4.3 0 0Z"/><circle r="2.7" fill="#d08050" stroke="none"/></g><g fill="none" stroke="#c9a6d6" stroke-linecap="round" stroke-linejoin="round"><path d="M1157.5 452V380" stroke-width="1.8"/><path d="M1150.5 389L1157.5 379.5L1164.5 389" stroke-width="1.6"/><path d="M1141 495V441.5L1174 495V441.5" stroke-width="1.1" stroke="#d3bcdf"/></g><g style="font-family:'DejaVu Sans','Liberation Sans',sans-serif" font-size="11.6" fill="#6e6a7c"><rect x="1147.3" y="621.2" width="29.5" height="15" fill="#dccbe1" stroke="#f7f0f8" stroke-width="1.6"/><text x="1184.5" y="633.1" letter-spacing="-0.4">April <tspan font-style="italic" letter-spacing="0.3">15</tspan></text><rect x="1147.3" y="642.5" width="29.5" height="15" fill="#d1b9d9" stroke="#f7f0f8" stroke-width="1.6"/><text x="1184.5" y="654.4" letter-spacing="-0.4">April <tspan font-style="italic" letter-spacing="0.3">18</tspan></text><rect x="1147.3" y="663.8" width="29.5" height="15" fill="#c2a2ca" stroke="#f7f0f8" stroke-width="1.6"/><text x="1184.5" y="675.7" letter-spacing="-0.4">April <tspan font-style="italic" letter-spacing="0.3">30</tspan></text><rect x="1147.3" y="685.1" width="29.5" height="15" fill="#bf99c1" stroke="#f7f0f8" stroke-width="1.6"/><text x="1184.5" y="697.0" letter-spacing="-0.4">May <tspan font-style="italic" letter-spacing="0.3">06</tspan></text><rect x="1147.3" y="706.4" width="29.5" height="15" fill="#bd92b2" stroke="#f7f0f8" stroke-width="1.6"/><text x="1184.5" y="718.3" letter-spacing="-0.4">May <tspan font-style="italic" letter-spacing="0.3">15</tspan></text><rect x="1147.3" y="727.7" width="29.5" height="15" fill="#ba8a9e" stroke="#f7f0f8" stroke-width="1.6"/><text x="1184.5" y="739.6" letter-spacing="-0.4">May <tspan font-style="italic" letter-spacing="0.3">18</tspan></text><rect x="1147.3" y="749.1" width="29.5" height="15" fill="#b78d8d" stroke="#f7f0f8" stroke-width="1.6"/><text x="1184.5" y="761.0" letter-spacing="-0.4">May <tspan font-style="italic" letter-spacing="0.3">30</tspan></text><rect x="1147.3" y="770.4" width="29.5" height="15" fill="#b99d8d" stroke="#f7f0f8" stroke-width="1.6"/><text x="1184.5" y="782.3" letter-spacing="-0.4">June <tspan font-style="italic" letter-spacing="0.3">04</tspan></text><rect x="1147.3" y="791.7" width="29.5" height="15" fill="#b5a587" stroke="#f7f0f8" stroke-width="1.6"/><text x="1184.5" y="803.6" letter-spacing="-0.4">June <tspan font-style="italic" letter-spacing="0.3">09</tspan></text><rect x="1147.3" y="813.0" width="29.5" height="15" fill="#b4b486" stroke="#f7f0f8" stroke-width="1.6"/><text x="1184.5" y="824.9" letter-spacing="-0.4">June <tspan font-style="italic" letter-spacing="0.3">14</tspan></text><rect x="1147.3" y="834.3" width="29.5" height="15" fill="#a1b17f" stroke="#f7f0f8" stroke-width="1.6"/><text x="1184.5" y="846.2" letter-spacing="-0.4">June <tspan font-style="italic" letter-spacing="0.3">19</tspan></text><rect x="1147.3" y="855.6" width="29.5" height="15" fill="#98a574" stroke="#f7f0f8" stroke-width="1.6"/><text x="1184.5" y="867.5" letter-spacing="-0.4">June <tspan font-style="italic" letter-spacing="0.3">24</tspan></text><rect x="1147.3" y="876.9" width="29.5" height="15" fill="#8d9b6f" stroke="#f7f0f8" stroke-width="1.6"/><text x="1184.5" y="888.8" letter-spacing="-0.4">June <tspan font-style="italic" letter-spacing="0.3">29</tspan></text><rect x="1147.3" y="898.2" width="29.5" height="15" fill="#858d69" stroke="#f7f0f8" stroke-width="1.6"/><text x="1184.5" y="910.1" letter-spacing="-0.4">July <tspan font-style="italic" letter-spacing="0.3">04</tspan></text></g></svg></div>
<div class="a" style="left:760px;top:72px;width:1.3px;height:910px;background:#5fe6ea;"></div>
<div class="a" style="left:470px;top:56px;width:1114px;height:16.5px;background:#3b3b3b;"></div>
<div class="a" style="left:470px;top:56px;width:14.5px;height:928px;background:#3b3b3b;"></div>
<div class="a" style="left:470px;top:56px;width:14.5px;height:16.5px;background:#3b3b3b;"></div>
<svg style="left:470px;top:56px" width="15" height="17" viewBox="0 0 15 17"><path d="M4.5 1 L4.5 14 M0.5 5 L14 5" stroke="#8c8c8c" stroke-width="1" stroke-dasharray="2 1"/></svg>
<svg style="left:470px;top:56px" width="1114" height="17" viewBox="0 0 1114 17"><path d="M14.4 0 V16.5 M25.7 13 V16.5 M37.1 13 V16.5 M48.4 13 V16.5 M59.7 13 V16.5 M71.0 0 V16.5 M82.4 13 V16.5 M93.7 13 V16.5 M105.0 13 V16.5 M116.4 13 V16.5 M127.7 0 V16.5 M139.0 13 V16.5 M150.4 13 V16.5 M161.7 13 V16.5 M173.0 13 V16.5 M184.3 0 V16.5 M195.7 13 V16.5 M207.0 13 V16.5 M218.3 13 V16.5 M229.7 13 V16.5 M241.0 0 V16.5 M252.3 13 V16.5 M263.7 13 V16.5 M275.0 13 V16.5 M286.3 13 V16.5 M297.6 0 V16.5 M309.0 13 V16.5 M320.3 13 V16.5 M331.6 13 V16.5 M343.0 13 V16.5 M354.3 0 V16.5 M365.6 13 V16.5 M377.0 13 V16.5 M388.3 13 V16.5 M399.6 13 V16.5 M411.0 0 V16.5 M422.3 13 V16.5 M433.6 13 V16.5 M444.9 13 V16.5 M456.3 13 V16.5 M467.6 0 V16.5 M478.9 13 V16.5 M490.3 13 V16.5 M501.6 13 V16.5 M512.9 13 V16.5 M524.2 0 V16.5 M535.6 13 V16.5 M546.9 13 V16.5 M558.2 13 V16.5 M569.6 13 V16.5 M580.9 0 V16.5 M592.2 13 V16.5 M603.6 13 V16.5 M614.9 13 V16.5 M626.2 13 V16.5 M637.5 0 V16.5 M648.9 13 V16.5 M660.2 13 V16.5 M671.5 13 V16.5 M682.9 13 V16.5 M694.2 0 V16.5 M705.5 13 V16.5 M716.9 13 V16.5 M728.2 13 V16.5 M739.5 13 V16.5 M750.8 0 V16.5 M762.2 13 V16.5 M773.5 13 V16.5 M784.8 13 V16.5 M796.2 13 V16.5 M807.5 0 V16.5 M818.8 13 V16.5 M830.2 13 V16.5 M841.5 13 V16.5 M852.8 13 V16.5 M864.2 0 V16.5 M875.5 13 V16.5 M886.8 13 V16.5 M898.1 13 V16.5 M909.5 13 V16.5 M920.8 0 V16.5 M932.1 13 V16.5 M943.5 13 V16.5 M954.8 13 V16.5 M966.1 13 V16.5 M977.4 0 V16.5 M988.8 13 V16.5 M1000.1 13 V16.5 M1011.4 13 V16.5 M1022.8 13 V16.5 M1034.1 0 V16.5 M1045.4 13 V16.5 M1056.8 13 V16.5 M1068.1 13 V16.5 M1079.4 13 V16.5 M1090.8 0 V16.5 M1102.1 13 V16.5" stroke="#777" stroke-width="1"/><g font-family="Liberation Sans, sans-serif" font-size="9.3" fill="#c8c8c8" letter-spacing="-0.2"><text x="16.9" y="10.6">450</text><text x="73.5" y="10.6">500</text><text x="130.2" y="10.6">550</text><text x="186.8" y="10.6">600</text><text x="243.5" y="10.6">650</text><text x="300.1" y="10.6">700</text><text x="356.8" y="10.6">750</text><text x="413.5" y="10.6">800</text><text x="470.1" y="10.6">850</text><text x="526.8" y="10.6">900</text><text x="583.4" y="10.6">950</text><text x="640.0" y="10.6">1000</text><text x="696.7" y="10.6">1050</text><text x="753.3" y="10.6">1100</text><text x="810.0" y="10.6">1150</text><text x="866.7" y="10.6">1200</text><text x="923.3" y="10.6">1250</text><text x="979.9" y="10.6">1300</text><text x="1036.6" y="10.6">1350</text><text x="1093.2" y="10.6">1400</text></g></svg>
<svg style="left:470px;top:56px" width="15" height="928" viewBox="0 0 15 928"><path d="M0 51.0 H14.5 M11 39.7 H14.5 M11 28.3 H14.5 M11 17.0 H14.5 M0 107.7 H14.5 M11 96.3 H14.5 M11 85.0 H14.5 M11 73.7 H14.5 M11 62.3 H14.5 M0 164.3 H14.5 M11 153.0 H14.5 M11 141.6 H14.5 M11 130.3 H14.5 M11 119.0 H14.5 M0 220.9 H14.5 M11 209.6 H14.5 M11 198.3 H14.5 M11 187.0 H14.5 M11 175.6 H14.5 M0 277.6 H14.5 M11 266.3 H14.5 M11 254.9 H14.5 M11 243.6 H14.5 M11 232.3 H14.5 M0 334.2 H14.5 M11 322.9 H14.5 M11 311.6 H14.5 M11 300.3 H14.5 M11 288.9 H14.5 M0 390.9 H14.5 M11 379.6 H14.5 M11 368.2 H14.5 M11 356.9 H14.5 M11 345.6 H14.5 M0 447.6 H14.5 M11 436.2 H14.5 M11 424.9 H14.5 M11 413.6 H14.5 M11 402.2 H14.5 M0 504.2 H14.5 M11 492.9 H14.5 M11 481.5 H14.5 M11 470.2 H14.5 M11 458.9 H14.5 M0 560.8 H14.5 M11 549.5 H14.5 M11 538.2 H14.5 M11 526.9 H14.5 M11 515.5 H14.5 M0 617.5 H14.5 M11 606.2 H14.5 M11 594.8 H14.5 M11 583.5 H14.5 M11 572.2 H14.5 M0 674.1 H14.5 M11 662.8 H14.5 M11 651.5 H14.5 M11 640.2 H14.5 M11 628.8 H14.5 M0 730.8 H14.5 M11 719.5 H14.5 M11 708.1 H14.5 M11 696.8 H14.5 M11 685.5 H14.5 M0 787.4 H14.5 M11 776.1 H14.5 M11 764.8 H14.5 M11 753.5 H14.5 M11 742.1 H14.5 M0 844.1 H14.5 M11 832.8 H14.5 M11 821.4 H14.5 M11 810.1 H14.5 M11 798.8 H14.5 M0 900.8 H14.5 M11 889.4 H14.5 M11 878.1 H14.5 M11 866.8 H14.5 M11 855.4 H14.5 M11 923.4 H14.5 M11 912.1 H14.5" stroke="#777" stroke-width="1"/><g font-family="Liberation Sans, sans-serif" font-size="9.3" fill="#c8c8c8"><text x="1.2" y="47.8">0</text><text x="1.2" y="104.5">0</text><text x="1.2" y="92.9">5</text><text x="1.2" y="161.1">0</text><text x="1.2" y="149.5">0</text><text x="1.2" y="137.9">1</text><text x="1.2" y="217.8">0</text><text x="1.2" y="206.2">5</text><text x="1.2" y="194.6">1</text><text x="1.2" y="274.4">0</text><text x="1.2" y="262.8">0</text><text x="1.2" y="251.2">2</text><text x="1.2" y="331.1">0</text><text x="1.2" y="319.4">5</text><text x="1.2" y="307.9">2</text><text x="1.2" y="387.7">0</text><text x="1.2" y="376.1">0</text><text x="1.2" y="364.5">3</text><text x="1.2" y="444.4">0</text><text x="1.2" y="432.8">5</text><text x="1.2" y="421.2">3</text><text x="1.2" y="501.0">0</text><text x="1.2" y="489.4">0</text><text x="1.2" y="477.8">4</text><text x="1.2" y="557.6">0</text><text x="1.2" y="546.0">5</text><text x="1.2" y="534.4">4</text><text x="1.2" y="614.3">0</text><text x="1.2" y="602.7">0</text><text x="1.2" y="591.1">5</text><text x="1.2" y="670.9">0</text><text x="1.2" y="659.3">5</text><text x="1.2" y="647.7">5</text><text x="1.2" y="727.6">0</text><text x="1.2" y="716.0">0</text><text x="1.2" y="704.4">6</text><text x="1.2" y="784.2">0</text><text x="1.2" y="772.6">5</text><text x="1.2" y="761.0">6</text><text x="1.2" y="840.9">0</text><text x="1.2" y="829.3">0</text><text x="1.2" y="817.7">7</text><text x="1.2" y="897.5">0</text><text x="1.2" y="885.9">5</text><text x="1.2" y="874.3">7</text></g></svg>
<div class="a" style="left:1584px;top:56px;width:16px;height:928px;background:#4b4b4b;"></div>
<svg style="left:1588.0px;top:63.25px" width="7" height="3.5" viewBox="0 0 7 3.5"><path d="M0.5 3 L3.5 0.5 L6.5 3" fill="none" stroke="#9a9a9a" stroke-width="1.3" stroke-linecap="round" stroke-linejoin="round"/></svg>
<div class="a" style="left:1586px;top:506px;width:12.5px;height:26px;border-radius:6px;background:#626262"></div>
<svg style="left:1588.0px;top:973.25px" width="7" height="3.5" viewBox="0 0 7 3.5"><path d="M0.5 0.5 L3.5 3.0 L6.5 0.5" fill="none" stroke="#9a9a9a" stroke-width="1.3" stroke-linecap="round" stroke-linejoin="round"/></svg>
<div class="a" style="left:470px;top:983px;width:1130px;height:16px;background:#4b4b4b;"></div>
<div class="a" style="left:1584px;top:983px;width:16px;height:16px;background:#595959;"></div>
<div class="a" style="left:472.5px;top:985.5px;width:47px;height:13.5px;background:#3f3f3f;border-radius:2px"></div>
<div class="t" style="left:476px;top:987.6px;font-size:9.8px;color:#ececec;letter-spacing:-0.206px;">90.19%</div>
<div class="a" style="left:521px;top:985.5px;width:16px;height:13.5px;background:#484848;border-radius:2px"></div>
<svg style="left:525.5px;top:990.5px" width="7" height="4" viewBox="0 0 7 4"><path d="M0.5 0.5 L3.5 3.5 L6.5 0.5" fill="none" stroke="#e0e0e0" stroke-width="1.6" stroke-linecap="round" stroke-linejoin="round"/></svg>
<svg style="left:546px;top:988px" width="9" height="9" viewBox="0 0 9 9"><path d="M1 0.5 V8.5" stroke="#6d6d6d" stroke-width="1.4"/><path d="M8 0.5 L3 4.5 L8 8.5 Z" fill="#6d6d6d"/></svg>
<svg style="left:563px;top:988px" width="6" height="9" viewBox="0 0 6 9"><path d="M5.5 0.5 L0.5 4.5 L5.5 8.5 Z" fill="#6d6d6d"/></svg>
<div class="a" style="left:578px;top:985.5px;width:38px;height:13.5px;background:#3f3f3f;border-radius:2px"></div>
<div class="t" style="left:582px;top:987.6px;font-size:9.8px;color:#ececec;font-weight:bold;">1</div>
<div class="a" style="left:617px;top:985.5px;width:14px;height:13.5px;background:#484848;border-radius:2px"></div>
<svg style="left:620.5px;top:990.5px" width="7" height="4" viewBox="0 0 7 4"><path d="M0.5 0.5 L3.5 3.5 L6.5 0.5" fill="none" stroke="#e0e0e0" stroke-width="1.6" stroke-linecap="round" stroke-linejoin="round"/></svg>
<svg style="left:641px;top:988px" width="6" height="9" viewBox="0 0 6 9"><path d="M0.5 0.5 L5.5 4.5 L0.5 8.5 Z" fill="#6d6d6d"/></svg>
<svg style="left:656px;top:988px" width="9" height="9" viewBox="0 0 9 9"><path d="M8 0.5 V8.5" stroke="#6d6d6d" stroke-width="1.4"/><path d="M1 0.5 L6 4.5 L1 8.5 Z" fill="#6d6d6d"/></svg>
<div class="a" style="left:676px;top:986px;width:1px;height:12px;background:#434343;"></div>
<div class="t" style="left:749px;top:987.6px;font-size:9.8px;color:#d6d6d6;letter-spacing:-0.146px;">Selection</div>
<svg style="left:870px;top:988px" width="6" height="9" viewBox="0 0 6 9"><path d="M0.5 0.5 L5.5 4.5 L0.5 8.5 Z" fill="#e0e0e0"/></svg>
<svg style="left:886px;top:988.5px" width="5" height="8" viewBox="0 0 5 8"><path d="M4.3 0.6 L0.8 4 L4.3 7.4" fill="none" stroke="#a8a8a8" stroke-width="1.3"/></svg>
<div class="a" style="left:1223px;top:986.5px;width:25px;height:10px;border-radius:5px;background:#626262"></div>
<svg style="left:1574px;top:988.5px" width="5" height="8" viewBox="0 0 5 8"><path d="M0.7 0.6 L4.2 4 L0.7 7.4" fill="none" stroke="#a8a8a8" stroke-width="1.3"/></svg>
<div class="a" style="left:0px;top:40px;width:37px;height:959px;background:#535353;"></div>
<div class="a" style="left:37px;top:40px;width:3px;height:959px;background:#3e3e3e;"></div>
<div class="a" style="left:10px;top:44px;width:18px;height:3px;background:#484848;"></div>
<svg style="left:8px;top:60px" width="22" height="20" viewBox="0 0 22 20"><path d="M6 2 L6 17 L10 13.2 L17 12 Z" fill="none" stroke="#d2d2d2" stroke-width="1.4" stroke-linejoin="round"/></svg>
<svg style="left:8px;top:83px" width="22" height="20" viewBox="0 0 22 20"><path d="M6 1.5 L6 17.5 L10.5 13.5 L17.5 12.5 Z" fill="#d2d2d2"/></svg>
<svg style="left:27px;top:100px" width="3" height="3" viewBox="0 0 3 3"><path d="M3 0 L3 3 L0 3 Z" fill="#d2d2d2"/></svg>
<svg style="left:8px;top:105.6px" width="22" height="20" viewBox="0 0 22 20"><path d="M4 17 L6 10 L12 4.5 L16.5 9 L11 15 Z" fill="#d2d2d2"/><path d="M13 3.2 L15 1.2 L19.5 5.7 L17.5 7.7 Z" fill="#d2d2d2"/><circle cx="9.5" cy="11.5" r="1.3" fill="#535353"/><path d="M4.5 16.5 L9 12" stroke="#535353" stroke-width="1"/></svg>
<svg style="left:27px;top:122.6px" width="3" height="3" viewBox="0 0 3 3"><path d="M3 0 L3 3 L0 3 Z" fill="#d2d2d2"/></svg>
<svg style="left:8px;top:128px" width="22" height="20" viewBox="0 0 22 20"><path d="M8 17 L9.5 11 L14 6.5 L18 10.5 L13.5 15.5 Z" fill="#d2d2d2"/><path d="M15 5.3 L16.8 3.5 L20.5 7.2 L18.7 9 Z" fill="#d2d2d2"/><path d="M2 9 C1 14 3 18 7 17.5" fill="none" stroke="#d2d2d2" stroke-width="1.5"/><path d="M2 9 C3 6 6 6 6 9 C6 11 4 11 4 9.6" fill="none" stroke="#d2d2d2" stroke-width="1.2"/></svg>
<svg style="left:8px;top:151px" width="22" height="20" viewBox="0 0 22 20"><rect x="3.7" y="3.7" width="14.6" height="12.6" fill="#6e6e6e" stroke="#d2d2d2" stroke-width="1.4"/></svg>
<svg style="left:27px;top:168px" width="3" height="3" viewBox="0 0 3 3"><path d="M3 0 L3 3 L0 3 Z" fill="#d2d2d2"/></svg>
<svg style="left:8px;top:173.7px" width="22" height="20" viewBox="0 0 22 20"><path d="M17.5 2 L19 3.5 L11 13 L8.8 10.8 Z" fill="#d2d2d2"/><path d="M8 11.8 L10.2 14 C9.5 17 6 18 3 17.2 C5.5 16 5 13 8 11.8 Z" fill="#d2d2d2"/></svg>
<svg style="left:27px;top:190.7px" width="3" height="3" viewBox="0 0 3 3"><path d="M3 0 L3 3 L0 3 Z" fill="#d2d2d2"/></svg>
<div class="t" style="left:11.5px;top:196.5px;font-size:21px;font-weight:bold;font-family:'Liberation Serif',serif;color:#d2d2d2">T</div>
<svg style="left:27px;top:213.7px" width="3" height="3" viewBox="0 0 3 3"><path d="M3 0 L3 3 L0 3 Z" fill="#d2d2d2"/></svg>
<svg style="left:8px;top:219px" width="22" height="20" viewBox="0 0 22 20"><path d="M5 5.5 A7 7 0 1 1 4.6 13.5" fill="none" stroke="#d2d2d2" stroke-width="1.6"/><path d="M3.4 3 L3.8 8.4 L9 6.5 Z" fill="#d2d2d2"/><path d="M5 15 A7 7 0 0 0 11 17.8" fill="none" stroke="#8a8a8a" stroke-width="1.2" stroke-dasharray="1.5 1.5"/></svg>
<svg style="left:27px;top:236px" width="3" height="3" viewBox="0 0 3 3"><path d="M3 0 L3 3 L0 3 Z" fill="#d2d2d2"/></svg>
<svg style="left:8px;top:241.5px" width="22" height="20" viewBox="0 0 22 20"><path d="M12.5 2.5 L19 9 L11.5 16.5 L5 10 Z" fill="#d2d2d2"/><path d="M5 10 L11.5 16.5 L9.5 18.2 L3.2 12 Z" fill="#f2f2f2"/><path d="M6.5 11.3 L10.3 15.2" stroke="#535353" stroke-width="1.2"/></svg>
<svg style="left:27px;top:258.5px" width="3" height="3" viewBox="0 0 3 3"><path d="M3 0 L3 3 L0 3 Z" fill="#d2d2d2"/></svg>
<svg style="left:8px;top:264px" width="22" height="20" viewBox="0 0 22 20"><circle cx="7.5" cy="8.5" r="5" fill="none" stroke="#d2d2d2" stroke-width="1.3"/><circle cx="11" cy="6" r="4.2" fill="none" stroke="#d2d2d2" stroke-width="1.3"/><path d="M11 9 L11 19 L14 16.4 L19 16 Z" fill="#d2d2d2"/></svg>
<svg style="left:11px;top:289px" width="17" height="17" viewBox="0 0 17 17"><defs><linearGradient id="tg" x1="0" y1="0" x2="1" y2="0.3"><stop offset="0" stop-color="#e8e8e8"/><stop offset="1" stop-color="#2c2c2c"/></linearGradient></defs><rect x="0.7" y="0.7" width="15.6" height="15.6" fill="url(#tg)" stroke="#d2d2d2" stroke-width="1.4"/></svg>
<svg style="left:27px;top:304.7px" width="3" height="3" viewBox="0 0 3 3"><path d="M3 0 L3 3 L0 3 Z" fill="#d2d2d2"/></svg>
<svg style="left:8px;top:311px" width="22" height="20" viewBox="0 0 22 20"><path d="M14.5 2.2 C16 0.8 18.2 1.2 19 2.6 C19.8 4 19.3 5.4 18 6.5 L15.8 8.5 L12.6 5.3 Z" fill="#d2d2d2"/><path d="M12 6.5 L14.6 9.1 L7 16.7 L4.5 17.6 L3.4 16.4 L4.4 14 Z" fill="none" stroke="#d2d2d2" stroke-width="1.4"/></svg>
<svg style="left:8px;top:333.4px" width="22" height="20" viewBox="0 0 22 20"><path d="M3 16 C5 13 5 9 8 8 C11 7 12 10 10 11.5 C8 13 6.5 11 8 10" fill="none" stroke="#d2d2d2" stroke-width="1.5"/><path d="M8 16 C11 15 13 11 16 10 C18 9.5 19 11 19 11" fill="none" stroke="#d2d2d2" stroke-width="1.5"/><path d="M2.5 17 L19 17" stroke="#d2d2d2" stroke-width="1.3"/><circle cx="13.5" cy="4.5" r="2" fill="#d2d2d2"/><circle cx="6" cy="4.2" r="1.5" fill="#d2d2d2"/></svg>
<svg style="left:8px;top:356px" width="22" height="20" viewBox="0 0 22 20"><rect x="2.5" y="2.5" width="8" height="8" fill="#d2d2d2"/><circle cx="11" cy="10.5" r="4.3" fill="none" stroke="#d2d2d2" stroke-width="1.3"/><circle cx="15.5" cy="13.5" r="3.6" fill="#535353" stroke="#d2d2d2" stroke-width="1.3"/></svg>
<svg style="left:8px;top:379.6px" width="22" height="20" viewBox="0 0 22 20"><path d="M6 1 L6 18 M1 5.5 L12 5.5" stroke="#d2d2d2" stroke-width="1.2"/><path d="M7.5 7 L14.5 7 L18 10.5 L18 17 L7.5 17 Z" fill="#707070" stroke="#d2d2d2" stroke-width="1.3"/></svg>
<svg style="left:8px;top:402px" width="22" height="20" viewBox="0 0 22 20"><circle cx="8.5" cy="8" r="5.4" fill="none" stroke="#d2d2d2" stroke-width="1.6"/><path d="M12.6 12 L17.5 17" stroke="#d2d2d2" stroke-width="2.2" stroke-linecap="round"/></svg>
<svg style="left:27px;top:419px" width="3" height="3" viewBox="0 0 3 3"><path d="M3 0 L3 3 L0 3 Z" fill="#d2d2d2"/></svg>
<svg style="left:5px;top:431px" width="12" height="12" viewBox="0 0 12 12"><rect x="4.2" y="4.2" width="7" height="7" fill="#111" stroke="#eee" stroke-width="1.2"/><rect x="0.8" y="0.8" width="7" height="7" fill="#fff" stroke="#111" stroke-width="1.2"/></svg>
<svg style="left:24px;top:431px" width="11" height="11" viewBox="0 0 11 11"><path d="M2.2 4.5 L2.2 2.5 L6 2.5 C8 2.5 8.5 3.5 8.5 5 L8.5 8" fill="none" stroke="#d8d8d8" stroke-width="1.4"/><path d="M0 4 L2.2 0.6 L4.4 4 Z M6.3 7.4 L8.5 10.8 L10.7 7.4 Z" fill="#d8d8d8"/></svg>
<div class="a" style="left:15.4px;top:458.3px;width:17.6px;height:16.7px;background:#fff;border:1px solid #2e2e2e"></div>
<div class="a" style="left:21px;top:463.6px;width:6.6px;height:6.2px;background:#535353;border:1px solid #222"></div>
<div class="a" style="left:6px;top:449px;width:17.2px;height:16.5px;background:#a97b85;border:1.2px solid #efe0e4;outline:1px solid #3a3a3a"></div>
<div class="a" style="left:7px;top:482px;width:8px;height:8.5px;background:#b58893;border:1px solid #3a3a3a"></div>
<div class="a" style="left:15.5px;top:482px;width:8px;height:8.5px;background:linear-gradient(90deg,#fff,#333);border:1px solid #3a3a3a"></div>
<svg style="left:24px;top:482px" width="8.5" height="8.5" viewBox="0 0 8.5 8.5"><rect width="8.5" height="8.5" fill="#fff"/><path d="M0 8.5 L8.5 0" stroke="#e02020" stroke-width="1.6"/></svg>
<svg style="left:13px;top:498px" width="13" height="13" viewBox="0 0 13 13"><circle cx="5" cy="5" r="4" fill="#8a8a8a" stroke="#d2d2d2" stroke-width="1"/><rect x="5.5" y="5.5" width="6.5" height="6.5" fill="#d2d2d2"/></svg>
<svg style="left:10px;top:521px" width="19" height="14" viewBox="0 0 19 14"><rect x="5.6" y="0.6" width="12.5" height="9" fill="#6a6a6a" stroke="#d2d2d2" stroke-width="1.2"/><rect x="0.6" y="4.6" width="12.5" height="9" fill="#6a6a6a" stroke="#d2d2d2" stroke-width="1.2"/><path d="M0.6 6.8 L13 6.8" stroke="#d2d2d2" stroke-width="1"/></svg>
<div class="a" style="left:12.5px;top:557.5px;width:3px;height:3px;border-radius:50%;background:#d2d2d2"></div>
<div class="a" style="left:17.7px;top:557.5px;width:3px;height:3px;border-radius:50%;background:#d2d2d2"></div>
<div class="a" style="left:22.9px;top:557.5px;width:3px;height:3px;border-radius:50%;background:#d2d2d2"></div>
<div class="a" style="left:40px;top:40px;width:427px;height:959px;background:#535353;"></div>
<div class="a" style="left:40px;top:40px;width:427px;height:25px;background:#424242;"></div>
<div class="a" style="left:40px;top:40px;width:45px;height:26px;background:#535353;"></div>
<div class="t" style="left:49px;top:47.6px;font-size:10.3px;color:#f0f0f0;font-weight:bold;letter-spacing:-1.035px;">Layers</div>
<div class="a" style="left:451px;top:49px;width:10px;height:1.4px;background:#b8b8b8;"></div>
<div class="a" style="left:451px;top:52px;width:10px;height:1.4px;background:#b8b8b8;"></div>
<div class="a" style="left:451px;top:55px;width:10px;height:1.4px;background:#b8b8b8;"></div>
<div class="a" style="left:45px;top:68px;width:416px;height:911px;background:#515151;"></div>
<div class="a" style="left:45px;top:91.5px;width:416px;height:1px;background:#484848;"></div>
<svg style="left:48.3px;top:76.5px" width="13" height="9" viewBox="0 0 13 9"><path d="M0.3 4.5 C2.8 0.2 10.2 0.2 12.7 4.5 C10.2 8.8 2.8 8.8 0.3 4.5 Z" fill="#d9d9d9"/><circle cx="6.5" cy="4.5" r="2.3" fill="#484848"/><circle cx="6.6" cy="4.4" r="0.9" fill="#dedede"/></svg>
<div class="a" style="left:86px;top:72.5px;width:4.5px;height:18.5px;background:#f0e43a;"></div>
<svg style="left:97.5px;top:78.25px" width="4" height="7.5" viewBox="0 0 4 7.5"><path d="M0.5 0.5 L3.5 3.75 L0.5 7.0" fill="none" stroke="#e0e0e0" stroke-width="1.5" stroke-linecap="round" stroke-linejoin="round"/></svg>
<div class="a" style="left:114px;top:73.5px;width:18px;height:17px;background:#fdfdfd;border:1.3px solid #161616;outline:1px solid #6a6a6a"></div>
<div class="t ln" style="left:136px;top:78px;font-size:10px;color:#e6e6e6;letter-spacing:-0.35px;-webkit-text-stroke:0.2px #e6e6e6;">Map Frame¬Legend</div>
<div class="a" style="left:433px;top:78px;width:8px;height:8px;border-radius:50%;border:1.2px solid #d0d0d0"></div>
<div class="a" style="left:45px;top:111.5px;width:416px;height:1px;background:#484848;"></div>
<svg style="left:48.3px;top:96.5px" width="13" height="9" viewBox="0 0 13 9"><path d="M0.3 4.5 C2.8 0.2 10.2 0.2 12.7 4.5 C10.2 8.8 2.8 8.8 0.3 4.5 Z" fill="#d9d9d9"/><circle cx="6.5" cy="4.5" r="2.3" fill="#484848"/><circle cx="6.6" cy="4.4" r="0.9" fill="#dedede"/></svg>
<div class="a" style="left:86px;top:92.5px;width:4.5px;height:18.5px;background:#4a52e8;"></div>
<svg style="left:97.5px;top:98.25px" width="4" height="7.5" viewBox="0 0 4 7.5"><path d="M0.5 0.5 L3.5 3.75 L0.5 7.0" fill="none" stroke="#e0e0e0" stroke-width="1.5" stroke-linecap="round" stroke-linejoin="round"/></svg>
<div class="a" style="left:114px;top:93.5px;width:18px;height:17px;background:#fdfdfd;border:1.3px solid #161616;outline:1px solid #6a6a6a"></div>
<div class="t ln" style="left:136px;top:98px;font-size:10px;color:#e6e6e6;letter-spacing:-0.35px;-webkit-text-stroke:0.2px #e6e6e6;">Labels</div>
<div class="a" style="left:433px;top:98px;width:8px;height:8px;border-radius:50%;border:1.2px solid #d0d0d0"></div>
<div class="a" style="left:45px;top:131.5px;width:416px;height:1px;background:#484848;"></div>
<svg style="left:48.3px;top:116.5px" width="13" height="9" viewBox="0 0 13 9"><path d="M0.3 4.5 C2.8 0.2 10.2 0.2 12.7 4.5 C10.2 8.8 2.8 8.8 0.3 4.5 Z" fill="#d9d9d9"/><circle cx="6.5" cy="4.5" r="2.3" fill="#484848"/><circle cx="6.6" cy="4.4" r="0.9" fill="#dedede"/></svg>
<div class="a" style="left:86px;top:112.5px;width:4.5px;height:18.5px;background:#3ee848;"></div>
<svg style="left:96.0px;top:119.75px" width="8" height="4.5" viewBox="0 0 8 4.5"><path d="M0.5 0.5 L4.0 4.0 L7.5 0.5" fill="none" stroke="#e0e0e0" stroke-width="1.6" stroke-linecap="round" stroke-linejoin="round"/></svg>
<div class="a" style="left:114px;top:113.5px;width:18px;height:17px;background:#fdfdfd;border:1.3px solid #161616;outline:1px solid #6a6a6a"></div>
<div class="t ln" style="left:136px;top:118px;font-size:10px;color:#e6e6e6;letter-spacing:-0.35px;-webkit-text-stroke:0.2px #e6e6e6;">Map Frame</div>
<div class="a" style="left:433px;top:118px;width:8px;height:8px;border-radius:50%;border:1.2px solid #d0d0d0"></div>
<div class="a" style="left:45px;top:151.5px;width:416px;height:1px;background:#484848;"></div>
<svg style="left:48.3px;top:136.5px" width="13" height="9" viewBox="0 0 13 9"><path d="M0.3 4.5 C2.8 0.2 10.2 0.2 12.7 4.5 C10.2 8.8 2.8 8.8 0.3 4.5 Z" fill="#d9d9d9"/><circle cx="6.5" cy="4.5" r="2.3" fill="#484848"/><circle cx="6.6" cy="4.4" r="0.9" fill="#dedede"/></svg>
<div class="a" style="left:86px;top:132.5px;width:4.5px;height:18.5px;background:#3ee848;"></div>
<div class="a" style="left:136px;top:133.5px;width:18px;height:17px;background:#fdfdfd;border:1.3px solid #161616;outline:1px solid #6a6a6a"></div>
<div class="t ln" style="left:158px;top:138px;font-size:10px;color:#e6e6e6;letter-spacing:-0.35px;-webkit-text-stroke:0.2px #e6e6e6;text-decoration:underline;">&lt;Clipping Path&gt;</div>
<div class="a" style="left:433px;top:138px;width:8px;height:8px;border-radius:50%;border:1.2px solid #d0d0d0"></div>
<div class="a" style="left:45px;top:171.5px;width:416px;height:1px;background:#484848;"></div>
<svg style="left:48.3px;top:156.5px" width="13" height="9" viewBox="0 0 13 9"><path d="M0.3 4.5 C2.8 0.2 10.2 0.2 12.7 4.5 C10.2 8.8 2.8 8.8 0.3 4.5 Z" fill="#d9d9d9"/><circle cx="6.5" cy="4.5" r="2.3" fill="#484848"/><circle cx="6.6" cy="4.4" r="0.9" fill="#dedede"/></svg>
<div class="a" style="left:86px;top:152.5px;width:4.5px;height:18.5px;background:#3ee848;"></div>
<div class="a" style="left:136px;top:153.5px;width:18px;height:17px;background:#fdfdfd;border:1.3px solid #161616;outline:1px solid #6a6a6a"></div>
<div class="t ln" style="left:158px;top:158px;font-size:10px;color:#e6e6e6;letter-spacing:-0.35px;-webkit-text-stroke:0.2px #e6e6e6;text-decoration:underline;">&lt;Clipping Path&gt;</div>
<div class="a" style="left:433px;top:158px;width:8px;height:8px;border-radius:50%;border:1.2px solid #d0d0d0"></div>
<div class="a" style="left:45px;top:191.5px;width:416px;height:1px;background:#484848;"></div>
<svg style="left:48.3px;top:176.5px" width="13" height="9" viewBox="0 0 13 9"><path d="M0.3 4.5 C2.8 0.2 10.2 0.2 12.7 4.5 C10.2 8.8 2.8 8.8 0.3 4.5 Z" fill="#d9d9d9"/><circle cx="6.5" cy="4.5" r="2.3" fill="#484848"/><circle cx="6.6" cy="4.4" r="0.9" fill="#dedede"/></svg>
<div class="a" style="left:86px;top:172.5px;width:4.5px;height:18.5px;background:#3ee848;"></div>
<div class="a" style="left:136px;top:173.5px;width:18px;height:17px;background:#fdfdfd;border:1.3px solid #161616;outline:1px solid #6a6a6a"></div>
<div class="t ln" style="left:158px;top:178px;font-size:10px;color:#e6e6e6;letter-spacing:-0.35px;-webkit-text-stroke:0.2px #e6e6e6;text-decoration:underline;">&lt;Clipping Path&gt;</div>
<div class="a" style="left:433px;top:178px;width:8px;height:8px;border-radius:50%;border:1.2px solid #d0d0d0"></div>
<div class="a" style="left:45px;top:211.5px;width:416px;height:1px;background:#484848;"></div>
<svg style="left:48.3px;top:196.5px" width="13" height="9" viewBox="0 0 13 9"><path d="M0.3 4.5 C2.8 0.2 10.2 0.2 12.7 4.5 C10.2 8.8 2.8 8.8 0.3 4.5 Z" fill="#d9d9d9"/><circle cx="6.5" cy="4.5" r="2.3" fill="#484848"/><circle cx="6.6" cy="4.4" r="0.9" fill="#dedede"/></svg>
<div class="a" style="left:86px;top:192.5px;width:4.5px;height:18.5px;background:#4a52e8;"></div>
<svg style="left:118.0px;top:199.75px" width="8" height="4.5" viewBox="0 0 8 4.5"><path d="M0.5 0.5 L4.0 4.0 L7.5 0.5" fill="none" stroke="#e0e0e0" stroke-width="1.6" stroke-linecap="round" stroke-linejoin="round"/></svg>
<div class="a" style="left:136px;top:193.5px;width:18px;height:17px;background:#fdfdfd;border:1.3px solid #161616;outline:1px solid #6a6a6a"></div>
<div class="t ln" style="left:158px;top:198px;font-size:10px;color:#e6e6e6;letter-spacing:-0.35px;-webkit-text-stroke:0.2px #e6e6e6;">Map</div>
<div class="a" style="left:433px;top:198px;width:8px;height:8px;border-radius:50%;border:1.2px solid #d0d0d0"></div>
<div class="a" style="left:45px;top:231.5px;width:416px;height:1px;background:#484848;"></div>
<svg style="left:48.3px;top:216.5px" width="13" height="9" viewBox="0 0 13 9"><path d="M0.3 4.5 C2.8 0.2 10.2 0.2 12.7 4.5 C10.2 8.8 2.8 8.8 0.3 4.5 Z" fill="#d9d9d9"/><circle cx="6.5" cy="4.5" r="2.3" fill="#484848"/><circle cx="6.6" cy="4.4" r="0.9" fill="#dedede"/></svg>
<div class="a" style="left:86px;top:212.5px;width:4.5px;height:18.5px;background:#4a52e8;"></div>
<div class="a" style="left:158px;top:213.5px;width:18px;height:17px;background:#fdfdfd;border:1.3px solid #161616;outline:1px solid #6a6a6a"></div>
<div class="t ln" style="left:180px;top:218px;font-size:10px;color:#e6e6e6;letter-spacing:-0.35px;-webkit-text-stroke:0.2px #e6e6e6;text-decoration:underline;">&lt;Clipping Path&gt;</div>
<div class="a" style="left:433px;top:218px;width:8px;height:8px;border-radius:50%;border:1.2px solid #d0d0d0"></div>
<div class="a" style="left:45px;top:251.5px;width:416px;height:1px;background:#484848;"></div>
<svg style="left:48.3px;top:236.5px" width="13" height="9" viewBox="0 0 13 9"><path d="M0.3 4.5 C2.8 0.2 10.2 0.2 12.7 4.5 C10.2 8.8 2.8 8.8 0.3 4.5 Z" fill="#d9d9d9"/><circle cx="6.5" cy="4.5" r="2.3" fill="#484848"/><circle cx="6.6" cy="4.4" r="0.9" fill="#dedede"/></svg>
<div class="a" style="left:86px;top:232.5px;width:4.5px;height:18.5px;background:#4a52e8;"></div>
<div class="a" style="left:158px;top:233.5px;width:18px;height:17px;background:#fdfdfd;border:1.3px solid #161616;outline:1px solid #6a6a6a"></div>
<div class="t ln" style="left:180px;top:238px;font-size:10px;color:#e6e6e6;letter-spacing:-0.35px;-webkit-text-stroke:0.2px #e6e6e6;text-decoration:underline;">&lt;Clipping Path&gt;</div>
<div class="a" style="left:433px;top:238px;width:8px;height:8px;border-radius:50%;border:1.2px solid #d0d0d0"></div>
<div class="a" style="left:45px;top:271.5px;width:416px;height:1px;background:#484848;"></div>
<svg style="left:48.3px;top:256.5px" width="13" height="9" viewBox="0 0 13 9"><path d="M0.3 4.5 C2.8 0.2 10.2 0.2 12.7 4.5 C10.2 8.8 2.8 8.8 0.3 4.5 Z" fill="#d9d9d9"/><circle cx="6.5" cy="4.5" r="2.3" fill="#484848"/><circle cx="6.6" cy="4.4" r="0.9" fill="#dedede"/></svg>
<div class="a" style="left:86px;top:252.5px;width:4.5px;height:18.5px;background:#e84848;"></div>
<svg style="left:141.5px;top:258.25px" width="4" height="7.5" viewBox="0 0 4 7.5"><path d="M0.5 0.5 L3.5 3.75 L0.5 7.0" fill="none" stroke="#e0e0e0" stroke-width="1.5" stroke-linecap="round" stroke-linejoin="round"/></svg>
<div class="a" style="left:158px;top:253.5px;width:18px;height:17px;background:#fdfdfd;border:1.3px solid #161616;outline:1px solid #6a6a6a"></div>
<div class="t ln" style="left:180px;top:258px;font-size:10px;color:#e6e6e6;letter-spacing:-0.35px;-webkit-text-stroke:0.2px #e6e6e6;">Human Geography Label</div>
<div class="a" style="left:433px;top:258px;width:8px;height:8px;border-radius:50%;border:1.2px solid #d0d0d0"></div>
<div class="a" style="left:45px;top:291.5px;width:416px;height:1px;background:#484848;"></div>
<svg style="left:48.3px;top:276.5px" width="13" height="9" viewBox="0 0 13 9"><path d="M0.3 4.5 C2.8 0.2 10.2 0.2 12.7 4.5 C10.2 8.8 2.8 8.8 0.3 4.5 Z" fill="#d9d9d9"/><circle cx="6.5" cy="4.5" r="2.3" fill="#484848"/><circle cx="6.6" cy="4.4" r="0.9" fill="#dedede"/></svg>
<div class="a" style="left:86px;top:272.5px;width:4.5px;height:18.5px;background:#bdbdbd;"></div>
<svg style="left:141.5px;top:278.25px" width="4" height="7.5" viewBox="0 0 4 7.5"><path d="M0.5 0.5 L3.5 3.75 L0.5 7.0" fill="none" stroke="#e0e0e0" stroke-width="1.5" stroke-linecap="round" stroke-linejoin="round"/></svg>
<div class="a" style="left:158px;top:273.5px;width:18px;height:17px;background:#fdfdfd;border:1.3px solid #161616;outline:1px solid #6a6a6a"></div>
<div class="t ln" style="left:180px;top:278px;font-size:10px;color:#e6e6e6;letter-spacing:-0.35px;-webkit-text-stroke:0.2px #e6e6e6;">Human Geography Dark Detail</div>
<div class="a" style="left:433px;top:278px;width:8px;height:8px;border-radius:50%;border:1.2px solid #d0d0d0"></div>
<div class="a" style="left:45px;top:311.5px;width:416px;height:1px;background:#484848;"></div>
<svg style="left:48.3px;top:296.5px" width="13" height="9" viewBox="0 0 13 9"><path d="M0.3 4.5 C2.8 0.2 10.2 0.2 12.7 4.5 C10.2 8.8 2.8 8.8 0.3 4.5 Z" fill="#d9d9d9"/><circle cx="6.5" cy="4.5" r="2.3" fill="#484848"/><circle cx="6.6" cy="4.4" r="0.9" fill="#dedede"/></svg>
<div class="a" style="left:86px;top:292.5px;width:4.5px;height:18.5px;background:#f0e43a;"></div>
<svg style="left:141.5px;top:298.25px" width="4" height="7.5" viewBox="0 0 4 7.5"><path d="M0.5 0.5 L3.5 3.75 L0.5 7.0" fill="none" stroke="#e0e0e0" stroke-width="1.5" stroke-linecap="round" stroke-linejoin="round"/></svg>
<div class="a" style="left:158px;top:293.5px;width:18px;height:17px;background:#fdfdfd;border:1.3px solid #161616;outline:1px solid #6a6a6a"></div>
<div class="t ln" style="left:180px;top:298px;font-size:10px;color:#e6e6e6;letter-spacing:-0.35px;-webkit-text-stroke:0.2px #e6e6e6;">Average Date When Lilacs Bloom in Idaho</div>
<div class="a" style="left:433px;top:298px;width:8px;height:8px;border-radius:50%;border:1.2px solid #d0d0d0"></div>
<div class="a" style="left:45px;top:331.5px;width:416px;height:1px;background:#484848;"></div>
<svg style="left:48.3px;top:316.5px" width="13" height="9" viewBox="0 0 13 9"><path d="M0.3 4.5 C2.8 0.2 10.2 0.2 12.7 4.5 C10.2 8.8 2.8 8.8 0.3 4.5 Z" fill="#d9d9d9"/><circle cx="6.5" cy="4.5" r="2.3" fill="#484848"/><circle cx="6.6" cy="4.4" r="0.9" fill="#dedede"/></svg>
<svg style="left:71px;top:317px" width="8" height="10" viewBox="0 0 8 10"><path d="M1.8 4.5 L1.8 3 C1.8 0.4 6.2 0.4 6.2 3 L6.2 4.5" fill="none" stroke="#d8d8d8" stroke-width="1.2"/><rect x="0.3" y="4.3" width="7.4" height="5.4" rx="0.6" fill="#d8d8d8"/><rect x="3.4" y="5.8" width="1.2" height="2.4" fill="#535353"/></svg>
<div class="a" style="left:86px;top:312.5px;width:4.5px;height:18.5px;background:#e848e8;"></div>
<svg style="left:140.0px;top:319.75px" width="8" height="4.5" viewBox="0 0 8 4.5"><path d="M0.5 0.5 L4.0 4.0 L7.5 0.5" fill="none" stroke="#e0e0e0" stroke-width="1.6" stroke-linecap="round" stroke-linejoin="round"/></svg>
<div class="a" style="left:158px;top:313.5px;width:18px;height:17px;background:#fdfdfd;border:1.3px solid #161616;outline:1px solid #6a6a6a"></div>
<div class="t ln" style="left:180px;top:318px;font-size:10px;color:#e6e6e6;letter-spacing:-0.35px;-webkit-text-stroke:0.2px #e6e6e6;">Terrain: Multi-Directional Hillshade</div>
<div class="a" style="left:433px;top:318px;width:8px;height:8px;border-radius:50%;border:1.2px solid #d0d0d0"></div>
<div class="a" style="left:45px;top:351.5px;width:416px;height:1px;background:#484848;"></div>
<svg style="left:48.3px;top:336.5px" width="13" height="9" viewBox="0 0 13 9"><path d="M0.3 4.5 C2.8 0.2 10.2 0.2 12.7 4.5 C10.2 8.8 2.8 8.8 0.3 4.5 Z" fill="#d9d9d9"/><circle cx="6.5" cy="4.5" r="2.3" fill="#484848"/><circle cx="6.6" cy="4.4" r="0.9" fill="#dedede"/></svg>
<svg style="left:71px;top:337px" width="8" height="10" viewBox="0 0 8 10"><path d="M1.8 4.5 L1.8 3 C1.8 0.4 6.2 0.4 6.2 3 L6.2 4.5" fill="none" stroke="#6e6e6e" stroke-width="1.2"/><rect x="0.3" y="4.3" width="7.4" height="5.4" rx="0.6" fill="#6e6e6e"/><rect x="3.4" y="5.8" width="1.2" height="2.4" fill="#535353"/></svg>
<div class="a" style="left:86px;top:332.5px;width:4.5px;height:18.5px;background:#3ee8f0;"></div>
<svg style="left:162.0px;top:339.75px" width="8" height="4.5" viewBox="0 0 8 4.5"><path d="M0.5 0.5 L4.0 4.0 L7.5 0.5" fill="none" stroke="#e0e0e0" stroke-width="1.6" stroke-linecap="round" stroke-linejoin="round"/></svg>
<div class="a" style="left:180px;top:333.5px;width:18px;height:17px;background:#fdfdfd;border:1.3px solid #161616;outline:1px solid #6a6a6a"></div>
<div class="t ln" style="left:202px;top:338px;font-size:10px;color:#e6e6e6;letter-spacing:-0.35px;-webkit-text-stroke:0.2px #e6e6e6;">Terrain: Multi-Directional Hillshade</div>
<div class="a" style="left:433px;top:338px;width:8px;height:8px;border-radius:50%;border:1.2px solid #d0d0d0"></div>
<div class="a" style="left:45px;top:371.5px;width:416px;height:1px;background:#484848;"></div>
<svg style="left:48.3px;top:356.5px" width="13" height="9" viewBox="0 0 13 9"><path d="M0.3 4.5 C2.8 0.2 10.2 0.2 12.7 4.5 C10.2 8.8 2.8 8.8 0.3 4.5 Z" fill="#d9d9d9"/><circle cx="6.5" cy="4.5" r="2.3" fill="#484848"/><circle cx="6.6" cy="4.4" r="0.9" fill="#dedede"/></svg>
<svg style="left:71px;top:357px" width="8" height="10" viewBox="0 0 8 10"><path d="M1.8 4.5 L1.8 3 C1.8 0.4 6.2 0.4 6.2 3 L6.2 4.5" fill="none" stroke="#6e6e6e" stroke-width="1.2"/><rect x="0.3" y="4.3" width="7.4" height="5.4" rx="0.6" fill="#6e6e6e"/><rect x="3.4" y="5.8" width="1.2" height="2.4" fill="#535353"/></svg>
<div class="a" style="left:86px;top:352.5px;width:4.5px;height:18.5px;background:#3ee8f0;"></div>
<div class="a" style="left:202px;top:353.5px;width:18px;height:17px;background:#fdfdfd;border:1.3px solid #161616;outline:1px solid #6a6a6a"></div>
<div class="t ln" style="left:224px;top:358px;font-size:10px;color:#e6e6e6;letter-spacing:-0.35px;-webkit-text-stroke:0.2px #e6e6e6;">&lt;Image&gt;</div>
<div class="a" style="left:433px;top:358px;width:8px;height:8px;border-radius:50%;border:1.2px solid #d0d0d0"></div>
<div class="a" style="left:45px;top:391.5px;width:416px;height:1px;background:#484848;"></div>
<svg style="left:48.3px;top:376.5px" width="13" height="9" viewBox="0 0 13 9"><path d="M0.3 4.5 C2.8 0.2 10.2 0.2 12.7 4.5 C10.2 8.8 2.8 8.8 0.3 4.5 Z" fill="#d9d9d9"/><circle cx="6.5" cy="4.5" r="2.3" fill="#484848"/><circle cx="6.6" cy="4.4" r="0.9" fill="#dedede"/></svg>
<div class="a" style="left:86px;top:372.5px;width:4.5px;height:18.5px;background:#e84848;"></div>
<div class="a" style="left:114px;top:373.5px;width:18px;height:17px;background:#fdfdfd;border:1.3px solid #161616;outline:1px solid #6a6a6a"></div>
<div class="t ln" style="left:136px;top:378px;font-size:10px;color:#e6e6e6;letter-spacing:-0.35px;-webkit-text-stroke:0.2px #e6e6e6;">background</div>
<div class="a" style="left:433px;top:378px;width:8px;height:8px;border-radius:50%;border:1.2px solid #d0d0d0"></div>
<div class="a" style="left:66.5px;top:72px;width:1px;height:320px;background:#484848;"></div>
<div class="a" style="left:427.5px;top:72px;width:1px;height:320px;background:#484848;"></div>
<div class="a" style="left:122.5px;top:77px;width:1.5px;height:3px;background:#bbb;"></div>
<div class="a" style="left:122px;top:81px;width:2.5px;height:7px;background:#cfcfcf;"></div>
<svg style="left:115.5px;top:95px" width="15" height="14" viewBox="0 0 15 14"><path d="M1 4 L4 2 L7 5 L10 3 L13 6 M2 9 L5 7 L8 10 L12 9 M3 12 L7 12" stroke="#c38a9a" stroke-width="1" fill="none"/><path d="M2 2 L5 6 M9 7 L12 12" stroke="#9aa0b8" stroke-width=".8"/></svg>
<div class="a" style="left:121px;top:128px;width:1.5px;height:1.5px;background:#aaa;"></div>
<div class="a" style="left:143px;top:208px;width:1.5px;height:1.5px;background:#aaa;"></div>
<svg style="left:160px;top:274px" width="15" height="14" viewBox="0 0 15 14"><path d="M2 12 L3 3 L6 9 L8 5 L11 12" stroke="#b4b4b4" stroke-width=".9" fill="none"/></svg>
<svg style="left:160px;top:254px" width="15" height="14" viewBox="0 0 15 14"><path d="M8 3 L10 5 M5 8 L6 9 M11 9 L12 10" stroke="#cfd3b0" stroke-width="1" fill="none"/></svg>
<svg style="left:160px;top:314px" width="15" height="14" viewBox="0 0 15 14"><path d="M4 1 L8 1 L8 5 L11 8 L14 9 L14 13 L3 13 Z" fill="#dedede"/></svg>
<svg style="left:182px;top:334px" width="15" height="14" viewBox="0 0 15 14"><path d="M4 1 L8 1 L8 5 L11 8 L14 9 L14 13 L3 13 Z" fill="#dedede"/></svg>
<svg style="left:204px;top:354px" width="15" height="14" viewBox="0 0 15 14"><path d="M4 1 L8 1 L8 5 L11 8 L14 9 L14 13 L3 13 Z" fill="#dedede"/></svg>
<div class="a" style="left:166px;top:305px;width:1.5px;height:1.5px;background:#bbb;"></div>
<svg style="left:455px;top:92px" width="6" height="6" viewBox="0 0 6 6"><path d="M0 0 L6 0 L6 6 Z" fill="#d8d8d8"/></svg>
<div class="t" style="left:45px;top:983.5px;font-size:10px;color:#d8d8d8;letter-spacing:-0.369px;">4 Layers</div>
<svg style="left:305px;top:982px" width="13" height="13" viewBox="0 0 13 13"><path d="M5 2.5 L1 2.5 L1 12 L10.5 12 L10.5 8" fill="none" stroke="#6c6c6c" stroke-width="1.2"/><path d="M6 7 L11.5 1.5 M8 1 L12 1 L12 5" fill="none" stroke="#6c6c6c" stroke-width="1.2"/></svg>
<svg style="left:330px;top:982px" width="13" height="13" viewBox="0 0 13 13"><circle cx="5" cy="5" r="3.8" fill="none" stroke="#6c6c6c" stroke-width="1.3"/><path d="M8 8 L12 12" stroke="#6c6c6c" stroke-width="1.6"/></svg>
<svg style="left:354px;top:982px" width="13" height="13" viewBox="0 0 13 13"><rect x="1" y="1" width="8" height="8" fill="none" stroke="#6c6c6c" stroke-width="1.1"/><rect x="4" y="4" width="8" height="8" fill="#535353" stroke="#6c6c6c" stroke-width="1.1"/><circle cx="8" cy="8" r="1.6" fill="#6c6c6c"/></svg>
<svg style="left:378px;top:982px" width="15" height="13" viewBox="0 0 15 13"><rect x="5.5" y="3" width="8.5" height="8.5" fill="none" stroke="#6c6c6c" stroke-width="1.1"/><path d="M9.7 5 L9.7 9.5 M7.5 7.2 L12 7.2" stroke="#6c6c6c" stroke-width="1.1"/><path d="M1 1 L1 5 L4 5 M2.5 3.5 L4 5 L2.5 6.5" fill="none" stroke="#6c6c6c" stroke-width="1"/></svg>
<svg style="left:405px;top:982px" width="12" height="12" viewBox="0 0 12 12"><rect x="0.7" y="0.7" width="10.6" height="10.6" fill="none" stroke="#e2e2e2" stroke-width="1.3"/><path d="M6 3 L6 9 M3 6 L9 6" stroke="#e2e2e2" stroke-width="1.3"/></svg>
<svg style="left:429px;top:981.5px" width="11" height="13" viewBox="0 0 11 13"><path d="M0.5 3 L10.5 3 M3.5 3 L3.5 1 L7.5 1 L7.5 3" fill="none" stroke="#6c6c6c" stroke-width="1.1"/><path d="M1.5 4.5 L2.2 12.3 L8.8 12.3 L9.5 4.5 Z" fill="#6c6c6c"/></svg>
<div class="a" style="left:45px;top:997px;width:329px;height:2px;background:#e8e8e8;"></div>
<div class="a" style="left:111px;top:424.5px;width:248.60000000000002px;height:319px;background:#3a3a3a;border-radius:4px 4px 0 0"></div>
<div class="a" style="left:112px;top:425.5px;width:246.60000000000002px;height:13px;background:#474747;border-radius:3px 3px 0 0"></div>
<div class="a" style="left:112px;top:438.5px;width:246.60000000000002px;height:297px;background:#535353;"></div>
<div class="a" style="left:112px;top:438.5px;width:246.60000000000002px;height:25px;background:#424242;"></div>
<div class="a" style="left:112px;top:438.5px;width:47px;height:26px;background:#535353;"></div>
<svg style="left:330.0px;top:429.8px" width="7" height="5" viewBox="0 0 7 5"><path d="M3 0 L0 2.5 L3 5 Z M7 0 L4 2.5 L7 5 Z" fill="#d8d8d8"/></svg>
<svg style="left:347.5px;top:429.3px" width="6" height="6" viewBox="0 0 6 6"><path d="M0.6 0.6 L5.4 5.4 M5.4 0.6 L0.6 5.4" stroke="#e0e0e0" stroke-width="1.8" stroke-linecap="round"/></svg>
<svg style="left:116.2px;top:446.0px" width="5" height="9" viewBox="0 0 5 9"><path d="M0.5 3.2 L2.5 0.8 L4.5 3.2 M0.5 5.8 L2.5 8.2 L4.5 5.8" fill="none" stroke="#9a9a9a" stroke-width="1.1"/></svg>
<div class="t" style="left:126px;top:445.2px;font-size:10.5px;color:#f0f0f0;font-weight:bold;letter-spacing:-0.783px;">Color</div>
<div class="a" style="left:343px;top:447px;width:10px;height:1.4px;background:#b8b8b8;"></div>
<div class="a" style="left:343px;top:450px;width:10px;height:1.4px;background:#b8b8b8;"></div>
<div class="a" style="left:343px;top:453px;width:10px;height:1.4px;background:#b8b8b8;"></div>
<svg style="left:116px;top:469px" width="12" height="12" viewBox="0 0 12 12"><rect x="4.2" y="4.2" width="7" height="7" fill="#111" stroke="#eee" stroke-width="1.2"/><rect x="0.8" y="0.8" width="7" height="7" fill="#fff" stroke="#111" stroke-width="1.2"/></svg>
<svg style="left:136px;top:470px" width="11" height="11" viewBox="0 0 11 11"><path d="M2.2 4.5 L2.2 2.5 L6 2.5 C8 2.5 8.5 3.5 8.5 5 L8.5 8" fill="none" stroke="#d8d8d8" stroke-width="1.4"/><path d="M0 4 L2.2 0.6 L4.4 4 Z M6.3 7.4 L8.5 10.8 L10.7 7.4 Z" fill="#d8d8d8"/></svg>
<div class="a" style="left:126.7px;top:497px;width:17.6px;height:17px;background:#fff;border:1px solid #2e2e2e"></div>
<div class="a" style="left:132.3px;top:502.5px;width:6.6px;height:6.2px;background:#535353;border:1px solid #222"></div>
<div class="a" style="left:117px;top:488px;width:17.6px;height:16.8px;background:#a97b85;border:1.2px solid #efe0e4;outline:1px solid #3a3a3a"></div>
<div class="t" style="left:162px;top:477.2px;font-size:10.5px;color:#cfcfcf;font-weight:bold;">R</div>
<div class="a" style="left:179px;top:479.7px;width:97px;height:3.4px;border-radius:2px;background:linear-gradient(90deg,#10aebc,#8c9aa2 45%,#ff7474)"></div>
<svg style="left:239.2px;top:483.0px" width="9" height="8" viewBox="0 0 9 8"><path d="M4.5 0.4 L8.6 4.5 L8.6 7.6 L0.4 7.6 L0.4 4.5 Z" fill="#d9d9d9" stroke="#7a7a7a" stroke-width=".6"/></svg>
<div class="a" style="left:283.8px;top:472.3px;width:32.4px;height:18px;background:#424242;border-radius:2px;border:1px solid #4a4a4a"></div>
<div class="t" style="left:288.5px;top:476.6px;font-size:10.5px;color:#f2f2f2;letter-spacing:-0.3px;">169</div>
<div class="t" style="left:162px;top:508.8px;font-size:10.5px;color:#cfcfcf;font-weight:bold;">G</div>
<div class="a" style="left:179px;top:511.2px;width:97px;height:3.4px;border-radius:2px;background:linear-gradient(90deg,#d400ac,#c08c98 50%,#8cff6c)"></div>
<svg style="left:220.8px;top:514.5px" width="9" height="8" viewBox="0 0 9 8"><path d="M4.5 0.4 L8.6 4.5 L8.6 7.6 L0.4 7.6 L0.4 4.5 Z" fill="#d9d9d9" stroke="#7a7a7a" stroke-width=".6"/></svg>
<div class="a" style="left:283.8px;top:503.8px;width:32.4px;height:18px;background:#424242;border-radius:2px;border:1px solid #4a4a4a"></div>
<div class="t" style="left:288.5px;top:508.0px;font-size:10.5px;color:#f2f2f2;letter-spacing:-0.3px;">123</div>
<div class="t" style="left:162px;top:540.0px;font-size:10.5px;color:#cfcfcf;font-weight:bold;">B</div>
<div class="a" style="left:179px;top:542.5px;width:97px;height:3.4px;border-radius:2px;background:linear-gradient(90deg,#d2a01c,#c08c98 50%,#a070ff)"></div>
<svg style="left:224.5px;top:545.8px" width="9" height="8" viewBox="0 0 9 8"><path d="M4.5 0.4 L8.6 4.5 L8.6 7.6 L0.4 7.6 L0.4 4.5 Z" fill="#d9d9d9" stroke="#7a7a7a" stroke-width=".6"/></svg>
<div class="a" style="left:283.8px;top:535.0999999999999px;width:32.4px;height:18px;background:#424242;border-radius:2px;border:1px solid #4a4a4a"></div>
<div class="t" style="left:288.5px;top:539.3px;font-size:10.5px;color:#f2f2f2;letter-spacing:-0.3px;">133</div>
<svg style="left:116.8px;top:573.2px" width="37.4" height="12" viewBox="0 0 37.4 12"><rect width="12.4" height="12" fill="#fff"/><path d="M0.5 11.5 L12 0.5" stroke="#e82222" stroke-width="1.8"/><rect x="12.4" width="12.6" height="12" fill="#000"/><rect x="25" width="12.4" height="12" fill="#fff"/></svg>
<div class="t" style="left:278px;top:575.0px;font-size:10px;color:#b8b8b8;font-weight:bold;">#</div>
<div class="a" style="left:287.5px;top:570.5px;width:54px;height:18px;background:#424242;border-radius:2px;border:1px solid #4a4a4a"></div>
<div class="t" style="left:292px;top:574.8px;font-size:10.5px;color:#f2f2f2;letter-spacing:-0.2px;">A97B85</div>
<div class="a" style="left:118px;top:596px;width:223.4px;height:132.4px;background:linear-gradient(180deg,#fff 0%,rgba(255,255,255,0) 50%,rgba(0,0,0,0) 50%,#000 100%),linear-gradient(90deg,#f00 0%,#ff0 16.6%,#0f0 33.3%,#0ff 50%,#00f 66.6%,#f0f 83.3%,#f00 100%)"></div>
<div class="a" style="left:112px;top:735.5px;width:246.60000000000002px;height:1.2px;background:#2e2e2e;"></div>
<div class="a" style="left:112px;top:736.7px;width:246.60000000000002px;height:6px;background:#505050;"></div>
<div class="a" style="left:226px;top:738px;width:19px;height:2.5px;background:#454545;"></div>
<div class="a" style="left:139px;top:776.5px;width:166.5px;height:92px;background:#3a3a3a;border-radius:4px"></div>
<div class="a" style="left:140px;top:777.5px;width:164.5px;height:12px;background:#444;border-radius:3px 3px 0 0"></div>
<div class="a" style="left:140px;top:789.5px;width:164.5px;height:38.5px;background:#535353;"></div>
<div class="a" style="left:140px;top:829px;width:164.5px;height:38.5px;background:#535353;border-radius:0 0 3px 3px"></div>
<svg style="left:274.0px;top:781.8px" width="7" height="5" viewBox="0 0 7 5"><path d="M0 0 L3 2.5 L0 5 Z M4 0 L7 2.5 L4 5 Z" fill="#d8d8d8"/></svg>
<svg style="left:292.5px;top:781.3px" width="6" height="6" viewBox="0 0 6 6"><path d="M0.6 0.6 L5.4 5.4 M5.4 0.6 L0.6 5.4" stroke="#e0e0e0" stroke-width="1.8" stroke-linecap="round"/></svg>
<div class="a" style="left:212px;top:793.5px;width:19px;height:2.5px;background:#474747;"></div>
<div class="a" style="left:212px;top:833px;width:19px;height:2.5px;background:#474747;"></div>
<svg style="left:151.5px;top:804.5px" width="19" height="18" viewBox="0 0 19 18"><rect x="0.7" y="1.7" width="12.6" height="11.6" fill="#6a6a6a" stroke="#c8c8c8" stroke-width="1.1"/><path d="M3 11 L6 6.5 L8 8.5 L11 4 L11 11 Z" fill="#d8d8d8"/><rect x="8.5" y="9.5" width="8" height="6.5" fill="#535353" stroke="#d0d0d0" stroke-width="1" stroke-dasharray="1.5 1"/><path d="M12.5 8 L12.5 17.5 M7 12.7 L18 12.7" stroke="#d0d0d0" stroke-width=".8" stroke-dasharray="1.2 1"/></svg>
<svg style="left:151.5px;top:843px" width="19" height="18" viewBox="0 0 19 18"><rect x="0.7" y="1.7" width="12.6" height="11.6" fill="#6a6a6a" stroke="#c8c8c8" stroke-width="1.1"/><path d="M3 11 L6 6.5 L8 8.5 L11 4 L11 11 Z" fill="#d8d8d8"/><path d="M7.3 13.5C9.5 9.3 16.5 9.3 18.7 13.5C16.5 17.7 9.5 17.7 7.3 13.5Z" fill="#e2e2e2" stroke="#535353" stroke-width="0.8"/><circle cx="13" cy="13.2" r="2.3" fill="#1e1e1e"/><circle cx="13.7" cy="12.5" r="0.7" fill="#e8e8e8"/></svg>
<div class="t" style="left:175.5px;top:807.9px;font-size:10.3px;color:#f2f2f2;font-weight:bold;letter-spacing:-0.583px;">ArcGIS Maps: Mapboards</div>
<div class="t" style="left:175.5px;top:846.4px;font-size:10.3px;color:#f2f2f2;font-weight:bold;letter-spacing:-0.476px;">ArcGIS Maps: Compilati...</div>
<div class="a" style="left:1343px;top:71.5px;width:239.5px;height:629px;background:#3a3a3a;border-radius:3px"></div>
<div class="a" style="left:1344px;top:72.5px;width:237.5px;height:12.5px;background:#474747;border-radius:3px 3px 0 0"></div>
<svg style="left:1552.1px;top:76.5px" width="7" height="5" viewBox="0 0 7 5"><path d="M3 0 L0 2.5 L3 5 Z M7 0 L4 2.5 L7 5 Z" fill="#d8d8d8"/></svg>
<svg style="left:1570.0px;top:76.0px" width="6" height="6" viewBox="0 0 6 6"><path d="M0.6 0.6 L5.4 5.4 M5.4 0.6 L0.6 5.4" stroke="#e0e0e0" stroke-width="1.8" stroke-linecap="round"/></svg>
<div class="a" style="left:1344px;top:85px;width:237.5px;height:200.5px;background:#535353;"></div>
<div class="a" style="left:1344px;top:85px;width:237.5px;height:25px;background:#424242;"></div>
<div class="a" style="left:1344px;top:85px;width:66.5px;height:26px;background:#535353;"></div>
<svg style="left:1349.0px;top:92.5px" width="5" height="9" viewBox="0 0 5 9"><path d="M0.5 3.2 L2.5 0.8 L4.5 3.2 M0.5 5.8 L2.5 8.2 L4.5 5.8" fill="none" stroke="#9a9a9a" stroke-width="1.1"/></svg>
<div class="t" style="left:1358.7px;top:91.8px;font-size:10.5px;color:#f2f2f2;font-weight:bold;letter-spacing:-0.747px;">Character</div>
<div class="a" style="left:1565px;top:94px;width:10px;height:1.4px;background:#b8b8b8;"></div>
<div class="a" style="left:1565px;top:97px;width:10px;height:1.4px;background:#b8b8b8;"></div>
<div class="a" style="left:1565px;top:100px;width:10px;height:1.4px;background:#b8b8b8;"></div>
<div class="a" style="left:1350.5px;top:118px;width:193.5px;height:17px;background:#444444;border-radius:2px"></div>
<div class="a" style="left:1545px;top:118px;width:16px;height:17px;background:#4a4a4a;border-radius:2px"></div>
<svg style="left:1352.5px;top:121.5px" width="10" height="11" viewBox="0 0 10 11"><circle cx="3.8" cy="3.8" r="3" fill="none" stroke="#c8c8c8" stroke-width="1.3"/><path d="M6 6.2 L9 9.6" stroke="#c8c8c8" stroke-width="1.6" stroke-linecap="round"/></svg>
<svg style="left:1362.0px;top:124.9px" width="6" height="3.2" viewBox="0 0 6 3.2"><path d="M0.5 0.5 L3.0 2.7 L5.5 0.5" fill="none" stroke="#a8a8a8" stroke-width="1.2" stroke-linecap="round" stroke-linejoin="round"/></svg>
<div class="t" style="left:1375px;top:121.8px;font-size:10.3px;color:#f2f2f2;font-weight:bold;letter-spacing:-0.783px;">Myriad Pro</div>
<svg style="left:1549.25px;top:124.5px" width="7.5" height="4" viewBox="0 0 7.5 4"><path d="M0.5 0.5 L3.75 3.5 L7.0 0.5" fill="none" stroke="#e0e0e0" stroke-width="1.6" stroke-linecap="round" stroke-linejoin="round"/></svg>
<div class="a" style="left:1350.5px;top:142.8px;width:206.5px;height:16.8px;background:#444444;border-radius:2px"></div>
<div class="a" style="left:1559.4px;top:142.8px;width:15.5px;height:16.8px;background:#4a4a4a;border-radius:2px"></div>
<div class="t" style="left:1355.8px;top:146.8px;font-size:10.3px;color:#f2f2f2;font-weight:bold;letter-spacing:-0.764px;">Regular</div>
<svg style="left:1563.25px;top:149.5px" width="7.5" height="4" viewBox="0 0 7.5 4"><path d="M0.5 0.5 L3.75 3.5 L7.0 0.5" fill="none" stroke="#e0e0e0" stroke-width="1.6" stroke-linecap="round" stroke-linejoin="round"/></svg>
<div class="a" style="left:1350.5px;top:165.5px;width:224px;height:1px;background:#5e5e5e;"></div>
<div class="t" style="left:1349.5px;top:178.5px;font-size:10px;color:#d6d6d6;font-family:'Liberation Serif',serif;">T</div>
<div class="t" style="left:1355px;top:174.5px;font-size:15px;color:#d6d6d6;font-family:'Liberation Serif',serif;">T</div>
<div class="a" style="left:1371px;top:174px;width:14.5px;height:17px;background:#4a4a4a;border-radius:2px"></div>
<svg style="left:1374.75px;top:176.5px" width="7" height="12" viewBox="0 0 7 12"><path d="M0.7 3.7 L3.5 1 L6.3 3.7 M0.7 8.3 L3.5 11 L6.3 8.3" fill="none" stroke="#e4e4e4" stroke-width="1.4" stroke-linecap="round" stroke-linejoin="round"/></svg>
<div class="a" style="left:1387.3px;top:174px;width:42px;height:17px;background:#444444;border-radius:2px"></div>
<div class="t" style="left:1390.7px;top:177.8px;font-size:10.3px;color:#f0f0f0;letter-spacing:-0.3px;">12 pt</div>
<div class="a" style="left:1431px;top:174px;width:15.5px;height:17px;background:#4a4a4a;border-radius:2px"></div>
<svg style="left:1434.95px;top:180.7px" width="7.5" height="4" viewBox="0 0 7.5 4"><path d="M0.5 0.5 L3.75 3.5 L7.0 0.5" fill="none" stroke="#e0e0e0" stroke-width="1.6" stroke-linecap="round" stroke-linejoin="round"/></svg>
<div class="t" style="left:1484.5px;top:172.5px;font-size:9.5px;color:#cfcfcf;font-family:'Liberation Serif',serif;">A</div>
<div class="t" style="left:1484.5px;top:181.5px;font-size:9.5px;color:#cfcfcf;font-family:'Liberation Serif',serif;">A</div>
<svg style="left:1478.5px;top:178px" width="16" height="13" viewBox="0 0 16 13"><path d="M5.5 3.2 H15 M5.5 12 H15" stroke="#cfcfcf" stroke-width=".9"/><path d="M2.2 3.5 V11.5 M0.5 5.5 L2.2 3.2 L3.9 5.5 M0.5 9.5 L2.2 11.8 L3.9 9.5" stroke="#cfcfcf" stroke-width="1" fill="none"/></svg>
<div class="a" style="left:1499.5px;top:174px;width:15px;height:17px;background:#4a4a4a;border-radius:2px"></div>
<svg style="left:1503.5px;top:176.5px" width="7" height="12" viewBox="0 0 7 12"><path d="M0.7 3.7 L3.5 1 L6.3 3.7 M0.7 8.3 L3.5 11 L6.3 8.3" fill="none" stroke="#e4e4e4" stroke-width="1.4" stroke-linecap="round" stroke-linejoin="round"/></svg>
<div class="a" style="left:1516.3px;top:174px;width:41.3px;height:17px;background:#444444;border-radius:2px"></div>
<div class="t" style="left:1519px;top:177.8px;font-size:10.3px;color:#f0f0f0;letter-spacing:-0.35px;">(14.4 pt)</div>
<div class="a" style="left:1559.4px;top:174px;width:15.5px;height:17px;background:#4a4a4a;border-radius:2px"></div>
<svg style="left:1563.25px;top:180.7px" width="7.5" height="4" viewBox="0 0 7.5 4"><path d="M0.5 0.5 L3.75 3.5 L7.0 0.5" fill="none" stroke="#e0e0e0" stroke-width="1.6" stroke-linecap="round" stroke-linejoin="round"/></svg>
<div class="t" style="left:1349px;top:199.5px;font-size:12px;letter-spacing:-2.2px;color:#d2d2d2;font-family:'Liberation Serif',serif;">V/A</div>
<svg style="left:1360px;top:211px" width="7" height="5" viewBox="0 0 7 5"><path d="M7 2.5 H1 M3 0.5 L0.8 2.5 L3 4.5" stroke="#d2d2d2" stroke-width="1" fill="none"/></svg>
<div class="a" style="left:1371px;top:198.4px;width:14.5px;height:17px;background:#4a4a4a;border-radius:2px"></div>
<svg style="left:1374.75px;top:200.9px" width="7" height="12" viewBox="0 0 7 12"><path d="M0.7 3.7 L3.5 1 L6.3 3.7 M0.7 8.3 L3.5 11 L6.3 8.3" fill="none" stroke="#e4e4e4" stroke-width="1.4" stroke-linecap="round" stroke-linejoin="round"/></svg>
<div class="a" style="left:1387.3px;top:198.4px;width:42px;height:17px;background:#444444;border-radius:2px"></div>
<div class="t" style="left:1390.7px;top:202.2px;font-size:10.3px;color:#f0f0f0;letter-spacing:-0.3px;">0</div>
<div class="a" style="left:1431px;top:198.4px;width:15.5px;height:17px;background:#4a4a4a;border-radius:2px"></div>
<svg style="left:1434.95px;top:205.1px" width="7.5" height="4" viewBox="0 0 7.5 4"><path d="M0.5 0.5 L3.75 3.5 L7.0 0.5" fill="none" stroke="#e0e0e0" stroke-width="1.6" stroke-linecap="round" stroke-linejoin="round"/></svg>
<div class="a" style="left:1478px;top:199px;width:16.5px;height:11px;background:#c8c8c8"></div>
<div class="t" style="left:1479px;top:199.6px;font-size:10.5px;letter-spacing:-1px;color:#535353;font-weight:bold;font-family:'Liberation Serif',serif;">VA</div>
<svg style="left:1478px;top:211px" width="17" height="5" viewBox="0 0 17 5"><path d="M1 2.5 H16 M3 0.5 L0.8 2.5 L3 4.5 M14 0.5 L16.2 2.5 L14 4.5" stroke="#cfcfcf" stroke-width="1" fill="none"/></svg>
<div class="a" style="left:1499.5px;top:198.4px;width:15px;height:17px;background:#4a4a4a;border-radius:2px"></div>
<svg style="left:1503.5px;top:200.9px" width="7" height="12" viewBox="0 0 7 12"><path d="M0.7 3.7 L3.5 1 L6.3 3.7 M0.7 8.3 L3.5 11 L6.3 8.3" fill="none" stroke="#e4e4e4" stroke-width="1.4" stroke-linecap="round" stroke-linejoin="round"/></svg>
<div class="a" style="left:1516.3px;top:198.4px;width:41.3px;height:17px;background:#444444;border-radius:2px"></div>
<div class="t" style="left:1519px;top:202.2px;font-size:10.3px;color:#f0f0f0;letter-spacing:-0.35px;">0</div>
<div class="a" style="left:1559.4px;top:198.4px;width:15.5px;height:17px;background:#4a4a4a;border-radius:2px"></div>
<svg style="left:1563.25px;top:205.1px" width="7.5" height="4" viewBox="0 0 7.5 4"><path d="M0.5 0.5 L3.75 3.5 L7.0 0.5" fill="none" stroke="#e0e0e0" stroke-width="1.6" stroke-linecap="round" stroke-linejoin="round"/></svg>
<div class="a" style="left:1350.5px;top:222.5px;width:211px;height:1px;background:#5e5e5e;"></div>
<div class="t" style="left:1348.8px;top:235.8px;font-size:10.3px;color:#c6c6c6;letter-spacing:-0.444px;">Snap to Glyph</div>
<div class="a" style="left:1418px;top:234.3px;width:13px;height:13px;border-radius:50%;border:1.3px solid #cdcdcd"></div>
<div class="t" style="left:1422.6px;top:236.3px;font-size:9.5px;font-weight:bold;color:#d6d6d6;font-family:'Liberation Serif',serif;">i</div>
<div class="a" style="left:1351px;top:257.4px;width:22.2px;height:22.2px;background:#2d2d2d;border-radius:3px"></div>
<div class="t" style="left:1354.3px;top:261.5px;font-size:12px;color:#f4f4f4;letter-spacing:-0.5px;">Ax</div>
<div class="a" style="left:1354px;top:273.7px;width:16.5px;height:1.2px;background:#f4f4f4;"></div>
<div class="a" style="left:1386px;top:257.4px;width:22.2px;height:22.2px;background:#2d2d2d;border-radius:3px"></div>
<div class="t" style="left:1389.3px;top:262.5px;font-size:12px;color:#f4f4f4;letter-spacing:-0.5px;">Ax</div>
<div class="a" style="left:1389px;top:265.6px;width:16.5px;height:1.2px;background:#f4f4f4;"></div>
<div class="a" style="left:1421.3px;top:257.4px;width:22.2px;height:22.2px;background:#2d2d2d;border-radius:3px"></div>
<div class="a" style="left:1424px;top:260px;width:17px;height:17px;border:1.2px solid #f4f4f4"></div>
<div class="t" style="left:1426px;top:261.5px;font-size:11px;color:#f4f4f4;letter-spacing:-0.6px;">Ag</div>
<div class="t" style="left:1461px;top:262.5px;font-size:11px;color:#9c9c9c;letter-spacing:-0.6px;">Ag</div>
<div class="a" style="left:1459px;top:264.5px;width:17px;height:1px;background:#9c9c9c;"></div>
<div class="a" style="left:1459px;top:274.5px;width:17px;height:1px;background:#9c9c9c;"></div>
<div class="a" style="left:1491px;top:256px;width:1px;height:25px;background:#474747;"></div>
<div class="a" style="left:1503.8px;top:257.4px;width:22.2px;height:22.2px;background:#2d2d2d;border-radius:3px"></div>
<div class="t" style="left:1507px;top:262.0px;font-size:13px;color:#f4f4f4;">A</div>
<svg style="left:1515px;top:261px" width="7" height="15" viewBox="0 0 7 15"><path d="M0.8 0.5 L6 14.5" stroke="#f4f4f4" stroke-width="1.2"/></svg>
<div class="a" style="left:1538.8px;top:257.4px;width:22.2px;height:22.2px;background:#2d2d2d;border-radius:3px"></div>
<div class="t" style="left:1545px;top:262.5px;font-size:13px;color:#f4f4f4;font-style:italic;">A</div>
<div class="a" style="left:1550.3px;top:260.5px;width:4.5px;height:4.5px;border-radius:50%;border:1px solid #f4f4f4"></div>
<div class="a" style="left:1344px;top:285.5px;width:237.5px;height:2.5px;background:#353535;"></div>
<div class="a" style="left:1344px;top:288px;width:237.5px;height:112px;background:#535353;"></div>
<div class="a" style="left:1344px;top:288px;width:237.5px;height:25.5px;background:#424242;"></div>
<div class="a" style="left:1344px;top:288px;width:63.5px;height:26.5px;background:#535353;"></div>
<div class="t" style="left:1353px;top:295.8px;font-size:10.5px;color:#f2f2f2;font-weight:bold;letter-spacing:-0.607px;">OpenType</div>
<div class="a" style="left:1565px;top:298px;width:10px;height:1.4px;background:#b8b8b8;"></div>
<div class="a" style="left:1565px;top:301px;width:10px;height:1.4px;background:#b8b8b8;"></div>
<div class="a" style="left:1565px;top:304px;width:10px;height:1.4px;background:#b8b8b8;"></div>
<div class="t" style="left:1355.8px;top:325.9px;font-size:10.3px;color:#b4b4b4;letter-spacing:-0.379px;">Figure:</div>
<div class="a" style="left:1390px;top:321.4px;width:185px;height:17.5px;background:#444444;border-radius:2px"></div>
<div class="t" style="left:1394.7px;top:325.4px;font-size:10.3px;color:#f2f2f2;font-weight:bold;letter-spacing:-0.66px;">Default Figure</div>
<svg style="left:1562.75px;top:328.0px" width="7.5" height="4" viewBox="0 0 7.5 4"><path d="M0.5 0.5 L3.75 3.5 L7.0 0.5" fill="none" stroke="#e0e0e0" stroke-width="1.6" stroke-linecap="round" stroke-linejoin="round"/></svg>
<div class="t" style="left:1349.6px;top:350.4px;font-size:10.3px;color:#b4b4b4;letter-spacing:-0.456px;">Position:</div>
<div class="a" style="left:1390px;top:346.2px;width:185px;height:17.3px;background:#444444;border-radius:2px"></div>
<div class="t" style="left:1394.7px;top:350.1px;font-size:10.3px;color:#f2f2f2;font-weight:bold;letter-spacing:-0.756px;">Default Position</div>
<svg style="left:1562.75px;top:352.7px" width="7.5" height="4" viewBox="0 0 7.5 4"><path d="M0.5 0.5 L3.75 3.5 L7.0 0.5" fill="none" stroke="#e0e0e0" stroke-width="1.6" stroke-linecap="round" stroke-linejoin="round"/></svg>
<div class="a" style="left:1350.5px;top:371.3px;width:22.3px;height:21.7px;background:#2d2d2d;border-radius:3px"></div>
<div class="t" style="left:1355.5px;top:373.5px;font-size:17px;color:#f6f6f6;font-family:'Liberation Serif',serif;">fi</div>
<div class="t" style="left:1380.5px;top:372.5px;font-size:19px;color:#757575;font-style:italic;font-weight:bold;font-family:'Liberation Serif',serif;">o</div>
<svg style="left:1380px;top:373px" width="14" height="18" viewBox="0 0 14 18"><path d="M3 16 L12 1.5" stroke="#757575" stroke-width="1.5"/></svg>
<div class="t" style="left:1404px;top:374.5px;font-size:16px;color:#757575;font-family:'Liberation Serif',serif;">st</div>
<div class="t" style="left:1429px;top:373.5px;font-size:17px;color:#757575;font-style:italic;font-family:'Liberation Serif',serif;">A</div>
<div class="t" style="left:1452.5px;top:378px;font-size:13.5px;color:#e6e6e6;letter-spacing:-0.5px;font-family:'Liberation Serif',serif;">aa</div>
<svg style="left:1452.5px;top:374px" width="16" height="5" viewBox="0 0 16 5"><path d="M0.5 2.5 H14 M12.3 0.7 L14.6 2.5 L12.3 4.3" stroke="#e6e6e6" stroke-width="1" fill="none"/></svg>
<div class="t" style="left:1478.5px;top:373px;font-size:18px;color:#757575;font-style:italic;font-weight:bold;font-family:'Liberation Serif',serif;">T</div>
<div class="t" style="left:1505.5px;top:375.5px;font-size:17px;color:#e9e9e9;">1</div>
<div class="t" style="left:1513.5px;top:374.1px;font-size:8.5px;color:#e9e9e9;font-weight:bold;letter-spacing:-0.3px;">st</div>
<div class="t" style="left:1527.5px;top:374.0px;font-size:19px;color:#e9e9e9;">½</div>
<div class="a" style="left:1553px;top:374.5px;width:14px;height:14px;border:1px solid #757575"></div>
<div class="a" style="left:1556px;top:377.5px;width:13px;height:13px;border:1px solid #757575"></div>
<div class="t" style="left:1558.8px;top:379.8px;font-size:9.5px;color:#757575;font-family:'Liberation Serif',serif;">a</div>
<div class="a" style="left:1344px;top:399px;width:237.5px;height:2.5px;background:#353535;"></div>
<div class="a" style="left:1344px;top:401.5px;width:237.5px;height:170px;background:#535353;"></div>
<div class="a" style="left:1344px;top:401.5px;width:237.5px;height:26.5px;background:#424242;"></div>
<div class="a" style="left:1344px;top:401.5px;width:76.6px;height:27.5px;background:#535353;"></div>
<svg style="left:1349.0px;top:409.5px" width="5" height="9" viewBox="0 0 5 9"><path d="M0.5 3.2 L2.5 0.8 L4.5 3.2 M0.5 5.8 L2.5 8.2 L4.5 5.8" fill="none" stroke="#9a9a9a" stroke-width="1.1"/></svg>
<div class="t" style="left:1358.5px;top:408.8px;font-size:10.5px;color:#f2f2f2;font-weight:bold;letter-spacing:-0.58px;">Color Guide</div>
<div class="a" style="left:1565px;top:410px;width:10px;height:1.4px;background:#b8b8b8;"></div>
<div class="a" style="left:1565px;top:413px;width:10px;height:1.4px;background:#b8b8b8;"></div>
<div class="a" style="left:1565px;top:416px;width:10px;height:1.4px;background:#b8b8b8;"></div>
<div class="a" style="left:1349.6px;top:435.7px;width:19.8px;height:19px;background:#a97b85;border:1.6px solid #f6f6f6;box-shadow:inset 0 0 0 1.3px #3a2a2e"></div>
<div class="a" style="left:1376px;top:434.8px;width:181.7px;height:21.3px;background:#444;border-radius:2px;border:1px solid #4e4e4e"></div>
<div class="a" style="left:1393.7px;top:438px;width:14.3px;height:16px;background:#693540;"></div>
<div class="a" style="left:1408px;top:438px;width:15.7px;height:16px;background:#685c32;"></div>
<div class="a" style="left:1423.7px;top:438px;width:15.3px;height:16px;background:#5ac060;"></div>
<div class="a" style="left:1439px;top:438px;width:15.3px;height:16px;background:#8088fc;"></div>
<div class="a" style="left:1377.6px;top:438px;width:16.1px;height:16px;background:#a97b85;border:1.3px solid #e8e8e8;box-shadow:inset 0 0 0 1px #3a2a2e"></div>
<div class="a" style="left:1559.4px;top:434.8px;width:15.8px;height:21.3px;background:#4a4a4a;border-radius:2px"></div>
<svg style="left:1563.55px;top:443.5px" width="7.5" height="4" viewBox="0 0 7.5 4"><path d="M0.5 0.5 L3.75 3.5 L7.0 0.5" fill="none" stroke="#e0e0e0" stroke-width="1.6" stroke-linecap="round" stroke-linejoin="round"/></svg>
<div class="t" style="left:1375.2px;top:465.9px;font-size:10.3px;color:#cacaca;font-weight:bold;letter-spacing:-0.406px;">Shades</div>
<svg style="left:1453.8px;top:470.5px" width="5" height="3.4" viewBox="0 0 5 3.4"><path d="M0 0 H5 L2.5 3.4 Z" fill="#cfcfcf"/></svg>
<div class="t" style="left:1525.7px;top:465.9px;font-size:10.3px;color:#cacaca;font-weight:bold;letter-spacing:-0.163px;">Tints</div>
<div class="a" style="left:1349.5px;top:483.5px;width:215px;height:69px;background:#161616;"></div>
<div class="a" style="left:1350.5px;top:484.5px;width:23px;height:13px;background:#000000;"></div>
<div class="a" style="left:1374.5px;top:484.5px;width:23px;height:13px;background:#2b1d20;"></div>
<div class="a" style="left:1398.5px;top:484.5px;width:22px;height:13px;background:#644850;"></div>
<div class="a" style="left:1421.5px;top:484.5px;width:23px;height:13px;background:#93636f;"></div>
<div class="a" style="left:1445.5px;top:484.5px;width:23px;height:13px;background:#b17a89;"></div>
<div class="a" style="left:1469.5px;top:484.5px;width:23px;height:13px;background:#c99aa5;"></div>
<div class="a" style="left:1493.5px;top:484.5px;width:23px;height:13px;background:#dbbbc3;"></div>
<div class="a" style="left:1517.5px;top:484.5px;width:22px;height:13px;background:#e6d1d6;"></div>
<div class="a" style="left:1540.5px;top:484.5px;width:23px;height:13px;background:#f1e7ea;"></div>
<div class="a" style="left:1350.5px;top:498.5px;width:23px;height:12px;background:#000000;"></div>
<div class="a" style="left:1374.5px;top:498.5px;width:23px;height:12px;background:#1c0e11;"></div>
<div class="a" style="left:1398.5px;top:498.5px;width:22px;height:12px;background:#341a20;"></div>
<div class="a" style="left:1421.5px;top:498.5px;width:23px;height:12px;background:#4f2730;"></div>
<div class="a" style="left:1445.5px;top:498.5px;width:23px;height:12px;background:#693540;"></div>
<div class="a" style="left:1469.5px;top:498.5px;width:23px;height:12px;background:#9c6874;"></div>
<div class="a" style="left:1493.5px;top:498.5px;width:23px;height:12px;background:#b9979f;"></div>
<div class="a" style="left:1517.5px;top:498.5px;width:22px;height:12px;background:#d3bfc4;"></div>
<div class="a" style="left:1540.5px;top:498.5px;width:23px;height:12px;background:#e8dee0;"></div>
<div class="a" style="left:1350.5px;top:511.5px;width:23px;height:13px;background:#000000;"></div>
<div class="a" style="left:1374.5px;top:511.5px;width:23px;height:13px;background:#1b180e;"></div>
<div class="a" style="left:1398.5px;top:511.5px;width:22px;height:13px;background:#352f1b;"></div>
<div class="a" style="left:1421.5px;top:511.5px;width:23px;height:13px;background:#4f4628;"></div>
<div class="a" style="left:1445.5px;top:511.5px;width:23px;height:13px;background:#685c35;"></div>
<div class="a" style="left:1469.5px;top:511.5px;width:23px;height:13px;background:#988f70;"></div>
<div class="a" style="left:1493.5px;top:511.5px;width:23px;height:13px;background:#b3ac98;"></div>
<div class="a" style="left:1517.5px;top:511.5px;width:22px;height:13px;background:#cdc8bc;"></div>
<div class="a" style="left:1540.5px;top:511.5px;width:23px;height:13px;background:#e4e1db;"></div>
<div class="a" style="left:1350.5px;top:525.5px;width:23px;height:13px;background:#000000;"></div>
<div class="a" style="left:1374.5px;top:525.5px;width:23px;height:13px;background:#173218;"></div>
<div class="a" style="left:1398.5px;top:525.5px;width:22px;height:13px;background:#2f7034;"></div>
<div class="a" style="left:1421.5px;top:525.5px;width:23px;height:13px;background:#419548;"></div>
<div class="a" style="left:1445.5px;top:525.5px;width:23px;height:13px;background:#5cc262;"></div>
<div class="a" style="left:1469.5px;top:525.5px;width:23px;height:13px;background:#80cf85;"></div>
<div class="a" style="left:1493.5px;top:525.5px;width:23px;height:13px;background:#a4dca7;"></div>
<div class="a" style="left:1517.5px;top:525.5px;width:22px;height:13px;background:#c2e7c4;"></div>
<div class="a" style="left:1540.5px;top:525.5px;width:23px;height:13px;background:#e2f3e3;"></div>
<div class="a" style="left:1350.5px;top:539.5px;width:23px;height:12px;background:#000000;"></div>
<div class="a" style="left:1374.5px;top:539.5px;width:23px;height:12px;background:#1f2142;"></div>
<div class="a" style="left:1398.5px;top:539.5px;width:22px;height:12px;background:#40468a;"></div>
<div class="a" style="left:1421.5px;top:539.5px;width:23px;height:12px;background:#6167c4;"></div>
<div class="a" style="left:1445.5px;top:539.5px;width:23px;height:12px;background:#8088fb;"></div>
<div class="a" style="left:1469.5px;top:539.5px;width:23px;height:12px;background:#9fa5fd;"></div>
<div class="a" style="left:1493.5px;top:539.5px;width:23px;height:12px;background:#bcc0fe;"></div>
<div class="a" style="left:1517.5px;top:539.5px;width:22px;height:12px;background:#d6d8fe;"></div>
<div class="a" style="left:1540.5px;top:539.5px;width:23px;height:12px;background:#ebecff;"></div>
<div class="a" style="left:1565.3px;top:484px;width:9.3px;height:68.5px;background:#4a4a4a;border-radius:2px"></div>
<div class="a" style="left:1566.5px;top:493px;width:7px;height:50px;background:#585858;border-radius:3px"></div>
<svg style="left:1567.0px;top:487.5px" width="6" height="3" viewBox="0 0 6 3"><path d="M0.5 2.5 L3.0 0.5 L5.5 2.5" fill="none" stroke="#8c8c8c" stroke-width="1.2" stroke-linecap="round" stroke-linejoin="round"/></svg>
<svg style="left:1567.0px;top:546.0px" width="6" height="3" viewBox="0 0 6 3"><path d="M0.5 0.5 L3.0 2.5 L5.5 0.5" fill="none" stroke="#8c8c8c" stroke-width="1.2" stroke-linecap="round" stroke-linejoin="round"/></svg>
<svg style="left:1354.8px;top:557.5px" width="16" height="11" viewBox="0 0 16 11"><rect x="0.6" y="0.6" width="12" height="8.6" fill="none" stroke="#c4c4c4" stroke-width="1.1"/><path d="M4.6 0.6 V9.2 M8.6 0.6 V9.2 M0.6 4.9 H12.6" stroke="#c4c4c4" stroke-width="1"/><path d="M13.8 9 L15.8 9 L14.8 10.6 Z" fill="#c4c4c4"/></svg>
<div class="t" style="left:1379.8px;top:557.6px;font-size:10.3px;color:#c4c4c4;font-weight:bold;letter-spacing:-0.887px;">None</div>
<svg style="left:1518.5px;top:557px" width="12" height="12" viewBox="0 0 12 12"><circle cx="6" cy="6" r="5.4" fill="#9a9a9a" stroke="#d0d0d0" stroke-width="1"/><path d="M3 3 C5 2 6 4 5 6 C4 8 6 9 8 8 M7 2 C9 3 10 5 9 7" stroke="#dedede" stroke-width="1" fill="none"/></svg>
<svg style="left:1541.5px;top:557px" width="16" height="12" viewBox="0 0 16 12"><rect x="5.6" y="0.6" width="9.8" height="8.8" fill="none" stroke="#d0d0d0" stroke-width="1.1"/><path d="M8.9 0.6 V9.4 M12.2 0.6 V9.4" stroke="#d0d0d0" stroke-width="1"/><path d="M0.5 8.5 H5.5 M3 6 V11" stroke="#d0d0d0" stroke-width="1.4"/></svg>
<div class="a" style="left:1344px;top:571.5px;width:237.5px;height:2.5px;background:#353535;"></div>
<div class="a" style="left:1344px;top:574px;width:237.5px;height:117.5px;background:#535353;"></div>
<div class="a" style="left:1344px;top:574px;width:237.5px;height:25.5px;background:#424242;"></div>
<div class="a" style="left:1344px;top:574px;width:68.3px;height:26.5px;background:#535353;"></div>
<svg style="left:1349.0px;top:582.0px" width="5" height="9" viewBox="0 0 5 9"><path d="M0.5 3.2 L2.5 0.8 L4.5 3.2 M0.5 5.8 L2.5 8.2 L4.5 5.8" fill="none" stroke="#9a9a9a" stroke-width="1.1"/></svg>
<div class="t" style="left:1359.2px;top:581.2px;font-size:10.5px;color:#f2f2f2;font-weight:bold;letter-spacing:-0.826px;">Paragraph</div>
<div class="a" style="left:1565px;top:583px;width:10px;height:1.4px;background:#b8b8b8;"></div>
<div class="a" style="left:1565px;top:586px;width:10px;height:1.4px;background:#b8b8b8;"></div>
<div class="a" style="left:1565px;top:589px;width:10px;height:1.4px;background:#b8b8b8;"></div>
<div class="a" style="left:1351.4px;top:607px;width:22.4px;height:21.8px;background:#2b2b2b;border-radius:3px"></div>
<div class="a" style="left:1355.6px;top:611.5px;width:11px;height:1.3px;background:#f4f4f4;"></div>
<div class="a" style="left:1355.6px;top:614.5px;width:14px;height:1.3px;background:#f4f4f4;"></div>
<div class="a" style="left:1355.6px;top:617.5px;width:10px;height:1.3px;background:#f4f4f4;"></div>
<div class="a" style="left:1355.6px;top:620.5px;width:14px;height:1.3px;background:#f4f4f4;"></div>
<div class="a" style="left:1355.6px;top:623.5px;width:12px;height:1.3px;background:#f4f4f4;"></div>
<div class="a" style="left:1388.2px;top:611.5px;width:14px;height:1.3px;background:#c2c2c2;"></div>
<div class="a" style="left:1390.2px;top:614.5px;width:10px;height:1.3px;background:#c2c2c2;"></div>
<div class="a" style="left:1388.2px;top:617.5px;width:14px;height:1.3px;background:#c2c2c2;"></div>
<div class="a" style="left:1390.2px;top:620.5px;width:10px;height:1.3px;background:#c2c2c2;"></div>
<div class="a" style="left:1388.2px;top:623.5px;width:14px;height:1.3px;background:#c2c2c2;"></div>
<div class="a" style="left:1421.2px;top:611.5px;width:14px;height:1.3px;background:#c2c2c2;"></div>
<div class="a" style="left:1424.2px;top:614.5px;width:11px;height:1.3px;background:#c2c2c2;"></div>
<div class="a" style="left:1421.2px;top:617.5px;width:14px;height:1.3px;background:#c2c2c2;"></div>
<div class="a" style="left:1424.2px;top:620.5px;width:11px;height:1.3px;background:#c2c2c2;"></div>
<div class="a" style="left:1421.2px;top:623.5px;width:14px;height:1.3px;background:#c2c2c2;"></div>
<div class="a" style="left:1454.5px;top:611.5px;width:14px;height:1.3px;background:#c2c2c2;"></div>
<div class="a" style="left:1454.5px;top:614.5px;width:14px;height:1.3px;background:#c2c2c2;"></div>
<div class="a" style="left:1454.5px;top:617.5px;width:14px;height:1.3px;background:#c2c2c2;"></div>
<div class="a" style="left:1454.5px;top:620.5px;width:14px;height:1.3px;background:#c2c2c2;"></div>
<div class="a" style="left:1454.5px;top:623.5px;width:9px;height:1.3px;background:#c2c2c2;"></div>
<div class="a" style="left:1487.9px;top:611.5px;width:14px;height:1.3px;background:#c2c2c2;"></div>
<div class="a" style="left:1487.9px;top:614.5px;width:14px;height:1.3px;background:#c2c2c2;"></div>
<div class="a" style="left:1487.9px;top:617.5px;width:14px;height:1.3px;background:#c2c2c2;"></div>
<div class="a" style="left:1487.9px;top:620.5px;width:14px;height:1.3px;background:#c2c2c2;"></div>
<div class="a" style="left:1490.4px;top:623.5px;width:9px;height:1.3px;background:#c2c2c2;"></div>
<div class="a" style="left:1521.5px;top:611.5px;width:14px;height:1.3px;background:#c2c2c2;"></div>
<div class="a" style="left:1521.5px;top:614.5px;width:14px;height:1.3px;background:#c2c2c2;"></div>
<div class="a" style="left:1521.5px;top:617.5px;width:14px;height:1.3px;background:#c2c2c2;"></div>
<div class="a" style="left:1521.5px;top:620.5px;width:14px;height:1.3px;background:#c2c2c2;"></div>
<div class="a" style="left:1526.5px;top:623.5px;width:9px;height:1.3px;background:#c2c2c2;"></div>
<div class="a" style="left:1554.3px;top:611.5px;width:14px;height:1.3px;background:#c2c2c2;"></div>
<div class="a" style="left:1554.3px;top:614.5px;width:14px;height:1.3px;background:#c2c2c2;"></div>
<div class="a" style="left:1554.3px;top:617.5px;width:14px;height:1.3px;background:#c2c2c2;"></div>
<div class="a" style="left:1554.3px;top:620.5px;width:14px;height:1.3px;background:#c2c2c2;"></div>
<div class="a" style="left:1554.3px;top:623.5px;width:14px;height:1.3px;background:#c2c2c2;"></div>
<div class="a" style="left:1350.5px;top:636px;width:224px;height:1px;background:#5e5e5e;"></div>
<svg style="left:1350px;top:643.5px" width="16" height="16" viewBox="0 0 16 16"><path d="M7 0.5 V15.5" stroke="#cfcfcf" stroke-width="1"/><path d="M9 3 H15.5 M9 6 H15.5 M9 9 H15.5 M9 12 H15.5" stroke="#cfcfcf" stroke-width="1"/><path d="M0.5 7.5 H5 M3.3 5.6 L5.3 7.5 L3.3 9.4" stroke="#cfcfcf" stroke-width="1" fill="none"/></svg>
<div class="a" style="left:1371px;top:643px;width:14.5px;height:17.5px;background:#4a4a4a;border-radius:2px"></div>
<svg style="left:1374.75px;top:645.5px" width="7" height="12" viewBox="0 0 7 12"><path d="M0.7 3.7 L3.5 1 L6.3 3.7 M0.7 8.3 L3.5 11 L6.3 8.3" fill="none" stroke="#e4e4e4" stroke-width="1.4" stroke-linecap="round" stroke-linejoin="round"/></svg>
<div class="a" style="left:1387px;top:643px;width:60.3px;height:17.5px;background:#444444;border-radius:2px"></div>
<div class="t" style="left:1390px;top:646.9px;font-size:10.3px;color:#f0f0f0;letter-spacing:-0.2px;">0 pt</div>
<svg style="left:1477px;top:643.5px" width="16" height="16" viewBox="0 0 16 16"><path d="M9 0.5 V15.5" stroke="#cfcfcf" stroke-width="1"/><path d="M0.5 3 H7 M0.5 6 H7 M0.5 9 H7 M0.5 12 H7" stroke="#cfcfcf" stroke-width="1"/><path d="M15.5 7.5 H11 M12.7 5.6 L10.7 7.5 L12.7 9.4" stroke="#cfcfcf" stroke-width="1" fill="none"/></svg>
<div class="a" style="left:1498.5px;top:643px;width:15px;height:17.5px;background:#4a4a4a;border-radius:2px"></div>
<svg style="left:1502.5px;top:645.5px" width="7" height="12" viewBox="0 0 7 12"><path d="M0.7 3.7 L3.5 1 L6.3 3.7 M0.7 8.3 L3.5 11 L6.3 8.3" fill="none" stroke="#e4e4e4" stroke-width="1.4" stroke-linecap="round" stroke-linejoin="round"/></svg>
<div class="a" style="left:1514.7px;top:643px;width:60.3px;height:17.5px;background:#444444;border-radius:2px"></div>
<div class="t" style="left:1517.6px;top:646.9px;font-size:10.3px;color:#f0f0f0;letter-spacing:-0.2px;">0 pt</div>
<svg style="left:1350px;top:668px" width="16" height="16" viewBox="0 0 16 16"><path d="M6 5 H15.5 M6 8 H15.5 M6 11 H15.5 M6 14 H15.5 M9 2 H15.5" stroke="#cfcfcf" stroke-width="1"/><path d="M0.5 2 H5 M3.3 0.3 L5.3 2 L3.3 3.7" stroke="#cfcfcf" stroke-width="1" fill="none"/></svg>
<div class="a" style="left:1371px;top:667.7px;width:14.5px;height:17.5px;background:#4a4a4a;border-radius:2px"></div>
<svg style="left:1374.75px;top:670.2px" width="7" height="12" viewBox="0 0 7 12"><path d="M0.7 3.7 L3.5 1 L6.3 3.7 M0.7 8.3 L3.5 11 L6.3 8.3" fill="none" stroke="#e4e4e4" stroke-width="1.4" stroke-linecap="round" stroke-linejoin="round"/></svg>
<div class="a" style="left:1387px;top:667.7px;width:60.3px;height:17.5px;background:#444444;border-radius:2px"></div>
<div class="t" style="left:1390px;top:671.6px;font-size:10.3px;color:#f0f0f0;letter-spacing:-0.2px;">0 pt</div>
<div class="a" style="left:1344px;top:691.5px;width:237.5px;height:1.5px;background:#2e2e2e;"></div>
<div class="a" style="left:1344px;top:693px;width:237.5px;height:6.5px;background:#505050;border-radius:0 0 3px 3px"></div>
<div class="a" style="left:1453px;top:694.5px;width:19px;height:2.5px;background:#444;"></div>
</body></html>
